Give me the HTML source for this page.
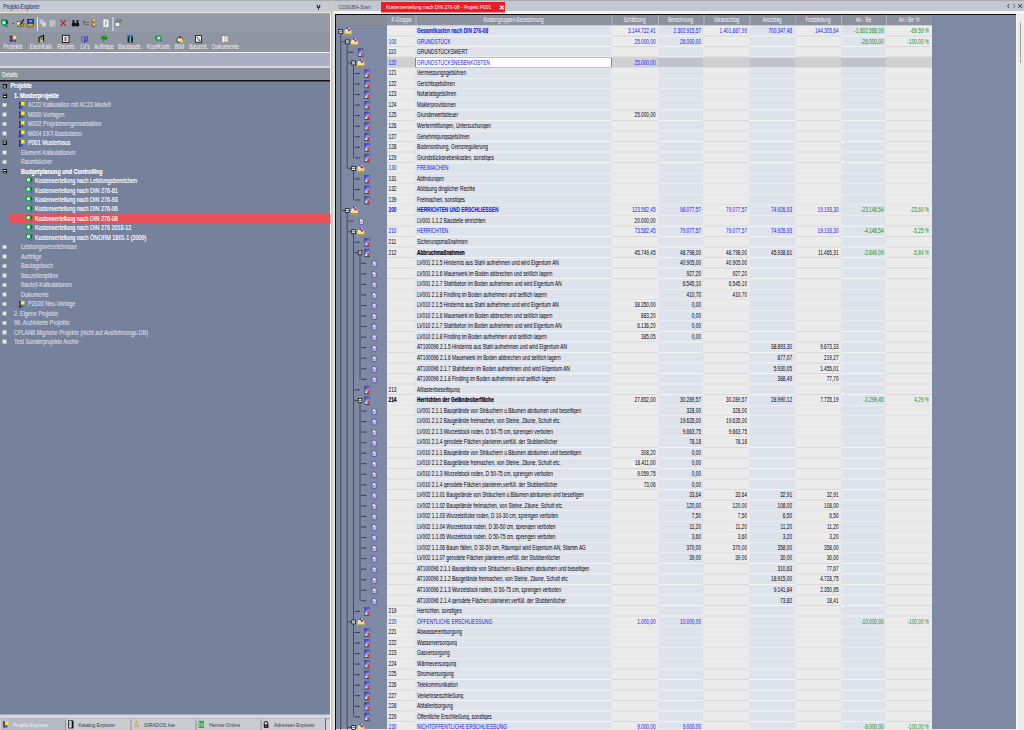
<!DOCTYPE html>
<html><head><meta charset="utf-8"><style>
html,body{margin:0;padding:0;width:1024px;height:730px;overflow:hidden;background:#76819b}
#root{position:absolute;left:0;top:0;width:2048px;height:1460px;transform:scale(0.5);transform-origin:0 0;overflow:hidden}
#root div{position:absolute}
#root .t{white-space:nowrap;font-family:"Liberation Sans",sans-serif}
</style></head><body><div id="root">
<div style="left:0.00px;top:0.00px;width:2048.00px;height:1460.00px;background:#76819b;"></div>
<div style="left:0.00px;top:0.00px;width:661.00px;height:2.00px;background:#a9acb2;"></div>
<div style="left:0.00px;top:2.00px;width:661.00px;height:22.00px;background:#c5c9d1;"></div>
<div class="t" style="left:5.60px;top:1.80px;height:22.00px;line-height:22.00px;font-size:13.20px;color:#34406e;font-weight:normal;transform:scaleX(0.77);transform-origin:0 50%;-webkit-text-stroke:0.25px #34406e;">Projekt-Explorer</div>
<div style="left:0.00px;top:24.00px;width:661.00px;height:3.20px;background:#e9e6d6;"></div>
<div style="left:0.00px;top:27.20px;width:661.00px;height:36.20px;background:#959ba6;"></div>
<div style="left:0.00px;top:63.40px;width:661.00px;height:1.60px;background:#a4a9b3;"></div>
<div style="left:0.00px;top:65.00px;width:661.00px;height:38.60px;background:#8f95a1;"></div>
<div style="left:0.00px;top:103.60px;width:661.00px;height:2.80px;background:#f2f2f2;"></div>
<div style="left:0.00px;top:106.40px;width:661.00px;height:26.00px;background:#aab0c2;"></div>
<div style="left:0.00px;top:132.40px;width:661.00px;height:3.60px;background:#d5d6d8;"></div>
<div style="left:0.00px;top:136.00px;width:661.00px;height:24.40px;background:#8a909c;"></div>
<div class="t" style="left:3.60px;top:137.80px;height:24.40px;line-height:24.40px;font-size:12.80px;color:#eef2e4;font-weight:normal;transform:scaleX(0.8);transform-origin:0 50%;-webkit-text-stroke:0.25px #eef2e4;">Details</div>
<div style="left:0.00px;top:160.40px;width:661.00px;height:2.40px;background:#151515;"></div>
<div style="left:0.00px;top:1429.40px;width:661.00px;height:7.60px;background:#d6d7da;"></div>
<div style="left:0.00px;top:1437.00px;width:661.00px;height:23.00px;background:#c9ccd3;"></div>
<div style="left:2.00px;top:1437.00px;width:128.00px;height:23.00px;background:#b4b9c4;"></div>
<div style="left:130.00px;top:1439.00px;width:1.60px;height:21.00px;background:#8e929a;"></div>
<div style="left:261.40px;top:1439.00px;width:1.60px;height:21.00px;background:#8e929a;"></div>
<div style="left:391.20px;top:1439.00px;width:1.60px;height:21.00px;background:#8e929a;"></div>
<div style="left:521.40px;top:1439.00px;width:1.60px;height:21.00px;background:#8e929a;"></div>
<div style="left:650.00px;top:1436.60px;width:10.00px;height:23.40px;background:#cfd2d8;"></div>
<div style="left:650.00px;top:1436.60px;width:1.80px;height:23.40px;background:#6a6a6a;"></div>
<div style="left:650.00px;top:1436.60px;width:10.00px;height:1.80px;background:#6a6a6a;"></div>
<div style="left:659.80px;top:0.00px;width:3.60px;height:1460.00px;background:#f6f5ee;"></div>
<div style="left:663.40px;top:0.00px;width:2.80px;height:1460.00px;background:#d4d0c2;"></div>
<div style="left:666.20px;top:0.00px;width:4.00px;height:1460.00px;background:#e4e4e0;"></div>
<div style="left:659.80px;top:2.00px;width:2.00px;height:22.00px;background:#c5c9d1;"></div>
<div style="left:659.80px;top:24.00px;width:2.00px;height:3.20px;background:#e9e6d6;"></div>
<div style="left:666.20px;top:0.00px;width:1.60px;height:22.40px;background:#c8c8c4;"></div>
<div style="left:659.80px;top:0.00px;width:8.00px;height:2.00px;background:#a9acb2;"></div>
<div style="left:667.00px;top:0.00px;width:1381.00px;height:2.00px;background:#a9acb2;"></div>
<div style="left:667.00px;top:2.00px;width:1381.00px;height:20.40px;background:#c3c7cf;"></div>
<div style="left:667.00px;top:22.40px;width:1381.00px;height:5.20px;background:#f4f4f4;"></div>
<div style="left:670.00px;top:27.60px;width:1362.00px;height:2.60px;background:#0c0c0c;"></div>
<div style="left:762.00px;top:4.00px;width:248.00px;height:21.20px;background:#e81c28;"></div>
<div class="t" style="left:772.00px;top:4.00px;height:21.20px;line-height:21.20px;font-size:12.00px;color:#ffffff;font-weight:normal;transform:scaleX(0.8);transform-origin:0 50%;">Kostenverteilung nach DIN 276-08 - Projekt P001</div>
<div class="t" style="left:997.00px;top:4.00px;height:21.20px;line-height:21.20px;font-size:13.00px;color:#ffffff;font-weight:bold;transform:scaleX(1.0);transform-origin:0 50%;">✕</div>
<div class="t" style="left:677.00px;top:3.00px;height:21.20px;line-height:21.20px;font-size:12.00px;color:#4a4a55;font-weight:normal;transform:scaleX(0.8);transform-origin:0 50%;">COSUBA-Start</div>
<div style="left:2032.00px;top:27.60px;width:16.00px;height:1432.40px;background:#ececec;"></div>
<div style="left:2032.00px;top:27.60px;width:2.40px;height:1432.40px;background:#f8f8f8;"></div>
<div style="left:2040.20px;top:45.20px;width:1.80px;height:80.80px;background:#a0a0a0;"></div>
<div style="left:670.00px;top:30.00px;width:2.40px;height:1430.00px;background:#0c0c0c;"></div>
<div style="left:1863.60px;top:30.20px;width:168.40px;height:1427.80px;background:#7e89a3;"></div>
<div style="left:672.40px;top:30.20px;width:1191.20px;height:20.80px;background:#8b919d;"></div>
<div style="left:672.40px;top:30.20px;width:101.60px;height:20.80px;background:#888e99;"></div>
<div class="t" style="left:2.50px;width:1600px;text-align:center;top:30.20px;height:20.80px;line-height:20.80px;font-size:12.60px;color:#f4f6fa;font-weight:normal;transform:scaleX(0.74);transform-origin:50% 50%;">K-Gruppe</div>
<div style="left:831.00px;top:30.20px;width:1.80px;height:20.80px;background:#b3b8c0;"></div>
<div class="t" style="left:227.00px;width:1600px;text-align:center;top:30.20px;height:20.80px;line-height:20.80px;font-size:12.60px;color:#f4f6fa;font-weight:normal;transform:scaleX(0.74);transform-origin:50% 50%;">Kostengruppen-Bezeichnung</div>
<div style="left:1223.00px;top:30.20px;width:1.80px;height:20.80px;background:#b3b8c0;"></div>
<div class="t" style="left:469.40px;width:1600px;text-align:center;top:30.20px;height:20.80px;line-height:20.80px;font-size:12.60px;color:#f4f6fa;font-weight:normal;transform:scaleX(0.74);transform-origin:50% 50%;">Schätzung</div>
<div style="left:1315.80px;top:30.20px;width:1.80px;height:20.80px;background:#b3b8c0;"></div>
<div class="t" style="left:561.40px;width:1600px;text-align:center;top:30.20px;height:20.80px;line-height:20.80px;font-size:12.60px;color:#f4f6fa;font-weight:normal;transform:scaleX(0.74);transform-origin:50% 50%;">Berechnung</div>
<div style="left:1407.00px;top:30.20px;width:1.80px;height:20.80px;background:#b3b8c0;"></div>
<div class="t" style="left:653.00px;width:1600px;text-align:center;top:30.20px;height:20.80px;line-height:20.80px;font-size:12.60px;color:#f4f6fa;font-weight:normal;transform:scaleX(0.74);transform-origin:50% 50%;">Voranschlag</div>
<div style="left:1499.00px;top:30.20px;width:1.80px;height:20.80px;background:#b3b8c0;"></div>
<div class="t" style="left:744.30px;width:1600px;text-align:center;top:30.20px;height:20.80px;line-height:20.80px;font-size:12.60px;color:#f4f6fa;font-weight:normal;transform:scaleX(0.74);transform-origin:50% 50%;">Anschlag</div>
<div style="left:1589.60px;top:30.20px;width:1.80px;height:20.80px;background:#b3b8c0;"></div>
<div class="t" style="left:835.80px;width:1600px;text-align:center;top:30.20px;height:20.80px;line-height:20.80px;font-size:12.60px;color:#f4f6fa;font-weight:normal;transform:scaleX(0.74);transform-origin:50% 50%;">Feststellung</div>
<div style="left:1682.00px;top:30.20px;width:1.80px;height:20.80px;background:#b3b8c0;"></div>
<div class="t" style="left:927.00px;width:1600px;text-align:center;top:30.20px;height:20.80px;line-height:20.80px;font-size:12.60px;color:#f4f6fa;font-weight:normal;transform:scaleX(0.74);transform-origin:50% 50%;">An - Be</div>
<div style="left:1772.00px;top:30.20px;width:1.80px;height:20.80px;background:#b3b8c0;"></div>
<div class="t" style="left:1017.80px;width:1600px;text-align:center;top:30.20px;height:20.80px;line-height:20.80px;font-size:12.60px;color:#f4f6fa;font-weight:normal;transform:scaleX(0.74);transform-origin:50% 50%;">An / Be %</div>
<div style="left:672.40px;top:49.80px;width:1191.20px;height:1.20px;background:#7b818c;"></div>
<div style="left:774.00px;top:51.00px;width:1089.60px;height:1407.00px;background:#e4e6ea;"></div>
<div style="left:672.40px;top:51.00px;width:101.60px;height:1407.00px;background:#7e89a3;"></div>
<div style="left:774.00px;top:51.00px;width:57.00px;height:1407.00px;background:#ebebeb;"></div>
<div style="left:831.00px;top:51.00px;width:392.00px;height:1407.00px;background:#dee2ea;"></div>
<div style="left:1223.00px;top:51.00px;width:92.80px;height:1407.00px;background:#ebebeb;"></div>
<div style="left:1315.80px;top:51.00px;width:91.20px;height:1407.00px;background:#dee2ea;"></div>
<div style="left:1407.00px;top:51.00px;width:92.00px;height:1407.00px;background:#ebebeb;"></div>
<div style="left:1499.00px;top:51.00px;width:90.60px;height:1407.00px;background:#dee2ea;"></div>
<div style="left:1589.60px;top:51.00px;width:92.40px;height:1407.00px;background:#ebebeb;"></div>
<div style="left:1682.00px;top:51.00px;width:90.00px;height:1407.00px;background:#dee2ea;"></div>
<div style="left:1772.00px;top:51.00px;width:91.60px;height:1407.00px;background:#ebebeb;"></div>
<div style="left:672.40px;top:1458.00px;width:1359.60px;height:2.00px;background:#e8e8e8;"></div>
<div style="left:774.00px;top:114.28px;width:57.00px;height:21.09px;background:#cfcfcf;"></div>
<div style="left:1223.00px;top:114.28px;width:92.80px;height:21.09px;background:#d0d0d0;"></div>
<div style="left:1315.80px;top:114.28px;width:91.20px;height:21.09px;background:#c0c3cb;"></div>
<div style="left:1407.00px;top:114.28px;width:92.00px;height:21.09px;background:#d0d0d0;"></div>
<div style="left:1499.00px;top:114.28px;width:90.60px;height:21.09px;background:#c0c3cb;"></div>
<div style="left:1589.60px;top:114.28px;width:92.40px;height:21.09px;background:#d0d0d0;"></div>
<div style="left:1682.00px;top:114.28px;width:90.00px;height:21.09px;background:#c0c3cb;"></div>
<div style="left:1772.00px;top:114.28px;width:91.60px;height:21.09px;background:#d0d0d0;"></div>
<div style="left:831.00px;top:114.88px;width:392.00px;height:19.89px;background:#ffffff;box-sizing:border-box;border:1.6px solid #202020;"></div>
<div style="left:774.00px;top:71.29px;width:57.00px;height:1.60px;background:#d8d8d8;"></div>
<div style="left:831.00px;top:71.29px;width:392.00px;height:1.60px;background:#f2f4f6;"></div>
<div style="left:1223.00px;top:71.29px;width:92.80px;height:1.60px;background:#d8d8d8;"></div>
<div style="left:1315.80px;top:71.29px;width:91.20px;height:1.60px;background:#f2f4f6;"></div>
<div style="left:1407.00px;top:71.29px;width:92.00px;height:1.60px;background:#d8d8d8;"></div>
<div style="left:1499.00px;top:71.29px;width:90.60px;height:1.60px;background:#f2f4f6;"></div>
<div style="left:1589.60px;top:71.29px;width:92.40px;height:1.60px;background:#d8d8d8;"></div>
<div style="left:1682.00px;top:71.29px;width:90.00px;height:1.60px;background:#f2f4f6;"></div>
<div style="left:1772.00px;top:71.29px;width:91.60px;height:1.60px;background:#d8d8d8;"></div>
<div style="left:774.00px;top:92.39px;width:57.00px;height:1.60px;background:#d8d8d8;"></div>
<div style="left:831.00px;top:92.39px;width:392.00px;height:1.60px;background:#f2f4f6;"></div>
<div style="left:1223.00px;top:92.39px;width:92.80px;height:1.60px;background:#d8d8d8;"></div>
<div style="left:1315.80px;top:92.39px;width:91.20px;height:1.60px;background:#f2f4f6;"></div>
<div style="left:1407.00px;top:92.39px;width:92.00px;height:1.60px;background:#d8d8d8;"></div>
<div style="left:1499.00px;top:92.39px;width:90.60px;height:1.60px;background:#f2f4f6;"></div>
<div style="left:1589.60px;top:92.39px;width:92.40px;height:1.60px;background:#d8d8d8;"></div>
<div style="left:1682.00px;top:92.39px;width:90.00px;height:1.60px;background:#f2f4f6;"></div>
<div style="left:1772.00px;top:92.39px;width:91.60px;height:1.60px;background:#d8d8d8;"></div>
<div style="left:774.00px;top:113.48px;width:57.00px;height:1.60px;background:#d8d8d8;"></div>
<div style="left:831.00px;top:113.48px;width:392.00px;height:1.60px;background:#f2f4f6;"></div>
<div style="left:1223.00px;top:113.48px;width:92.80px;height:1.60px;background:#d8d8d8;"></div>
<div style="left:1315.80px;top:113.48px;width:91.20px;height:1.60px;background:#f2f4f6;"></div>
<div style="left:1407.00px;top:113.48px;width:92.00px;height:1.60px;background:#d8d8d8;"></div>
<div style="left:1499.00px;top:113.48px;width:90.60px;height:1.60px;background:#f2f4f6;"></div>
<div style="left:1589.60px;top:113.48px;width:92.40px;height:1.60px;background:#d8d8d8;"></div>
<div style="left:1682.00px;top:113.48px;width:90.00px;height:1.60px;background:#f2f4f6;"></div>
<div style="left:1772.00px;top:113.48px;width:91.60px;height:1.60px;background:#d8d8d8;"></div>
<div style="left:774.00px;top:134.58px;width:57.00px;height:1.60px;background:#d8d8d8;"></div>
<div style="left:831.00px;top:134.58px;width:392.00px;height:1.60px;background:#f2f4f6;"></div>
<div style="left:1223.00px;top:134.58px;width:92.80px;height:1.60px;background:#d8d8d8;"></div>
<div style="left:1315.80px;top:134.58px;width:91.20px;height:1.60px;background:#f2f4f6;"></div>
<div style="left:1407.00px;top:134.58px;width:92.00px;height:1.60px;background:#d8d8d8;"></div>
<div style="left:1499.00px;top:134.58px;width:90.60px;height:1.60px;background:#f2f4f6;"></div>
<div style="left:1589.60px;top:134.58px;width:92.40px;height:1.60px;background:#d8d8d8;"></div>
<div style="left:1682.00px;top:134.58px;width:90.00px;height:1.60px;background:#f2f4f6;"></div>
<div style="left:1772.00px;top:134.58px;width:91.60px;height:1.60px;background:#d8d8d8;"></div>
<div style="left:774.00px;top:155.67px;width:57.00px;height:1.60px;background:#d8d8d8;"></div>
<div style="left:831.00px;top:155.67px;width:392.00px;height:1.60px;background:#f2f4f6;"></div>
<div style="left:1223.00px;top:155.67px;width:92.80px;height:1.60px;background:#d8d8d8;"></div>
<div style="left:1315.80px;top:155.67px;width:91.20px;height:1.60px;background:#f2f4f6;"></div>
<div style="left:1407.00px;top:155.67px;width:92.00px;height:1.60px;background:#d8d8d8;"></div>
<div style="left:1499.00px;top:155.67px;width:90.60px;height:1.60px;background:#f2f4f6;"></div>
<div style="left:1589.60px;top:155.67px;width:92.40px;height:1.60px;background:#d8d8d8;"></div>
<div style="left:1682.00px;top:155.67px;width:90.00px;height:1.60px;background:#f2f4f6;"></div>
<div style="left:1772.00px;top:155.67px;width:91.60px;height:1.60px;background:#d8d8d8;"></div>
<div style="left:774.00px;top:176.76px;width:57.00px;height:1.60px;background:#d8d8d8;"></div>
<div style="left:831.00px;top:176.76px;width:392.00px;height:1.60px;background:#f2f4f6;"></div>
<div style="left:1223.00px;top:176.76px;width:92.80px;height:1.60px;background:#d8d8d8;"></div>
<div style="left:1315.80px;top:176.76px;width:91.20px;height:1.60px;background:#f2f4f6;"></div>
<div style="left:1407.00px;top:176.76px;width:92.00px;height:1.60px;background:#d8d8d8;"></div>
<div style="left:1499.00px;top:176.76px;width:90.60px;height:1.60px;background:#f2f4f6;"></div>
<div style="left:1589.60px;top:176.76px;width:92.40px;height:1.60px;background:#d8d8d8;"></div>
<div style="left:1682.00px;top:176.76px;width:90.00px;height:1.60px;background:#f2f4f6;"></div>
<div style="left:1772.00px;top:176.76px;width:91.60px;height:1.60px;background:#d8d8d8;"></div>
<div style="left:774.00px;top:197.86px;width:57.00px;height:1.60px;background:#d8d8d8;"></div>
<div style="left:831.00px;top:197.86px;width:392.00px;height:1.60px;background:#f2f4f6;"></div>
<div style="left:1223.00px;top:197.86px;width:92.80px;height:1.60px;background:#d8d8d8;"></div>
<div style="left:1315.80px;top:197.86px;width:91.20px;height:1.60px;background:#f2f4f6;"></div>
<div style="left:1407.00px;top:197.86px;width:92.00px;height:1.60px;background:#d8d8d8;"></div>
<div style="left:1499.00px;top:197.86px;width:90.60px;height:1.60px;background:#f2f4f6;"></div>
<div style="left:1589.60px;top:197.86px;width:92.40px;height:1.60px;background:#d8d8d8;"></div>
<div style="left:1682.00px;top:197.86px;width:90.00px;height:1.60px;background:#f2f4f6;"></div>
<div style="left:1772.00px;top:197.86px;width:91.60px;height:1.60px;background:#d8d8d8;"></div>
<div style="left:774.00px;top:218.95px;width:57.00px;height:1.60px;background:#d8d8d8;"></div>
<div style="left:831.00px;top:218.95px;width:392.00px;height:1.60px;background:#f2f4f6;"></div>
<div style="left:1223.00px;top:218.95px;width:92.80px;height:1.60px;background:#d8d8d8;"></div>
<div style="left:1315.80px;top:218.95px;width:91.20px;height:1.60px;background:#f2f4f6;"></div>
<div style="left:1407.00px;top:218.95px;width:92.00px;height:1.60px;background:#d8d8d8;"></div>
<div style="left:1499.00px;top:218.95px;width:90.60px;height:1.60px;background:#f2f4f6;"></div>
<div style="left:1589.60px;top:218.95px;width:92.40px;height:1.60px;background:#d8d8d8;"></div>
<div style="left:1682.00px;top:218.95px;width:90.00px;height:1.60px;background:#f2f4f6;"></div>
<div style="left:1772.00px;top:218.95px;width:91.60px;height:1.60px;background:#d8d8d8;"></div>
<div style="left:774.00px;top:240.05px;width:57.00px;height:1.60px;background:#d8d8d8;"></div>
<div style="left:831.00px;top:240.05px;width:392.00px;height:1.60px;background:#f2f4f6;"></div>
<div style="left:1223.00px;top:240.05px;width:92.80px;height:1.60px;background:#d8d8d8;"></div>
<div style="left:1315.80px;top:240.05px;width:91.20px;height:1.60px;background:#f2f4f6;"></div>
<div style="left:1407.00px;top:240.05px;width:92.00px;height:1.60px;background:#d8d8d8;"></div>
<div style="left:1499.00px;top:240.05px;width:90.60px;height:1.60px;background:#f2f4f6;"></div>
<div style="left:1589.60px;top:240.05px;width:92.40px;height:1.60px;background:#d8d8d8;"></div>
<div style="left:1682.00px;top:240.05px;width:90.00px;height:1.60px;background:#f2f4f6;"></div>
<div style="left:1772.00px;top:240.05px;width:91.60px;height:1.60px;background:#d8d8d8;"></div>
<div style="left:774.00px;top:261.14px;width:57.00px;height:1.60px;background:#d8d8d8;"></div>
<div style="left:831.00px;top:261.14px;width:392.00px;height:1.60px;background:#f2f4f6;"></div>
<div style="left:1223.00px;top:261.14px;width:92.80px;height:1.60px;background:#d8d8d8;"></div>
<div style="left:1315.80px;top:261.14px;width:91.20px;height:1.60px;background:#f2f4f6;"></div>
<div style="left:1407.00px;top:261.14px;width:92.00px;height:1.60px;background:#d8d8d8;"></div>
<div style="left:1499.00px;top:261.14px;width:90.60px;height:1.60px;background:#f2f4f6;"></div>
<div style="left:1589.60px;top:261.14px;width:92.40px;height:1.60px;background:#d8d8d8;"></div>
<div style="left:1682.00px;top:261.14px;width:90.00px;height:1.60px;background:#f2f4f6;"></div>
<div style="left:1772.00px;top:261.14px;width:91.60px;height:1.60px;background:#d8d8d8;"></div>
<div style="left:774.00px;top:282.23px;width:57.00px;height:1.60px;background:#d8d8d8;"></div>
<div style="left:831.00px;top:282.23px;width:392.00px;height:1.60px;background:#f2f4f6;"></div>
<div style="left:1223.00px;top:282.23px;width:92.80px;height:1.60px;background:#d8d8d8;"></div>
<div style="left:1315.80px;top:282.23px;width:91.20px;height:1.60px;background:#f2f4f6;"></div>
<div style="left:1407.00px;top:282.23px;width:92.00px;height:1.60px;background:#d8d8d8;"></div>
<div style="left:1499.00px;top:282.23px;width:90.60px;height:1.60px;background:#f2f4f6;"></div>
<div style="left:1589.60px;top:282.23px;width:92.40px;height:1.60px;background:#d8d8d8;"></div>
<div style="left:1682.00px;top:282.23px;width:90.00px;height:1.60px;background:#f2f4f6;"></div>
<div style="left:1772.00px;top:282.23px;width:91.60px;height:1.60px;background:#d8d8d8;"></div>
<div style="left:774.00px;top:303.33px;width:57.00px;height:1.60px;background:#d8d8d8;"></div>
<div style="left:831.00px;top:303.33px;width:392.00px;height:1.60px;background:#f2f4f6;"></div>
<div style="left:1223.00px;top:303.33px;width:92.80px;height:1.60px;background:#d8d8d8;"></div>
<div style="left:1315.80px;top:303.33px;width:91.20px;height:1.60px;background:#f2f4f6;"></div>
<div style="left:1407.00px;top:303.33px;width:92.00px;height:1.60px;background:#d8d8d8;"></div>
<div style="left:1499.00px;top:303.33px;width:90.60px;height:1.60px;background:#f2f4f6;"></div>
<div style="left:1589.60px;top:303.33px;width:92.40px;height:1.60px;background:#d8d8d8;"></div>
<div style="left:1682.00px;top:303.33px;width:90.00px;height:1.60px;background:#f2f4f6;"></div>
<div style="left:1772.00px;top:303.33px;width:91.60px;height:1.60px;background:#d8d8d8;"></div>
<div style="left:774.00px;top:324.42px;width:57.00px;height:1.60px;background:#d8d8d8;"></div>
<div style="left:831.00px;top:324.42px;width:392.00px;height:1.60px;background:#f2f4f6;"></div>
<div style="left:1223.00px;top:324.42px;width:92.80px;height:1.60px;background:#d8d8d8;"></div>
<div style="left:1315.80px;top:324.42px;width:91.20px;height:1.60px;background:#f2f4f6;"></div>
<div style="left:1407.00px;top:324.42px;width:92.00px;height:1.60px;background:#d8d8d8;"></div>
<div style="left:1499.00px;top:324.42px;width:90.60px;height:1.60px;background:#f2f4f6;"></div>
<div style="left:1589.60px;top:324.42px;width:92.40px;height:1.60px;background:#d8d8d8;"></div>
<div style="left:1682.00px;top:324.42px;width:90.00px;height:1.60px;background:#f2f4f6;"></div>
<div style="left:1772.00px;top:324.42px;width:91.60px;height:1.60px;background:#d8d8d8;"></div>
<div style="left:774.00px;top:345.52px;width:57.00px;height:1.60px;background:#d8d8d8;"></div>
<div style="left:831.00px;top:345.52px;width:392.00px;height:1.60px;background:#f2f4f6;"></div>
<div style="left:1223.00px;top:345.52px;width:92.80px;height:1.60px;background:#d8d8d8;"></div>
<div style="left:1315.80px;top:345.52px;width:91.20px;height:1.60px;background:#f2f4f6;"></div>
<div style="left:1407.00px;top:345.52px;width:92.00px;height:1.60px;background:#d8d8d8;"></div>
<div style="left:1499.00px;top:345.52px;width:90.60px;height:1.60px;background:#f2f4f6;"></div>
<div style="left:1589.60px;top:345.52px;width:92.40px;height:1.60px;background:#d8d8d8;"></div>
<div style="left:1682.00px;top:345.52px;width:90.00px;height:1.60px;background:#f2f4f6;"></div>
<div style="left:1772.00px;top:345.52px;width:91.60px;height:1.60px;background:#d8d8d8;"></div>
<div style="left:774.00px;top:366.61px;width:57.00px;height:1.60px;background:#d8d8d8;"></div>
<div style="left:831.00px;top:366.61px;width:392.00px;height:1.60px;background:#f2f4f6;"></div>
<div style="left:1223.00px;top:366.61px;width:92.80px;height:1.60px;background:#d8d8d8;"></div>
<div style="left:1315.80px;top:366.61px;width:91.20px;height:1.60px;background:#f2f4f6;"></div>
<div style="left:1407.00px;top:366.61px;width:92.00px;height:1.60px;background:#d8d8d8;"></div>
<div style="left:1499.00px;top:366.61px;width:90.60px;height:1.60px;background:#f2f4f6;"></div>
<div style="left:1589.60px;top:366.61px;width:92.40px;height:1.60px;background:#d8d8d8;"></div>
<div style="left:1682.00px;top:366.61px;width:90.00px;height:1.60px;background:#f2f4f6;"></div>
<div style="left:1772.00px;top:366.61px;width:91.60px;height:1.60px;background:#d8d8d8;"></div>
<div style="left:774.00px;top:387.70px;width:57.00px;height:1.60px;background:#d8d8d8;"></div>
<div style="left:831.00px;top:387.70px;width:392.00px;height:1.60px;background:#f2f4f6;"></div>
<div style="left:1223.00px;top:387.70px;width:92.80px;height:1.60px;background:#d8d8d8;"></div>
<div style="left:1315.80px;top:387.70px;width:91.20px;height:1.60px;background:#f2f4f6;"></div>
<div style="left:1407.00px;top:387.70px;width:92.00px;height:1.60px;background:#d8d8d8;"></div>
<div style="left:1499.00px;top:387.70px;width:90.60px;height:1.60px;background:#f2f4f6;"></div>
<div style="left:1589.60px;top:387.70px;width:92.40px;height:1.60px;background:#d8d8d8;"></div>
<div style="left:1682.00px;top:387.70px;width:90.00px;height:1.60px;background:#f2f4f6;"></div>
<div style="left:1772.00px;top:387.70px;width:91.60px;height:1.60px;background:#d8d8d8;"></div>
<div style="left:774.00px;top:408.80px;width:57.00px;height:1.60px;background:#d8d8d8;"></div>
<div style="left:831.00px;top:408.80px;width:392.00px;height:1.60px;background:#f2f4f6;"></div>
<div style="left:1223.00px;top:408.80px;width:92.80px;height:1.60px;background:#d8d8d8;"></div>
<div style="left:1315.80px;top:408.80px;width:91.20px;height:1.60px;background:#f2f4f6;"></div>
<div style="left:1407.00px;top:408.80px;width:92.00px;height:1.60px;background:#d8d8d8;"></div>
<div style="left:1499.00px;top:408.80px;width:90.60px;height:1.60px;background:#f2f4f6;"></div>
<div style="left:1589.60px;top:408.80px;width:92.40px;height:1.60px;background:#d8d8d8;"></div>
<div style="left:1682.00px;top:408.80px;width:90.00px;height:1.60px;background:#f2f4f6;"></div>
<div style="left:1772.00px;top:408.80px;width:91.60px;height:1.60px;background:#d8d8d8;"></div>
<div style="left:774.00px;top:429.89px;width:57.00px;height:1.60px;background:#d8d8d8;"></div>
<div style="left:831.00px;top:429.89px;width:392.00px;height:1.60px;background:#f2f4f6;"></div>
<div style="left:1223.00px;top:429.89px;width:92.80px;height:1.60px;background:#d8d8d8;"></div>
<div style="left:1315.80px;top:429.89px;width:91.20px;height:1.60px;background:#f2f4f6;"></div>
<div style="left:1407.00px;top:429.89px;width:92.00px;height:1.60px;background:#d8d8d8;"></div>
<div style="left:1499.00px;top:429.89px;width:90.60px;height:1.60px;background:#f2f4f6;"></div>
<div style="left:1589.60px;top:429.89px;width:92.40px;height:1.60px;background:#d8d8d8;"></div>
<div style="left:1682.00px;top:429.89px;width:90.00px;height:1.60px;background:#f2f4f6;"></div>
<div style="left:1772.00px;top:429.89px;width:91.60px;height:1.60px;background:#d8d8d8;"></div>
<div style="left:774.00px;top:450.99px;width:57.00px;height:1.60px;background:#d8d8d8;"></div>
<div style="left:831.00px;top:450.99px;width:392.00px;height:1.60px;background:#f2f4f6;"></div>
<div style="left:1223.00px;top:450.99px;width:92.80px;height:1.60px;background:#d8d8d8;"></div>
<div style="left:1315.80px;top:450.99px;width:91.20px;height:1.60px;background:#f2f4f6;"></div>
<div style="left:1407.00px;top:450.99px;width:92.00px;height:1.60px;background:#d8d8d8;"></div>
<div style="left:1499.00px;top:450.99px;width:90.60px;height:1.60px;background:#f2f4f6;"></div>
<div style="left:1589.60px;top:450.99px;width:92.40px;height:1.60px;background:#d8d8d8;"></div>
<div style="left:1682.00px;top:450.99px;width:90.00px;height:1.60px;background:#f2f4f6;"></div>
<div style="left:1772.00px;top:450.99px;width:91.60px;height:1.60px;background:#d8d8d8;"></div>
<div style="left:774.00px;top:472.08px;width:57.00px;height:1.60px;background:#d8d8d8;"></div>
<div style="left:831.00px;top:472.08px;width:392.00px;height:1.60px;background:#f2f4f6;"></div>
<div style="left:1223.00px;top:472.08px;width:92.80px;height:1.60px;background:#d8d8d8;"></div>
<div style="left:1315.80px;top:472.08px;width:91.20px;height:1.60px;background:#f2f4f6;"></div>
<div style="left:1407.00px;top:472.08px;width:92.00px;height:1.60px;background:#d8d8d8;"></div>
<div style="left:1499.00px;top:472.08px;width:90.60px;height:1.60px;background:#f2f4f6;"></div>
<div style="left:1589.60px;top:472.08px;width:92.40px;height:1.60px;background:#d8d8d8;"></div>
<div style="left:1682.00px;top:472.08px;width:90.00px;height:1.60px;background:#f2f4f6;"></div>
<div style="left:1772.00px;top:472.08px;width:91.60px;height:1.60px;background:#d8d8d8;"></div>
<div style="left:774.00px;top:493.17px;width:57.00px;height:1.60px;background:#d8d8d8;"></div>
<div style="left:831.00px;top:493.17px;width:392.00px;height:1.60px;background:#f2f4f6;"></div>
<div style="left:1223.00px;top:493.17px;width:92.80px;height:1.60px;background:#d8d8d8;"></div>
<div style="left:1315.80px;top:493.17px;width:91.20px;height:1.60px;background:#f2f4f6;"></div>
<div style="left:1407.00px;top:493.17px;width:92.00px;height:1.60px;background:#d8d8d8;"></div>
<div style="left:1499.00px;top:493.17px;width:90.60px;height:1.60px;background:#f2f4f6;"></div>
<div style="left:1589.60px;top:493.17px;width:92.40px;height:1.60px;background:#d8d8d8;"></div>
<div style="left:1682.00px;top:493.17px;width:90.00px;height:1.60px;background:#f2f4f6;"></div>
<div style="left:1772.00px;top:493.17px;width:91.60px;height:1.60px;background:#d8d8d8;"></div>
<div style="left:774.00px;top:514.27px;width:57.00px;height:1.60px;background:#d8d8d8;"></div>
<div style="left:831.00px;top:514.27px;width:392.00px;height:1.60px;background:#f2f4f6;"></div>
<div style="left:1223.00px;top:514.27px;width:92.80px;height:1.60px;background:#d8d8d8;"></div>
<div style="left:1315.80px;top:514.27px;width:91.20px;height:1.60px;background:#f2f4f6;"></div>
<div style="left:1407.00px;top:514.27px;width:92.00px;height:1.60px;background:#d8d8d8;"></div>
<div style="left:1499.00px;top:514.27px;width:90.60px;height:1.60px;background:#f2f4f6;"></div>
<div style="left:1589.60px;top:514.27px;width:92.40px;height:1.60px;background:#d8d8d8;"></div>
<div style="left:1682.00px;top:514.27px;width:90.00px;height:1.60px;background:#f2f4f6;"></div>
<div style="left:1772.00px;top:514.27px;width:91.60px;height:1.60px;background:#d8d8d8;"></div>
<div style="left:774.00px;top:535.36px;width:57.00px;height:1.60px;background:#d8d8d8;"></div>
<div style="left:831.00px;top:535.36px;width:392.00px;height:1.60px;background:#f2f4f6;"></div>
<div style="left:1223.00px;top:535.36px;width:92.80px;height:1.60px;background:#d8d8d8;"></div>
<div style="left:1315.80px;top:535.36px;width:91.20px;height:1.60px;background:#f2f4f6;"></div>
<div style="left:1407.00px;top:535.36px;width:92.00px;height:1.60px;background:#d8d8d8;"></div>
<div style="left:1499.00px;top:535.36px;width:90.60px;height:1.60px;background:#f2f4f6;"></div>
<div style="left:1589.60px;top:535.36px;width:92.40px;height:1.60px;background:#d8d8d8;"></div>
<div style="left:1682.00px;top:535.36px;width:90.00px;height:1.60px;background:#f2f4f6;"></div>
<div style="left:1772.00px;top:535.36px;width:91.60px;height:1.60px;background:#d8d8d8;"></div>
<div style="left:774.00px;top:556.46px;width:57.00px;height:1.60px;background:#d8d8d8;"></div>
<div style="left:831.00px;top:556.46px;width:392.00px;height:1.60px;background:#f2f4f6;"></div>
<div style="left:1223.00px;top:556.46px;width:92.80px;height:1.60px;background:#d8d8d8;"></div>
<div style="left:1315.80px;top:556.46px;width:91.20px;height:1.60px;background:#f2f4f6;"></div>
<div style="left:1407.00px;top:556.46px;width:92.00px;height:1.60px;background:#d8d8d8;"></div>
<div style="left:1499.00px;top:556.46px;width:90.60px;height:1.60px;background:#f2f4f6;"></div>
<div style="left:1589.60px;top:556.46px;width:92.40px;height:1.60px;background:#d8d8d8;"></div>
<div style="left:1682.00px;top:556.46px;width:90.00px;height:1.60px;background:#f2f4f6;"></div>
<div style="left:1772.00px;top:556.46px;width:91.60px;height:1.60px;background:#d8d8d8;"></div>
<div style="left:774.00px;top:577.55px;width:57.00px;height:1.60px;background:#d8d8d8;"></div>
<div style="left:831.00px;top:577.55px;width:392.00px;height:1.60px;background:#f2f4f6;"></div>
<div style="left:1223.00px;top:577.55px;width:92.80px;height:1.60px;background:#d8d8d8;"></div>
<div style="left:1315.80px;top:577.55px;width:91.20px;height:1.60px;background:#f2f4f6;"></div>
<div style="left:1407.00px;top:577.55px;width:92.00px;height:1.60px;background:#d8d8d8;"></div>
<div style="left:1499.00px;top:577.55px;width:90.60px;height:1.60px;background:#f2f4f6;"></div>
<div style="left:1589.60px;top:577.55px;width:92.40px;height:1.60px;background:#d8d8d8;"></div>
<div style="left:1682.00px;top:577.55px;width:90.00px;height:1.60px;background:#f2f4f6;"></div>
<div style="left:1772.00px;top:577.55px;width:91.60px;height:1.60px;background:#d8d8d8;"></div>
<div style="left:774.00px;top:598.64px;width:57.00px;height:1.60px;background:#d8d8d8;"></div>
<div style="left:831.00px;top:598.64px;width:392.00px;height:1.60px;background:#f2f4f6;"></div>
<div style="left:1223.00px;top:598.64px;width:92.80px;height:1.60px;background:#d8d8d8;"></div>
<div style="left:1315.80px;top:598.64px;width:91.20px;height:1.60px;background:#f2f4f6;"></div>
<div style="left:1407.00px;top:598.64px;width:92.00px;height:1.60px;background:#d8d8d8;"></div>
<div style="left:1499.00px;top:598.64px;width:90.60px;height:1.60px;background:#f2f4f6;"></div>
<div style="left:1589.60px;top:598.64px;width:92.40px;height:1.60px;background:#d8d8d8;"></div>
<div style="left:1682.00px;top:598.64px;width:90.00px;height:1.60px;background:#f2f4f6;"></div>
<div style="left:1772.00px;top:598.64px;width:91.60px;height:1.60px;background:#d8d8d8;"></div>
<div style="left:774.00px;top:619.74px;width:57.00px;height:1.60px;background:#d8d8d8;"></div>
<div style="left:831.00px;top:619.74px;width:392.00px;height:1.60px;background:#f2f4f6;"></div>
<div style="left:1223.00px;top:619.74px;width:92.80px;height:1.60px;background:#d8d8d8;"></div>
<div style="left:1315.80px;top:619.74px;width:91.20px;height:1.60px;background:#f2f4f6;"></div>
<div style="left:1407.00px;top:619.74px;width:92.00px;height:1.60px;background:#d8d8d8;"></div>
<div style="left:1499.00px;top:619.74px;width:90.60px;height:1.60px;background:#f2f4f6;"></div>
<div style="left:1589.60px;top:619.74px;width:92.40px;height:1.60px;background:#d8d8d8;"></div>
<div style="left:1682.00px;top:619.74px;width:90.00px;height:1.60px;background:#f2f4f6;"></div>
<div style="left:1772.00px;top:619.74px;width:91.60px;height:1.60px;background:#d8d8d8;"></div>
<div style="left:774.00px;top:640.83px;width:57.00px;height:1.60px;background:#d8d8d8;"></div>
<div style="left:831.00px;top:640.83px;width:392.00px;height:1.60px;background:#f2f4f6;"></div>
<div style="left:1223.00px;top:640.83px;width:92.80px;height:1.60px;background:#d8d8d8;"></div>
<div style="left:1315.80px;top:640.83px;width:91.20px;height:1.60px;background:#f2f4f6;"></div>
<div style="left:1407.00px;top:640.83px;width:92.00px;height:1.60px;background:#d8d8d8;"></div>
<div style="left:1499.00px;top:640.83px;width:90.60px;height:1.60px;background:#f2f4f6;"></div>
<div style="left:1589.60px;top:640.83px;width:92.40px;height:1.60px;background:#d8d8d8;"></div>
<div style="left:1682.00px;top:640.83px;width:90.00px;height:1.60px;background:#f2f4f6;"></div>
<div style="left:1772.00px;top:640.83px;width:91.60px;height:1.60px;background:#d8d8d8;"></div>
<div style="left:774.00px;top:661.93px;width:57.00px;height:1.60px;background:#d8d8d8;"></div>
<div style="left:831.00px;top:661.93px;width:392.00px;height:1.60px;background:#f2f4f6;"></div>
<div style="left:1223.00px;top:661.93px;width:92.80px;height:1.60px;background:#d8d8d8;"></div>
<div style="left:1315.80px;top:661.93px;width:91.20px;height:1.60px;background:#f2f4f6;"></div>
<div style="left:1407.00px;top:661.93px;width:92.00px;height:1.60px;background:#d8d8d8;"></div>
<div style="left:1499.00px;top:661.93px;width:90.60px;height:1.60px;background:#f2f4f6;"></div>
<div style="left:1589.60px;top:661.93px;width:92.40px;height:1.60px;background:#d8d8d8;"></div>
<div style="left:1682.00px;top:661.93px;width:90.00px;height:1.60px;background:#f2f4f6;"></div>
<div style="left:1772.00px;top:661.93px;width:91.60px;height:1.60px;background:#d8d8d8;"></div>
<div style="left:774.00px;top:683.02px;width:57.00px;height:1.60px;background:#d8d8d8;"></div>
<div style="left:831.00px;top:683.02px;width:392.00px;height:1.60px;background:#f2f4f6;"></div>
<div style="left:1223.00px;top:683.02px;width:92.80px;height:1.60px;background:#d8d8d8;"></div>
<div style="left:1315.80px;top:683.02px;width:91.20px;height:1.60px;background:#f2f4f6;"></div>
<div style="left:1407.00px;top:683.02px;width:92.00px;height:1.60px;background:#d8d8d8;"></div>
<div style="left:1499.00px;top:683.02px;width:90.60px;height:1.60px;background:#f2f4f6;"></div>
<div style="left:1589.60px;top:683.02px;width:92.40px;height:1.60px;background:#d8d8d8;"></div>
<div style="left:1682.00px;top:683.02px;width:90.00px;height:1.60px;background:#f2f4f6;"></div>
<div style="left:1772.00px;top:683.02px;width:91.60px;height:1.60px;background:#d8d8d8;"></div>
<div style="left:774.00px;top:704.11px;width:57.00px;height:1.60px;background:#d8d8d8;"></div>
<div style="left:831.00px;top:704.11px;width:392.00px;height:1.60px;background:#f2f4f6;"></div>
<div style="left:1223.00px;top:704.11px;width:92.80px;height:1.60px;background:#d8d8d8;"></div>
<div style="left:1315.80px;top:704.11px;width:91.20px;height:1.60px;background:#f2f4f6;"></div>
<div style="left:1407.00px;top:704.11px;width:92.00px;height:1.60px;background:#d8d8d8;"></div>
<div style="left:1499.00px;top:704.11px;width:90.60px;height:1.60px;background:#f2f4f6;"></div>
<div style="left:1589.60px;top:704.11px;width:92.40px;height:1.60px;background:#d8d8d8;"></div>
<div style="left:1682.00px;top:704.11px;width:90.00px;height:1.60px;background:#f2f4f6;"></div>
<div style="left:1772.00px;top:704.11px;width:91.60px;height:1.60px;background:#d8d8d8;"></div>
<div style="left:774.00px;top:725.21px;width:57.00px;height:1.60px;background:#d8d8d8;"></div>
<div style="left:831.00px;top:725.21px;width:392.00px;height:1.60px;background:#f2f4f6;"></div>
<div style="left:1223.00px;top:725.21px;width:92.80px;height:1.60px;background:#d8d8d8;"></div>
<div style="left:1315.80px;top:725.21px;width:91.20px;height:1.60px;background:#f2f4f6;"></div>
<div style="left:1407.00px;top:725.21px;width:92.00px;height:1.60px;background:#d8d8d8;"></div>
<div style="left:1499.00px;top:725.21px;width:90.60px;height:1.60px;background:#f2f4f6;"></div>
<div style="left:1589.60px;top:725.21px;width:92.40px;height:1.60px;background:#d8d8d8;"></div>
<div style="left:1682.00px;top:725.21px;width:90.00px;height:1.60px;background:#f2f4f6;"></div>
<div style="left:1772.00px;top:725.21px;width:91.60px;height:1.60px;background:#d8d8d8;"></div>
<div style="left:774.00px;top:746.30px;width:57.00px;height:1.60px;background:#d8d8d8;"></div>
<div style="left:831.00px;top:746.30px;width:392.00px;height:1.60px;background:#f2f4f6;"></div>
<div style="left:1223.00px;top:746.30px;width:92.80px;height:1.60px;background:#d8d8d8;"></div>
<div style="left:1315.80px;top:746.30px;width:91.20px;height:1.60px;background:#f2f4f6;"></div>
<div style="left:1407.00px;top:746.30px;width:92.00px;height:1.60px;background:#d8d8d8;"></div>
<div style="left:1499.00px;top:746.30px;width:90.60px;height:1.60px;background:#f2f4f6;"></div>
<div style="left:1589.60px;top:746.30px;width:92.40px;height:1.60px;background:#d8d8d8;"></div>
<div style="left:1682.00px;top:746.30px;width:90.00px;height:1.60px;background:#f2f4f6;"></div>
<div style="left:1772.00px;top:746.30px;width:91.60px;height:1.60px;background:#d8d8d8;"></div>
<div style="left:774.00px;top:767.40px;width:57.00px;height:1.60px;background:#d8d8d8;"></div>
<div style="left:831.00px;top:767.40px;width:392.00px;height:1.60px;background:#f2f4f6;"></div>
<div style="left:1223.00px;top:767.40px;width:92.80px;height:1.60px;background:#d8d8d8;"></div>
<div style="left:1315.80px;top:767.40px;width:91.20px;height:1.60px;background:#f2f4f6;"></div>
<div style="left:1407.00px;top:767.40px;width:92.00px;height:1.60px;background:#d8d8d8;"></div>
<div style="left:1499.00px;top:767.40px;width:90.60px;height:1.60px;background:#f2f4f6;"></div>
<div style="left:1589.60px;top:767.40px;width:92.40px;height:1.60px;background:#d8d8d8;"></div>
<div style="left:1682.00px;top:767.40px;width:90.00px;height:1.60px;background:#f2f4f6;"></div>
<div style="left:1772.00px;top:767.40px;width:91.60px;height:1.60px;background:#d8d8d8;"></div>
<div style="left:774.00px;top:788.49px;width:57.00px;height:1.60px;background:#d8d8d8;"></div>
<div style="left:831.00px;top:788.49px;width:392.00px;height:1.60px;background:#f2f4f6;"></div>
<div style="left:1223.00px;top:788.49px;width:92.80px;height:1.60px;background:#d8d8d8;"></div>
<div style="left:1315.80px;top:788.49px;width:91.20px;height:1.60px;background:#f2f4f6;"></div>
<div style="left:1407.00px;top:788.49px;width:92.00px;height:1.60px;background:#d8d8d8;"></div>
<div style="left:1499.00px;top:788.49px;width:90.60px;height:1.60px;background:#f2f4f6;"></div>
<div style="left:1589.60px;top:788.49px;width:92.40px;height:1.60px;background:#d8d8d8;"></div>
<div style="left:1682.00px;top:788.49px;width:90.00px;height:1.60px;background:#f2f4f6;"></div>
<div style="left:1772.00px;top:788.49px;width:91.60px;height:1.60px;background:#d8d8d8;"></div>
<div style="left:774.00px;top:809.58px;width:57.00px;height:1.60px;background:#d8d8d8;"></div>
<div style="left:831.00px;top:809.58px;width:392.00px;height:1.60px;background:#f2f4f6;"></div>
<div style="left:1223.00px;top:809.58px;width:92.80px;height:1.60px;background:#d8d8d8;"></div>
<div style="left:1315.80px;top:809.58px;width:91.20px;height:1.60px;background:#f2f4f6;"></div>
<div style="left:1407.00px;top:809.58px;width:92.00px;height:1.60px;background:#d8d8d8;"></div>
<div style="left:1499.00px;top:809.58px;width:90.60px;height:1.60px;background:#f2f4f6;"></div>
<div style="left:1589.60px;top:809.58px;width:92.40px;height:1.60px;background:#d8d8d8;"></div>
<div style="left:1682.00px;top:809.58px;width:90.00px;height:1.60px;background:#f2f4f6;"></div>
<div style="left:1772.00px;top:809.58px;width:91.60px;height:1.60px;background:#d8d8d8;"></div>
<div style="left:774.00px;top:830.68px;width:57.00px;height:1.60px;background:#d8d8d8;"></div>
<div style="left:831.00px;top:830.68px;width:392.00px;height:1.60px;background:#f2f4f6;"></div>
<div style="left:1223.00px;top:830.68px;width:92.80px;height:1.60px;background:#d8d8d8;"></div>
<div style="left:1315.80px;top:830.68px;width:91.20px;height:1.60px;background:#f2f4f6;"></div>
<div style="left:1407.00px;top:830.68px;width:92.00px;height:1.60px;background:#d8d8d8;"></div>
<div style="left:1499.00px;top:830.68px;width:90.60px;height:1.60px;background:#f2f4f6;"></div>
<div style="left:1589.60px;top:830.68px;width:92.40px;height:1.60px;background:#d8d8d8;"></div>
<div style="left:1682.00px;top:830.68px;width:90.00px;height:1.60px;background:#f2f4f6;"></div>
<div style="left:1772.00px;top:830.68px;width:91.60px;height:1.60px;background:#d8d8d8;"></div>
<div style="left:774.00px;top:851.77px;width:57.00px;height:1.60px;background:#d8d8d8;"></div>
<div style="left:831.00px;top:851.77px;width:392.00px;height:1.60px;background:#f2f4f6;"></div>
<div style="left:1223.00px;top:851.77px;width:92.80px;height:1.60px;background:#d8d8d8;"></div>
<div style="left:1315.80px;top:851.77px;width:91.20px;height:1.60px;background:#f2f4f6;"></div>
<div style="left:1407.00px;top:851.77px;width:92.00px;height:1.60px;background:#d8d8d8;"></div>
<div style="left:1499.00px;top:851.77px;width:90.60px;height:1.60px;background:#f2f4f6;"></div>
<div style="left:1589.60px;top:851.77px;width:92.40px;height:1.60px;background:#d8d8d8;"></div>
<div style="left:1682.00px;top:851.77px;width:90.00px;height:1.60px;background:#f2f4f6;"></div>
<div style="left:1772.00px;top:851.77px;width:91.60px;height:1.60px;background:#d8d8d8;"></div>
<div style="left:774.00px;top:872.87px;width:57.00px;height:1.60px;background:#d8d8d8;"></div>
<div style="left:831.00px;top:872.87px;width:392.00px;height:1.60px;background:#f2f4f6;"></div>
<div style="left:1223.00px;top:872.87px;width:92.80px;height:1.60px;background:#d8d8d8;"></div>
<div style="left:1315.80px;top:872.87px;width:91.20px;height:1.60px;background:#f2f4f6;"></div>
<div style="left:1407.00px;top:872.87px;width:92.00px;height:1.60px;background:#d8d8d8;"></div>
<div style="left:1499.00px;top:872.87px;width:90.60px;height:1.60px;background:#f2f4f6;"></div>
<div style="left:1589.60px;top:872.87px;width:92.40px;height:1.60px;background:#d8d8d8;"></div>
<div style="left:1682.00px;top:872.87px;width:90.00px;height:1.60px;background:#f2f4f6;"></div>
<div style="left:1772.00px;top:872.87px;width:91.60px;height:1.60px;background:#d8d8d8;"></div>
<div style="left:774.00px;top:893.96px;width:57.00px;height:1.60px;background:#d8d8d8;"></div>
<div style="left:831.00px;top:893.96px;width:392.00px;height:1.60px;background:#f2f4f6;"></div>
<div style="left:1223.00px;top:893.96px;width:92.80px;height:1.60px;background:#d8d8d8;"></div>
<div style="left:1315.80px;top:893.96px;width:91.20px;height:1.60px;background:#f2f4f6;"></div>
<div style="left:1407.00px;top:893.96px;width:92.00px;height:1.60px;background:#d8d8d8;"></div>
<div style="left:1499.00px;top:893.96px;width:90.60px;height:1.60px;background:#f2f4f6;"></div>
<div style="left:1589.60px;top:893.96px;width:92.40px;height:1.60px;background:#d8d8d8;"></div>
<div style="left:1682.00px;top:893.96px;width:90.00px;height:1.60px;background:#f2f4f6;"></div>
<div style="left:1772.00px;top:893.96px;width:91.60px;height:1.60px;background:#d8d8d8;"></div>
<div style="left:774.00px;top:915.05px;width:57.00px;height:1.60px;background:#d8d8d8;"></div>
<div style="left:831.00px;top:915.05px;width:392.00px;height:1.60px;background:#f2f4f6;"></div>
<div style="left:1223.00px;top:915.05px;width:92.80px;height:1.60px;background:#d8d8d8;"></div>
<div style="left:1315.80px;top:915.05px;width:91.20px;height:1.60px;background:#f2f4f6;"></div>
<div style="left:1407.00px;top:915.05px;width:92.00px;height:1.60px;background:#d8d8d8;"></div>
<div style="left:1499.00px;top:915.05px;width:90.60px;height:1.60px;background:#f2f4f6;"></div>
<div style="left:1589.60px;top:915.05px;width:92.40px;height:1.60px;background:#d8d8d8;"></div>
<div style="left:1682.00px;top:915.05px;width:90.00px;height:1.60px;background:#f2f4f6;"></div>
<div style="left:1772.00px;top:915.05px;width:91.60px;height:1.60px;background:#d8d8d8;"></div>
<div style="left:774.00px;top:936.15px;width:57.00px;height:1.60px;background:#d8d8d8;"></div>
<div style="left:831.00px;top:936.15px;width:392.00px;height:1.60px;background:#f2f4f6;"></div>
<div style="left:1223.00px;top:936.15px;width:92.80px;height:1.60px;background:#d8d8d8;"></div>
<div style="left:1315.80px;top:936.15px;width:91.20px;height:1.60px;background:#f2f4f6;"></div>
<div style="left:1407.00px;top:936.15px;width:92.00px;height:1.60px;background:#d8d8d8;"></div>
<div style="left:1499.00px;top:936.15px;width:90.60px;height:1.60px;background:#f2f4f6;"></div>
<div style="left:1589.60px;top:936.15px;width:92.40px;height:1.60px;background:#d8d8d8;"></div>
<div style="left:1682.00px;top:936.15px;width:90.00px;height:1.60px;background:#f2f4f6;"></div>
<div style="left:1772.00px;top:936.15px;width:91.60px;height:1.60px;background:#d8d8d8;"></div>
<div style="left:774.00px;top:957.24px;width:57.00px;height:1.60px;background:#d8d8d8;"></div>
<div style="left:831.00px;top:957.24px;width:392.00px;height:1.60px;background:#f2f4f6;"></div>
<div style="left:1223.00px;top:957.24px;width:92.80px;height:1.60px;background:#d8d8d8;"></div>
<div style="left:1315.80px;top:957.24px;width:91.20px;height:1.60px;background:#f2f4f6;"></div>
<div style="left:1407.00px;top:957.24px;width:92.00px;height:1.60px;background:#d8d8d8;"></div>
<div style="left:1499.00px;top:957.24px;width:90.60px;height:1.60px;background:#f2f4f6;"></div>
<div style="left:1589.60px;top:957.24px;width:92.40px;height:1.60px;background:#d8d8d8;"></div>
<div style="left:1682.00px;top:957.24px;width:90.00px;height:1.60px;background:#f2f4f6;"></div>
<div style="left:1772.00px;top:957.24px;width:91.60px;height:1.60px;background:#d8d8d8;"></div>
<div style="left:774.00px;top:978.34px;width:57.00px;height:1.60px;background:#d8d8d8;"></div>
<div style="left:831.00px;top:978.34px;width:392.00px;height:1.60px;background:#f2f4f6;"></div>
<div style="left:1223.00px;top:978.34px;width:92.80px;height:1.60px;background:#d8d8d8;"></div>
<div style="left:1315.80px;top:978.34px;width:91.20px;height:1.60px;background:#f2f4f6;"></div>
<div style="left:1407.00px;top:978.34px;width:92.00px;height:1.60px;background:#d8d8d8;"></div>
<div style="left:1499.00px;top:978.34px;width:90.60px;height:1.60px;background:#f2f4f6;"></div>
<div style="left:1589.60px;top:978.34px;width:92.40px;height:1.60px;background:#d8d8d8;"></div>
<div style="left:1682.00px;top:978.34px;width:90.00px;height:1.60px;background:#f2f4f6;"></div>
<div style="left:1772.00px;top:978.34px;width:91.60px;height:1.60px;background:#d8d8d8;"></div>
<div style="left:774.00px;top:999.43px;width:57.00px;height:1.60px;background:#d8d8d8;"></div>
<div style="left:831.00px;top:999.43px;width:392.00px;height:1.60px;background:#f2f4f6;"></div>
<div style="left:1223.00px;top:999.43px;width:92.80px;height:1.60px;background:#d8d8d8;"></div>
<div style="left:1315.80px;top:999.43px;width:91.20px;height:1.60px;background:#f2f4f6;"></div>
<div style="left:1407.00px;top:999.43px;width:92.00px;height:1.60px;background:#d8d8d8;"></div>
<div style="left:1499.00px;top:999.43px;width:90.60px;height:1.60px;background:#f2f4f6;"></div>
<div style="left:1589.60px;top:999.43px;width:92.40px;height:1.60px;background:#d8d8d8;"></div>
<div style="left:1682.00px;top:999.43px;width:90.00px;height:1.60px;background:#f2f4f6;"></div>
<div style="left:1772.00px;top:999.43px;width:91.60px;height:1.60px;background:#d8d8d8;"></div>
<div style="left:774.00px;top:1020.52px;width:57.00px;height:1.60px;background:#d8d8d8;"></div>
<div style="left:831.00px;top:1020.52px;width:392.00px;height:1.60px;background:#f2f4f6;"></div>
<div style="left:1223.00px;top:1020.52px;width:92.80px;height:1.60px;background:#d8d8d8;"></div>
<div style="left:1315.80px;top:1020.52px;width:91.20px;height:1.60px;background:#f2f4f6;"></div>
<div style="left:1407.00px;top:1020.52px;width:92.00px;height:1.60px;background:#d8d8d8;"></div>
<div style="left:1499.00px;top:1020.52px;width:90.60px;height:1.60px;background:#f2f4f6;"></div>
<div style="left:1589.60px;top:1020.52px;width:92.40px;height:1.60px;background:#d8d8d8;"></div>
<div style="left:1682.00px;top:1020.52px;width:90.00px;height:1.60px;background:#f2f4f6;"></div>
<div style="left:1772.00px;top:1020.52px;width:91.60px;height:1.60px;background:#d8d8d8;"></div>
<div style="left:774.00px;top:1041.62px;width:57.00px;height:1.60px;background:#d8d8d8;"></div>
<div style="left:831.00px;top:1041.62px;width:392.00px;height:1.60px;background:#f2f4f6;"></div>
<div style="left:1223.00px;top:1041.62px;width:92.80px;height:1.60px;background:#d8d8d8;"></div>
<div style="left:1315.80px;top:1041.62px;width:91.20px;height:1.60px;background:#f2f4f6;"></div>
<div style="left:1407.00px;top:1041.62px;width:92.00px;height:1.60px;background:#d8d8d8;"></div>
<div style="left:1499.00px;top:1041.62px;width:90.60px;height:1.60px;background:#f2f4f6;"></div>
<div style="left:1589.60px;top:1041.62px;width:92.40px;height:1.60px;background:#d8d8d8;"></div>
<div style="left:1682.00px;top:1041.62px;width:90.00px;height:1.60px;background:#f2f4f6;"></div>
<div style="left:1772.00px;top:1041.62px;width:91.60px;height:1.60px;background:#d8d8d8;"></div>
<div style="left:774.00px;top:1062.71px;width:57.00px;height:1.60px;background:#d8d8d8;"></div>
<div style="left:831.00px;top:1062.71px;width:392.00px;height:1.60px;background:#f2f4f6;"></div>
<div style="left:1223.00px;top:1062.71px;width:92.80px;height:1.60px;background:#d8d8d8;"></div>
<div style="left:1315.80px;top:1062.71px;width:91.20px;height:1.60px;background:#f2f4f6;"></div>
<div style="left:1407.00px;top:1062.71px;width:92.00px;height:1.60px;background:#d8d8d8;"></div>
<div style="left:1499.00px;top:1062.71px;width:90.60px;height:1.60px;background:#f2f4f6;"></div>
<div style="left:1589.60px;top:1062.71px;width:92.40px;height:1.60px;background:#d8d8d8;"></div>
<div style="left:1682.00px;top:1062.71px;width:90.00px;height:1.60px;background:#f2f4f6;"></div>
<div style="left:1772.00px;top:1062.71px;width:91.60px;height:1.60px;background:#d8d8d8;"></div>
<div style="left:774.00px;top:1083.81px;width:57.00px;height:1.60px;background:#d8d8d8;"></div>
<div style="left:831.00px;top:1083.81px;width:392.00px;height:1.60px;background:#f2f4f6;"></div>
<div style="left:1223.00px;top:1083.81px;width:92.80px;height:1.60px;background:#d8d8d8;"></div>
<div style="left:1315.80px;top:1083.81px;width:91.20px;height:1.60px;background:#f2f4f6;"></div>
<div style="left:1407.00px;top:1083.81px;width:92.00px;height:1.60px;background:#d8d8d8;"></div>
<div style="left:1499.00px;top:1083.81px;width:90.60px;height:1.60px;background:#f2f4f6;"></div>
<div style="left:1589.60px;top:1083.81px;width:92.40px;height:1.60px;background:#d8d8d8;"></div>
<div style="left:1682.00px;top:1083.81px;width:90.00px;height:1.60px;background:#f2f4f6;"></div>
<div style="left:1772.00px;top:1083.81px;width:91.60px;height:1.60px;background:#d8d8d8;"></div>
<div style="left:774.00px;top:1104.90px;width:57.00px;height:1.60px;background:#d8d8d8;"></div>
<div style="left:831.00px;top:1104.90px;width:392.00px;height:1.60px;background:#f2f4f6;"></div>
<div style="left:1223.00px;top:1104.90px;width:92.80px;height:1.60px;background:#d8d8d8;"></div>
<div style="left:1315.80px;top:1104.90px;width:91.20px;height:1.60px;background:#f2f4f6;"></div>
<div style="left:1407.00px;top:1104.90px;width:92.00px;height:1.60px;background:#d8d8d8;"></div>
<div style="left:1499.00px;top:1104.90px;width:90.60px;height:1.60px;background:#f2f4f6;"></div>
<div style="left:1589.60px;top:1104.90px;width:92.40px;height:1.60px;background:#d8d8d8;"></div>
<div style="left:1682.00px;top:1104.90px;width:90.00px;height:1.60px;background:#f2f4f6;"></div>
<div style="left:1772.00px;top:1104.90px;width:91.60px;height:1.60px;background:#d8d8d8;"></div>
<div style="left:774.00px;top:1125.99px;width:57.00px;height:1.60px;background:#d8d8d8;"></div>
<div style="left:831.00px;top:1125.99px;width:392.00px;height:1.60px;background:#f2f4f6;"></div>
<div style="left:1223.00px;top:1125.99px;width:92.80px;height:1.60px;background:#d8d8d8;"></div>
<div style="left:1315.80px;top:1125.99px;width:91.20px;height:1.60px;background:#f2f4f6;"></div>
<div style="left:1407.00px;top:1125.99px;width:92.00px;height:1.60px;background:#d8d8d8;"></div>
<div style="left:1499.00px;top:1125.99px;width:90.60px;height:1.60px;background:#f2f4f6;"></div>
<div style="left:1589.60px;top:1125.99px;width:92.40px;height:1.60px;background:#d8d8d8;"></div>
<div style="left:1682.00px;top:1125.99px;width:90.00px;height:1.60px;background:#f2f4f6;"></div>
<div style="left:1772.00px;top:1125.99px;width:91.60px;height:1.60px;background:#d8d8d8;"></div>
<div style="left:774.00px;top:1147.09px;width:57.00px;height:1.60px;background:#d8d8d8;"></div>
<div style="left:831.00px;top:1147.09px;width:392.00px;height:1.60px;background:#f2f4f6;"></div>
<div style="left:1223.00px;top:1147.09px;width:92.80px;height:1.60px;background:#d8d8d8;"></div>
<div style="left:1315.80px;top:1147.09px;width:91.20px;height:1.60px;background:#f2f4f6;"></div>
<div style="left:1407.00px;top:1147.09px;width:92.00px;height:1.60px;background:#d8d8d8;"></div>
<div style="left:1499.00px;top:1147.09px;width:90.60px;height:1.60px;background:#f2f4f6;"></div>
<div style="left:1589.60px;top:1147.09px;width:92.40px;height:1.60px;background:#d8d8d8;"></div>
<div style="left:1682.00px;top:1147.09px;width:90.00px;height:1.60px;background:#f2f4f6;"></div>
<div style="left:1772.00px;top:1147.09px;width:91.60px;height:1.60px;background:#d8d8d8;"></div>
<div style="left:774.00px;top:1168.18px;width:57.00px;height:1.60px;background:#d8d8d8;"></div>
<div style="left:831.00px;top:1168.18px;width:392.00px;height:1.60px;background:#f2f4f6;"></div>
<div style="left:1223.00px;top:1168.18px;width:92.80px;height:1.60px;background:#d8d8d8;"></div>
<div style="left:1315.80px;top:1168.18px;width:91.20px;height:1.60px;background:#f2f4f6;"></div>
<div style="left:1407.00px;top:1168.18px;width:92.00px;height:1.60px;background:#d8d8d8;"></div>
<div style="left:1499.00px;top:1168.18px;width:90.60px;height:1.60px;background:#f2f4f6;"></div>
<div style="left:1589.60px;top:1168.18px;width:92.40px;height:1.60px;background:#d8d8d8;"></div>
<div style="left:1682.00px;top:1168.18px;width:90.00px;height:1.60px;background:#f2f4f6;"></div>
<div style="left:1772.00px;top:1168.18px;width:91.60px;height:1.60px;background:#d8d8d8;"></div>
<div style="left:774.00px;top:1189.28px;width:57.00px;height:1.60px;background:#d8d8d8;"></div>
<div style="left:831.00px;top:1189.28px;width:392.00px;height:1.60px;background:#f2f4f6;"></div>
<div style="left:1223.00px;top:1189.28px;width:92.80px;height:1.60px;background:#d8d8d8;"></div>
<div style="left:1315.80px;top:1189.28px;width:91.20px;height:1.60px;background:#f2f4f6;"></div>
<div style="left:1407.00px;top:1189.28px;width:92.00px;height:1.60px;background:#d8d8d8;"></div>
<div style="left:1499.00px;top:1189.28px;width:90.60px;height:1.60px;background:#f2f4f6;"></div>
<div style="left:1589.60px;top:1189.28px;width:92.40px;height:1.60px;background:#d8d8d8;"></div>
<div style="left:1682.00px;top:1189.28px;width:90.00px;height:1.60px;background:#f2f4f6;"></div>
<div style="left:1772.00px;top:1189.28px;width:91.60px;height:1.60px;background:#d8d8d8;"></div>
<div style="left:774.00px;top:1210.37px;width:57.00px;height:1.60px;background:#d8d8d8;"></div>
<div style="left:831.00px;top:1210.37px;width:392.00px;height:1.60px;background:#f2f4f6;"></div>
<div style="left:1223.00px;top:1210.37px;width:92.80px;height:1.60px;background:#d8d8d8;"></div>
<div style="left:1315.80px;top:1210.37px;width:91.20px;height:1.60px;background:#f2f4f6;"></div>
<div style="left:1407.00px;top:1210.37px;width:92.00px;height:1.60px;background:#d8d8d8;"></div>
<div style="left:1499.00px;top:1210.37px;width:90.60px;height:1.60px;background:#f2f4f6;"></div>
<div style="left:1589.60px;top:1210.37px;width:92.40px;height:1.60px;background:#d8d8d8;"></div>
<div style="left:1682.00px;top:1210.37px;width:90.00px;height:1.60px;background:#f2f4f6;"></div>
<div style="left:1772.00px;top:1210.37px;width:91.60px;height:1.60px;background:#d8d8d8;"></div>
<div style="left:774.00px;top:1231.46px;width:57.00px;height:1.60px;background:#d8d8d8;"></div>
<div style="left:831.00px;top:1231.46px;width:392.00px;height:1.60px;background:#f2f4f6;"></div>
<div style="left:1223.00px;top:1231.46px;width:92.80px;height:1.60px;background:#d8d8d8;"></div>
<div style="left:1315.80px;top:1231.46px;width:91.20px;height:1.60px;background:#f2f4f6;"></div>
<div style="left:1407.00px;top:1231.46px;width:92.00px;height:1.60px;background:#d8d8d8;"></div>
<div style="left:1499.00px;top:1231.46px;width:90.60px;height:1.60px;background:#f2f4f6;"></div>
<div style="left:1589.60px;top:1231.46px;width:92.40px;height:1.60px;background:#d8d8d8;"></div>
<div style="left:1682.00px;top:1231.46px;width:90.00px;height:1.60px;background:#f2f4f6;"></div>
<div style="left:1772.00px;top:1231.46px;width:91.60px;height:1.60px;background:#d8d8d8;"></div>
<div style="left:774.00px;top:1252.56px;width:57.00px;height:1.60px;background:#d8d8d8;"></div>
<div style="left:831.00px;top:1252.56px;width:392.00px;height:1.60px;background:#f2f4f6;"></div>
<div style="left:1223.00px;top:1252.56px;width:92.80px;height:1.60px;background:#d8d8d8;"></div>
<div style="left:1315.80px;top:1252.56px;width:91.20px;height:1.60px;background:#f2f4f6;"></div>
<div style="left:1407.00px;top:1252.56px;width:92.00px;height:1.60px;background:#d8d8d8;"></div>
<div style="left:1499.00px;top:1252.56px;width:90.60px;height:1.60px;background:#f2f4f6;"></div>
<div style="left:1589.60px;top:1252.56px;width:92.40px;height:1.60px;background:#d8d8d8;"></div>
<div style="left:1682.00px;top:1252.56px;width:90.00px;height:1.60px;background:#f2f4f6;"></div>
<div style="left:1772.00px;top:1252.56px;width:91.60px;height:1.60px;background:#d8d8d8;"></div>
<div style="left:774.00px;top:1273.65px;width:57.00px;height:1.60px;background:#d8d8d8;"></div>
<div style="left:831.00px;top:1273.65px;width:392.00px;height:1.60px;background:#f2f4f6;"></div>
<div style="left:1223.00px;top:1273.65px;width:92.80px;height:1.60px;background:#d8d8d8;"></div>
<div style="left:1315.80px;top:1273.65px;width:91.20px;height:1.60px;background:#f2f4f6;"></div>
<div style="left:1407.00px;top:1273.65px;width:92.00px;height:1.60px;background:#d8d8d8;"></div>
<div style="left:1499.00px;top:1273.65px;width:90.60px;height:1.60px;background:#f2f4f6;"></div>
<div style="left:1589.60px;top:1273.65px;width:92.40px;height:1.60px;background:#d8d8d8;"></div>
<div style="left:1682.00px;top:1273.65px;width:90.00px;height:1.60px;background:#f2f4f6;"></div>
<div style="left:1772.00px;top:1273.65px;width:91.60px;height:1.60px;background:#d8d8d8;"></div>
<div style="left:774.00px;top:1294.75px;width:57.00px;height:1.60px;background:#d8d8d8;"></div>
<div style="left:831.00px;top:1294.75px;width:392.00px;height:1.60px;background:#f2f4f6;"></div>
<div style="left:1223.00px;top:1294.75px;width:92.80px;height:1.60px;background:#d8d8d8;"></div>
<div style="left:1315.80px;top:1294.75px;width:91.20px;height:1.60px;background:#f2f4f6;"></div>
<div style="left:1407.00px;top:1294.75px;width:92.00px;height:1.60px;background:#d8d8d8;"></div>
<div style="left:1499.00px;top:1294.75px;width:90.60px;height:1.60px;background:#f2f4f6;"></div>
<div style="left:1589.60px;top:1294.75px;width:92.40px;height:1.60px;background:#d8d8d8;"></div>
<div style="left:1682.00px;top:1294.75px;width:90.00px;height:1.60px;background:#f2f4f6;"></div>
<div style="left:1772.00px;top:1294.75px;width:91.60px;height:1.60px;background:#d8d8d8;"></div>
<div style="left:774.00px;top:1315.84px;width:57.00px;height:1.60px;background:#d8d8d8;"></div>
<div style="left:831.00px;top:1315.84px;width:392.00px;height:1.60px;background:#f2f4f6;"></div>
<div style="left:1223.00px;top:1315.84px;width:92.80px;height:1.60px;background:#d8d8d8;"></div>
<div style="left:1315.80px;top:1315.84px;width:91.20px;height:1.60px;background:#f2f4f6;"></div>
<div style="left:1407.00px;top:1315.84px;width:92.00px;height:1.60px;background:#d8d8d8;"></div>
<div style="left:1499.00px;top:1315.84px;width:90.60px;height:1.60px;background:#f2f4f6;"></div>
<div style="left:1589.60px;top:1315.84px;width:92.40px;height:1.60px;background:#d8d8d8;"></div>
<div style="left:1682.00px;top:1315.84px;width:90.00px;height:1.60px;background:#f2f4f6;"></div>
<div style="left:1772.00px;top:1315.84px;width:91.60px;height:1.60px;background:#d8d8d8;"></div>
<div style="left:774.00px;top:1336.93px;width:57.00px;height:1.60px;background:#d8d8d8;"></div>
<div style="left:831.00px;top:1336.93px;width:392.00px;height:1.60px;background:#f2f4f6;"></div>
<div style="left:1223.00px;top:1336.93px;width:92.80px;height:1.60px;background:#d8d8d8;"></div>
<div style="left:1315.80px;top:1336.93px;width:91.20px;height:1.60px;background:#f2f4f6;"></div>
<div style="left:1407.00px;top:1336.93px;width:92.00px;height:1.60px;background:#d8d8d8;"></div>
<div style="left:1499.00px;top:1336.93px;width:90.60px;height:1.60px;background:#f2f4f6;"></div>
<div style="left:1589.60px;top:1336.93px;width:92.40px;height:1.60px;background:#d8d8d8;"></div>
<div style="left:1682.00px;top:1336.93px;width:90.00px;height:1.60px;background:#f2f4f6;"></div>
<div style="left:1772.00px;top:1336.93px;width:91.60px;height:1.60px;background:#d8d8d8;"></div>
<div style="left:774.00px;top:1358.03px;width:57.00px;height:1.60px;background:#d8d8d8;"></div>
<div style="left:831.00px;top:1358.03px;width:392.00px;height:1.60px;background:#f2f4f6;"></div>
<div style="left:1223.00px;top:1358.03px;width:92.80px;height:1.60px;background:#d8d8d8;"></div>
<div style="left:1315.80px;top:1358.03px;width:91.20px;height:1.60px;background:#f2f4f6;"></div>
<div style="left:1407.00px;top:1358.03px;width:92.00px;height:1.60px;background:#d8d8d8;"></div>
<div style="left:1499.00px;top:1358.03px;width:90.60px;height:1.60px;background:#f2f4f6;"></div>
<div style="left:1589.60px;top:1358.03px;width:92.40px;height:1.60px;background:#d8d8d8;"></div>
<div style="left:1682.00px;top:1358.03px;width:90.00px;height:1.60px;background:#f2f4f6;"></div>
<div style="left:1772.00px;top:1358.03px;width:91.60px;height:1.60px;background:#d8d8d8;"></div>
<div style="left:774.00px;top:1379.12px;width:57.00px;height:1.60px;background:#d8d8d8;"></div>
<div style="left:831.00px;top:1379.12px;width:392.00px;height:1.60px;background:#f2f4f6;"></div>
<div style="left:1223.00px;top:1379.12px;width:92.80px;height:1.60px;background:#d8d8d8;"></div>
<div style="left:1315.80px;top:1379.12px;width:91.20px;height:1.60px;background:#f2f4f6;"></div>
<div style="left:1407.00px;top:1379.12px;width:92.00px;height:1.60px;background:#d8d8d8;"></div>
<div style="left:1499.00px;top:1379.12px;width:90.60px;height:1.60px;background:#f2f4f6;"></div>
<div style="left:1589.60px;top:1379.12px;width:92.40px;height:1.60px;background:#d8d8d8;"></div>
<div style="left:1682.00px;top:1379.12px;width:90.00px;height:1.60px;background:#f2f4f6;"></div>
<div style="left:1772.00px;top:1379.12px;width:91.60px;height:1.60px;background:#d8d8d8;"></div>
<div style="left:774.00px;top:1400.22px;width:57.00px;height:1.60px;background:#d8d8d8;"></div>
<div style="left:831.00px;top:1400.22px;width:392.00px;height:1.60px;background:#f2f4f6;"></div>
<div style="left:1223.00px;top:1400.22px;width:92.80px;height:1.60px;background:#d8d8d8;"></div>
<div style="left:1315.80px;top:1400.22px;width:91.20px;height:1.60px;background:#f2f4f6;"></div>
<div style="left:1407.00px;top:1400.22px;width:92.00px;height:1.60px;background:#d8d8d8;"></div>
<div style="left:1499.00px;top:1400.22px;width:90.60px;height:1.60px;background:#f2f4f6;"></div>
<div style="left:1589.60px;top:1400.22px;width:92.40px;height:1.60px;background:#d8d8d8;"></div>
<div style="left:1682.00px;top:1400.22px;width:90.00px;height:1.60px;background:#f2f4f6;"></div>
<div style="left:1772.00px;top:1400.22px;width:91.60px;height:1.60px;background:#d8d8d8;"></div>
<div style="left:774.00px;top:1421.31px;width:57.00px;height:1.60px;background:#d8d8d8;"></div>
<div style="left:831.00px;top:1421.31px;width:392.00px;height:1.60px;background:#f2f4f6;"></div>
<div style="left:1223.00px;top:1421.31px;width:92.80px;height:1.60px;background:#d8d8d8;"></div>
<div style="left:1315.80px;top:1421.31px;width:91.20px;height:1.60px;background:#f2f4f6;"></div>
<div style="left:1407.00px;top:1421.31px;width:92.00px;height:1.60px;background:#d8d8d8;"></div>
<div style="left:1499.00px;top:1421.31px;width:90.60px;height:1.60px;background:#f2f4f6;"></div>
<div style="left:1589.60px;top:1421.31px;width:92.40px;height:1.60px;background:#d8d8d8;"></div>
<div style="left:1682.00px;top:1421.31px;width:90.00px;height:1.60px;background:#f2f4f6;"></div>
<div style="left:1772.00px;top:1421.31px;width:91.60px;height:1.60px;background:#d8d8d8;"></div>
<div style="left:774.00px;top:1442.40px;width:57.00px;height:1.60px;background:#d8d8d8;"></div>
<div style="left:831.00px;top:1442.40px;width:392.00px;height:1.60px;background:#f2f4f6;"></div>
<div style="left:1223.00px;top:1442.40px;width:92.80px;height:1.60px;background:#d8d8d8;"></div>
<div style="left:1315.80px;top:1442.40px;width:91.20px;height:1.60px;background:#f2f4f6;"></div>
<div style="left:1407.00px;top:1442.40px;width:92.00px;height:1.60px;background:#d8d8d8;"></div>
<div style="left:1499.00px;top:1442.40px;width:90.60px;height:1.60px;background:#f2f4f6;"></div>
<div style="left:1589.60px;top:1442.40px;width:92.40px;height:1.60px;background:#d8d8d8;"></div>
<div style="left:1682.00px;top:1442.40px;width:90.00px;height:1.60px;background:#f2f4f6;"></div>
<div style="left:1772.00px;top:1442.40px;width:91.60px;height:1.60px;background:#d8d8d8;"></div>
<div class="t" style="left:834.00px;top:50.60px;height:21.09px;line-height:21.09px;font-size:12.90px;color:#1414f8;font-weight:bold;transform:scaleX(0.74);transform-origin:0 50%;-webkit-text-stroke:0.15px #1414f8;">Gesamtkosten nach DIN 276-08</div>
<div class="t" style="left:-289.40px;width:1600px;text-align:right;top:50.60px;height:21.09px;line-height:21.09px;font-size:12.90px;color:#1414f8;font-weight:normal;transform:scaleX(0.73);transform-origin:100% 50%;">3.144.722,41</div>
<div class="t" style="left:-198.20px;width:1600px;text-align:right;top:50.60px;height:21.09px;line-height:21.09px;font-size:12.90px;color:#1414f8;font-weight:normal;transform:scaleX(0.73);transform-origin:100% 50%;">2.302.915,57</div>
<div class="t" style="left:-106.20px;width:1600px;text-align:right;top:50.60px;height:21.09px;line-height:21.09px;font-size:12.90px;color:#1414f8;font-weight:normal;transform:scaleX(0.73);transform-origin:100% 50%;">1.401.887,99</div>
<div class="t" style="left:-15.60px;width:1600px;text-align:right;top:50.60px;height:21.09px;line-height:21.09px;font-size:12.90px;color:#1414f8;font-weight:normal;transform:scaleX(0.73);transform-origin:100% 50%;">700.347,48</div>
<div class="t" style="left:76.80px;width:1600px;text-align:right;top:50.60px;height:21.09px;line-height:21.09px;font-size:12.90px;color:#1414f8;font-weight:normal;transform:scaleX(0.73);transform-origin:100% 50%;">144.305,64</div>
<div class="t" style="left:166.80px;width:1600px;text-align:right;top:50.60px;height:21.09px;line-height:21.09px;font-size:12.90px;color:#0c9020;font-weight:normal;transform:scaleX(0.73);transform-origin:100% 50%;">-1.602.568,09</div>
<div class="t" style="left:258.40px;width:1600px;text-align:right;top:50.60px;height:21.09px;line-height:21.09px;font-size:12.90px;color:#0c9020;font-weight:normal;transform:scaleX(0.73);transform-origin:100% 50%;">-69,59 %</div>
<div class="t" style="left:777.20px;top:71.69px;height:21.09px;line-height:21.09px;font-size:12.90px;color:#1414f8;font-weight:normal;transform:scaleX(0.74);transform-origin:0 50%;">100</div>
<div class="t" style="left:834.00px;top:71.69px;height:21.09px;line-height:21.09px;font-size:12.90px;color:#1414f8;font-weight:normal;transform:scaleX(0.74);transform-origin:0 50%;">GRUNDSTÜCK</div>
<div class="t" style="left:-289.40px;width:1600px;text-align:right;top:71.69px;height:21.09px;line-height:21.09px;font-size:12.90px;color:#1414f8;font-weight:normal;transform:scaleX(0.73);transform-origin:100% 50%;">25.000,00</div>
<div class="t" style="left:-198.20px;width:1600px;text-align:right;top:71.69px;height:21.09px;line-height:21.09px;font-size:12.90px;color:#1414f8;font-weight:normal;transform:scaleX(0.73);transform-origin:100% 50%;">26.000,00</div>
<div class="t" style="left:166.80px;width:1600px;text-align:right;top:71.69px;height:21.09px;line-height:21.09px;font-size:12.90px;color:#0c9020;font-weight:normal;transform:scaleX(0.73);transform-origin:100% 50%;">-26.000,00</div>
<div class="t" style="left:258.40px;width:1600px;text-align:right;top:71.69px;height:21.09px;line-height:21.09px;font-size:12.90px;color:#0c9020;font-weight:normal;transform:scaleX(0.73);transform-origin:100% 50%;">-100,00 %</div>
<div class="t" style="left:777.20px;top:92.79px;height:21.09px;line-height:21.09px;font-size:12.90px;color:#000010;font-weight:normal;transform:scaleX(0.74);transform-origin:0 50%;">110</div>
<div class="t" style="left:834.00px;top:92.79px;height:21.09px;line-height:21.09px;font-size:12.90px;color:#000010;font-weight:normal;transform:scaleX(0.74);transform-origin:0 50%;">GRUNDSTÜCKSWERT</div>
<div class="t" style="left:777.20px;top:113.88px;height:21.09px;line-height:21.09px;font-size:12.90px;color:#1414f8;font-weight:normal;transform:scaleX(0.74);transform-origin:0 50%;">120</div>
<div class="t" style="left:834.00px;top:113.88px;height:21.09px;line-height:21.09px;font-size:12.90px;color:#1414f8;font-weight:normal;transform:scaleX(0.74);transform-origin:0 50%;">GRUNDSTÜCKSNEBENKOSTEN</div>
<div class="t" style="left:-289.40px;width:1600px;text-align:right;top:113.88px;height:21.09px;line-height:21.09px;font-size:12.90px;color:#1414f8;font-weight:normal;transform:scaleX(0.73);transform-origin:100% 50%;">25.000,00</div>
<div class="t" style="left:777.20px;top:134.98px;height:21.09px;line-height:21.09px;font-size:12.90px;color:#000010;font-weight:normal;transform:scaleX(0.74);transform-origin:0 50%;">121</div>
<div class="t" style="left:834.00px;top:134.98px;height:21.09px;line-height:21.09px;font-size:12.90px;color:#000010;font-weight:normal;transform:scaleX(0.74);transform-origin:0 50%;">Vermessungsgebühren</div>
<div class="t" style="left:777.20px;top:156.07px;height:21.09px;line-height:21.09px;font-size:12.90px;color:#000010;font-weight:normal;transform:scaleX(0.74);transform-origin:0 50%;">122</div>
<div class="t" style="left:834.00px;top:156.07px;height:21.09px;line-height:21.09px;font-size:12.90px;color:#000010;font-weight:normal;transform:scaleX(0.74);transform-origin:0 50%;">Gerichtsgebühren</div>
<div class="t" style="left:777.20px;top:177.16px;height:21.09px;line-height:21.09px;font-size:12.90px;color:#000010;font-weight:normal;transform:scaleX(0.74);transform-origin:0 50%;">123</div>
<div class="t" style="left:834.00px;top:177.16px;height:21.09px;line-height:21.09px;font-size:12.90px;color:#000010;font-weight:normal;transform:scaleX(0.74);transform-origin:0 50%;">Notariatsgebühren</div>
<div class="t" style="left:777.20px;top:198.26px;height:21.09px;line-height:21.09px;font-size:12.90px;color:#000010;font-weight:normal;transform:scaleX(0.74);transform-origin:0 50%;">124</div>
<div class="t" style="left:834.00px;top:198.26px;height:21.09px;line-height:21.09px;font-size:12.90px;color:#000010;font-weight:normal;transform:scaleX(0.74);transform-origin:0 50%;">Maklerprovisionen</div>
<div class="t" style="left:777.20px;top:219.35px;height:21.09px;line-height:21.09px;font-size:12.90px;color:#000010;font-weight:normal;transform:scaleX(0.74);transform-origin:0 50%;">125</div>
<div class="t" style="left:834.00px;top:219.35px;height:21.09px;line-height:21.09px;font-size:12.90px;color:#000010;font-weight:normal;transform:scaleX(0.74);transform-origin:0 50%;">Grunderwerbsteuer</div>
<div class="t" style="left:-289.40px;width:1600px;text-align:right;top:219.35px;height:21.09px;line-height:21.09px;font-size:12.90px;color:#000010;font-weight:normal;transform:scaleX(0.73);transform-origin:100% 50%;">25.000,00</div>
<div class="t" style="left:777.20px;top:240.45px;height:21.09px;line-height:21.09px;font-size:12.90px;color:#000010;font-weight:normal;transform:scaleX(0.74);transform-origin:0 50%;">126</div>
<div class="t" style="left:834.00px;top:240.45px;height:21.09px;line-height:21.09px;font-size:12.90px;color:#000010;font-weight:normal;transform:scaleX(0.74);transform-origin:0 50%;">Wertermittlungen, Untersuchungen</div>
<div class="t" style="left:777.20px;top:261.54px;height:21.09px;line-height:21.09px;font-size:12.90px;color:#000010;font-weight:normal;transform:scaleX(0.74);transform-origin:0 50%;">127</div>
<div class="t" style="left:834.00px;top:261.54px;height:21.09px;line-height:21.09px;font-size:12.90px;color:#000010;font-weight:normal;transform:scaleX(0.74);transform-origin:0 50%;">Genehmigungsgebühren</div>
<div class="t" style="left:777.20px;top:282.63px;height:21.09px;line-height:21.09px;font-size:12.90px;color:#000010;font-weight:normal;transform:scaleX(0.74);transform-origin:0 50%;">128</div>
<div class="t" style="left:834.00px;top:282.63px;height:21.09px;line-height:21.09px;font-size:12.90px;color:#000010;font-weight:normal;transform:scaleX(0.74);transform-origin:0 50%;">Bodenordnung, Grenzregulierung</div>
<div class="t" style="left:777.20px;top:303.73px;height:21.09px;line-height:21.09px;font-size:12.90px;color:#000010;font-weight:normal;transform:scaleX(0.74);transform-origin:0 50%;">129</div>
<div class="t" style="left:834.00px;top:303.73px;height:21.09px;line-height:21.09px;font-size:12.90px;color:#000010;font-weight:normal;transform:scaleX(0.74);transform-origin:0 50%;">Grundstücksnebenkosten, sonstiges</div>
<div class="t" style="left:777.20px;top:324.82px;height:21.09px;line-height:21.09px;font-size:12.90px;color:#1414f8;font-weight:normal;transform:scaleX(0.74);transform-origin:0 50%;">130</div>
<div class="t" style="left:834.00px;top:324.82px;height:21.09px;line-height:21.09px;font-size:12.90px;color:#1414f8;font-weight:normal;transform:scaleX(0.74);transform-origin:0 50%;">FREIMACHEN</div>
<div class="t" style="left:777.20px;top:345.92px;height:21.09px;line-height:21.09px;font-size:12.90px;color:#000010;font-weight:normal;transform:scaleX(0.74);transform-origin:0 50%;">131</div>
<div class="t" style="left:834.00px;top:345.92px;height:21.09px;line-height:21.09px;font-size:12.90px;color:#000010;font-weight:normal;transform:scaleX(0.74);transform-origin:0 50%;">Abfindungen</div>
<div class="t" style="left:777.20px;top:367.01px;height:21.09px;line-height:21.09px;font-size:12.90px;color:#000010;font-weight:normal;transform:scaleX(0.74);transform-origin:0 50%;">132</div>
<div class="t" style="left:834.00px;top:367.01px;height:21.09px;line-height:21.09px;font-size:12.90px;color:#000010;font-weight:normal;transform:scaleX(0.74);transform-origin:0 50%;">Ablösung dinglicher Rechte</div>
<div class="t" style="left:777.20px;top:388.10px;height:21.09px;line-height:21.09px;font-size:12.90px;color:#000010;font-weight:normal;transform:scaleX(0.74);transform-origin:0 50%;">139</div>
<div class="t" style="left:834.00px;top:388.10px;height:21.09px;line-height:21.09px;font-size:12.90px;color:#000010;font-weight:normal;transform:scaleX(0.74);transform-origin:0 50%;">Freimachen, sonstiges</div>
<div class="t" style="left:777.20px;top:409.20px;height:21.09px;line-height:21.09px;font-size:12.90px;color:#1414f8;font-weight:bold;transform:scaleX(0.74);transform-origin:0 50%;-webkit-text-stroke:0.15px #1414f8;">200</div>
<div class="t" style="left:834.00px;top:409.20px;height:21.09px;line-height:21.09px;font-size:12.90px;color:#1414f8;font-weight:bold;transform:scaleX(0.74);transform-origin:0 50%;-webkit-text-stroke:0.15px #1414f8;">HERRICHTEN UND ERSCHLIESSEN</div>
<div class="t" style="left:-289.40px;width:1600px;text-align:right;top:409.20px;height:21.09px;line-height:21.09px;font-size:12.90px;color:#1414f8;font-weight:normal;transform:scaleX(0.73);transform-origin:100% 50%;">123.582,45</div>
<div class="t" style="left:-198.20px;width:1600px;text-align:right;top:409.20px;height:21.09px;line-height:21.09px;font-size:12.90px;color:#1414f8;font-weight:normal;transform:scaleX(0.73);transform-origin:100% 50%;">98.077,57</div>
<div class="t" style="left:-106.20px;width:1600px;text-align:right;top:409.20px;height:21.09px;line-height:21.09px;font-size:12.90px;color:#1414f8;font-weight:normal;transform:scaleX(0.73);transform-origin:100% 50%;">79.077,57</div>
<div class="t" style="left:-15.60px;width:1600px;text-align:right;top:409.20px;height:21.09px;line-height:21.09px;font-size:12.90px;color:#1414f8;font-weight:normal;transform:scaleX(0.73);transform-origin:100% 50%;">74.926,93</div>
<div class="t" style="left:76.80px;width:1600px;text-align:right;top:409.20px;height:21.09px;line-height:21.09px;font-size:12.90px;color:#1414f8;font-weight:normal;transform:scaleX(0.73);transform-origin:100% 50%;">19.193,30</div>
<div class="t" style="left:166.80px;width:1600px;text-align:right;top:409.20px;height:21.09px;line-height:21.09px;font-size:12.90px;color:#0c9020;font-weight:normal;transform:scaleX(0.73);transform-origin:100% 50%;">-23.148,54</div>
<div class="t" style="left:258.40px;width:1600px;text-align:right;top:409.20px;height:21.09px;line-height:21.09px;font-size:12.90px;color:#0c9020;font-weight:normal;transform:scaleX(0.73);transform-origin:100% 50%;">-23,60 %</div>
<div class="t" style="left:834.00px;top:430.29px;height:21.09px;line-height:21.09px;font-size:12.90px;color:#000010;font-weight:normal;transform:scaleX(0.74);transform-origin:0 50%;">LV001 1.1.2 Baustelle einrichten</div>
<div class="t" style="left:-289.40px;width:1600px;text-align:right;top:430.29px;height:21.09px;line-height:21.09px;font-size:12.90px;color:#000010;font-weight:normal;transform:scaleX(0.73);transform-origin:100% 50%;">20.000,00</div>
<div class="t" style="left:777.20px;top:451.39px;height:21.09px;line-height:21.09px;font-size:12.90px;color:#1414f8;font-weight:normal;transform:scaleX(0.74);transform-origin:0 50%;">210</div>
<div class="t" style="left:834.00px;top:451.39px;height:21.09px;line-height:21.09px;font-size:12.90px;color:#1414f8;font-weight:normal;transform:scaleX(0.74);transform-origin:0 50%;">HERRICHTEN</div>
<div class="t" style="left:-289.40px;width:1600px;text-align:right;top:451.39px;height:21.09px;line-height:21.09px;font-size:12.90px;color:#1414f8;font-weight:normal;transform:scaleX(0.73);transform-origin:100% 50%;">73.582,45</div>
<div class="t" style="left:-198.20px;width:1600px;text-align:right;top:451.39px;height:21.09px;line-height:21.09px;font-size:12.90px;color:#1414f8;font-weight:normal;transform:scaleX(0.73);transform-origin:100% 50%;">79.077,57</div>
<div class="t" style="left:-106.20px;width:1600px;text-align:right;top:451.39px;height:21.09px;line-height:21.09px;font-size:12.90px;color:#1414f8;font-weight:normal;transform:scaleX(0.73);transform-origin:100% 50%;">79.077,57</div>
<div class="t" style="left:-15.60px;width:1600px;text-align:right;top:451.39px;height:21.09px;line-height:21.09px;font-size:12.90px;color:#1414f8;font-weight:normal;transform:scaleX(0.73);transform-origin:100% 50%;">74.926,93</div>
<div class="t" style="left:76.80px;width:1600px;text-align:right;top:451.39px;height:21.09px;line-height:21.09px;font-size:12.90px;color:#1414f8;font-weight:normal;transform:scaleX(0.73);transform-origin:100% 50%;">19.193,30</div>
<div class="t" style="left:166.80px;width:1600px;text-align:right;top:451.39px;height:21.09px;line-height:21.09px;font-size:12.90px;color:#0c9020;font-weight:normal;transform:scaleX(0.73);transform-origin:100% 50%;">-4.148,54</div>
<div class="t" style="left:258.40px;width:1600px;text-align:right;top:451.39px;height:21.09px;line-height:21.09px;font-size:12.90px;color:#0c9020;font-weight:normal;transform:scaleX(0.73);transform-origin:100% 50%;">-5,25 %</div>
<div class="t" style="left:777.20px;top:472.48px;height:21.09px;line-height:21.09px;font-size:12.90px;color:#000010;font-weight:normal;transform:scaleX(0.74);transform-origin:0 50%;">211</div>
<div class="t" style="left:834.00px;top:472.48px;height:21.09px;line-height:21.09px;font-size:12.90px;color:#000010;font-weight:normal;transform:scaleX(0.74);transform-origin:0 50%;">Sicherungsmaßnahmen</div>
<div class="t" style="left:777.20px;top:493.57px;height:21.09px;line-height:21.09px;font-size:12.90px;color:#000010;font-weight:normal;transform:scaleX(0.74);transform-origin:0 50%;">212</div>
<div class="t" style="left:834.00px;top:493.57px;height:21.09px;line-height:21.09px;font-size:12.90px;color:#000010;font-weight:bold;transform:scaleX(0.74);transform-origin:0 50%;-webkit-text-stroke:0.35px #000010;">Abbruchmaßnahmen</div>
<div class="t" style="left:-289.40px;width:1600px;text-align:right;top:493.57px;height:21.09px;line-height:21.09px;font-size:12.90px;color:#000010;font-weight:normal;transform:scaleX(0.73);transform-origin:100% 50%;">45.749,45</div>
<div class="t" style="left:-198.20px;width:1600px;text-align:right;top:493.57px;height:21.09px;line-height:21.09px;font-size:12.90px;color:#000010;font-weight:normal;transform:scaleX(0.73);transform-origin:100% 50%;">48.798,00</div>
<div class="t" style="left:-106.20px;width:1600px;text-align:right;top:493.57px;height:21.09px;line-height:21.09px;font-size:12.90px;color:#000010;font-weight:normal;transform:scaleX(0.73);transform-origin:100% 50%;">48.798,00</div>
<div class="t" style="left:-15.60px;width:1600px;text-align:right;top:493.57px;height:21.09px;line-height:21.09px;font-size:12.90px;color:#000010;font-weight:normal;transform:scaleX(0.73);transform-origin:100% 50%;">45.938,61</div>
<div class="t" style="left:76.80px;width:1600px;text-align:right;top:493.57px;height:21.09px;line-height:21.09px;font-size:12.90px;color:#000010;font-weight:normal;transform:scaleX(0.73);transform-origin:100% 50%;">11.465,31</div>
<div class="t" style="left:166.80px;width:1600px;text-align:right;top:493.57px;height:21.09px;line-height:21.09px;font-size:12.90px;color:#0c9020;font-weight:normal;transform:scaleX(0.73);transform-origin:100% 50%;">-2.849,09</div>
<div class="t" style="left:258.40px;width:1600px;text-align:right;top:493.57px;height:21.09px;line-height:21.09px;font-size:12.90px;color:#0c9020;font-weight:normal;transform:scaleX(0.73);transform-origin:100% 50%;">-5,84 %</div>
<div class="t" style="left:834.00px;top:514.67px;height:21.09px;line-height:21.09px;font-size:12.90px;color:#000010;font-weight:normal;transform:scaleX(0.74);transform-origin:0 50%;">LV001 2.1.5 Hindernis aus Stahl aufnehmen und wird Eigentum AN</div>
<div class="t" style="left:-198.20px;width:1600px;text-align:right;top:514.67px;height:21.09px;line-height:21.09px;font-size:12.90px;color:#000010;font-weight:normal;transform:scaleX(0.73);transform-origin:100% 50%;">40.905,00</div>
<div class="t" style="left:-106.20px;width:1600px;text-align:right;top:514.67px;height:21.09px;line-height:21.09px;font-size:12.90px;color:#000010;font-weight:normal;transform:scaleX(0.73);transform-origin:100% 50%;">40.905,00</div>
<div class="t" style="left:834.00px;top:535.76px;height:21.09px;line-height:21.09px;font-size:12.90px;color:#000010;font-weight:normal;transform:scaleX(0.74);transform-origin:0 50%;">LV001 2.1.6 Mauerwerk im Boden abbrechen und seitlich lagern</div>
<div class="t" style="left:-198.20px;width:1600px;text-align:right;top:535.76px;height:21.09px;line-height:21.09px;font-size:12.90px;color:#000010;font-weight:normal;transform:scaleX(0.73);transform-origin:100% 50%;">927,20</div>
<div class="t" style="left:-106.20px;width:1600px;text-align:right;top:535.76px;height:21.09px;line-height:21.09px;font-size:12.90px;color:#000010;font-weight:normal;transform:scaleX(0.73);transform-origin:100% 50%;">927,20</div>
<div class="t" style="left:834.00px;top:556.86px;height:21.09px;line-height:21.09px;font-size:12.90px;color:#000010;font-weight:normal;transform:scaleX(0.74);transform-origin:0 50%;">LV001 2.1.7 Stahlbeton im Boden aufnehmen und wird Eigentum AN</div>
<div class="t" style="left:-198.20px;width:1600px;text-align:right;top:556.86px;height:21.09px;line-height:21.09px;font-size:12.90px;color:#000010;font-weight:normal;transform:scaleX(0.73);transform-origin:100% 50%;">6.545,10</div>
<div class="t" style="left:-106.20px;width:1600px;text-align:right;top:556.86px;height:21.09px;line-height:21.09px;font-size:12.90px;color:#000010;font-weight:normal;transform:scaleX(0.73);transform-origin:100% 50%;">6.545,10</div>
<div class="t" style="left:834.00px;top:577.95px;height:21.09px;line-height:21.09px;font-size:12.90px;color:#000010;font-weight:normal;transform:scaleX(0.74);transform-origin:0 50%;">LV001 2.1.8 Findling im Boden aufnehmen und seitlich lagern</div>
<div class="t" style="left:-198.20px;width:1600px;text-align:right;top:577.95px;height:21.09px;line-height:21.09px;font-size:12.90px;color:#000010;font-weight:normal;transform:scaleX(0.73);transform-origin:100% 50%;">410,70</div>
<div class="t" style="left:-106.20px;width:1600px;text-align:right;top:577.95px;height:21.09px;line-height:21.09px;font-size:12.90px;color:#000010;font-weight:normal;transform:scaleX(0.73);transform-origin:100% 50%;">410,70</div>
<div class="t" style="left:834.00px;top:599.04px;height:21.09px;line-height:21.09px;font-size:12.90px;color:#000010;font-weight:normal;transform:scaleX(0.74);transform-origin:0 50%;">LV010 2.1.5 Hindernis aus Stahl aufnehmen und wird Eigentum AN</div>
<div class="t" style="left:-289.40px;width:1600px;text-align:right;top:599.04px;height:21.09px;line-height:21.09px;font-size:12.90px;color:#000010;font-weight:normal;transform:scaleX(0.73);transform-origin:100% 50%;">38.350,00</div>
<div class="t" style="left:-198.20px;width:1600px;text-align:right;top:599.04px;height:21.09px;line-height:21.09px;font-size:12.90px;color:#000010;font-weight:normal;transform:scaleX(0.73);transform-origin:100% 50%;">0,00</div>
<div class="t" style="left:834.00px;top:620.14px;height:21.09px;line-height:21.09px;font-size:12.90px;color:#000010;font-weight:normal;transform:scaleX(0.74);transform-origin:0 50%;">LV010 2.1.6 Mauerwerk im Boden abbrechen und seitlich lagern</div>
<div class="t" style="left:-289.40px;width:1600px;text-align:right;top:620.14px;height:21.09px;line-height:21.09px;font-size:12.90px;color:#000010;font-weight:normal;transform:scaleX(0.73);transform-origin:100% 50%;">883,20</div>
<div class="t" style="left:-198.20px;width:1600px;text-align:right;top:620.14px;height:21.09px;line-height:21.09px;font-size:12.90px;color:#000010;font-weight:normal;transform:scaleX(0.73);transform-origin:100% 50%;">0,00</div>
<div class="t" style="left:834.00px;top:641.23px;height:21.09px;line-height:21.09px;font-size:12.90px;color:#000010;font-weight:normal;transform:scaleX(0.74);transform-origin:0 50%;">LV010 2.1.7 Stahlbeton im Boden aufnehmen und wird Eigentum AN</div>
<div class="t" style="left:-289.40px;width:1600px;text-align:right;top:641.23px;height:21.09px;line-height:21.09px;font-size:12.90px;color:#000010;font-weight:normal;transform:scaleX(0.73);transform-origin:100% 50%;">6.136,20</div>
<div class="t" style="left:-198.20px;width:1600px;text-align:right;top:641.23px;height:21.09px;line-height:21.09px;font-size:12.90px;color:#000010;font-weight:normal;transform:scaleX(0.73);transform-origin:100% 50%;">0,00</div>
<div class="t" style="left:834.00px;top:662.33px;height:21.09px;line-height:21.09px;font-size:12.90px;color:#000010;font-weight:normal;transform:scaleX(0.74);transform-origin:0 50%;">LV010 2.1.8 Findling im Boden aufnehmen und seitlich lagern</div>
<div class="t" style="left:-289.40px;width:1600px;text-align:right;top:662.33px;height:21.09px;line-height:21.09px;font-size:12.90px;color:#000010;font-weight:normal;transform:scaleX(0.73);transform-origin:100% 50%;">385,05</div>
<div class="t" style="left:-198.20px;width:1600px;text-align:right;top:662.33px;height:21.09px;line-height:21.09px;font-size:12.90px;color:#000010;font-weight:normal;transform:scaleX(0.73);transform-origin:100% 50%;">0,00</div>
<div class="t" style="left:834.00px;top:683.42px;height:21.09px;line-height:21.09px;font-size:12.90px;color:#000010;font-weight:normal;transform:scaleX(0.74);transform-origin:0 50%;">AT100096 2.1.5 Hindernis aus Stahl aufnehmen und wird Eigentum AN</div>
<div class="t" style="left:-15.60px;width:1600px;text-align:right;top:683.42px;height:21.09px;line-height:21.09px;font-size:12.90px;color:#000010;font-weight:normal;transform:scaleX(0.73);transform-origin:100% 50%;">38.893,30</div>
<div class="t" style="left:76.80px;width:1600px;text-align:right;top:683.42px;height:21.09px;line-height:21.09px;font-size:12.90px;color:#000010;font-weight:normal;transform:scaleX(0.73);transform-origin:100% 50%;">9.673,33</div>
<div class="t" style="left:834.00px;top:704.51px;height:21.09px;line-height:21.09px;font-size:12.90px;color:#000010;font-weight:normal;transform:scaleX(0.74);transform-origin:0 50%;">AT100096 2.1.6 Mauerwerk im Boden abbrechen und seitlich lagern</div>
<div class="t" style="left:-15.60px;width:1600px;text-align:right;top:704.51px;height:21.09px;line-height:21.09px;font-size:12.90px;color:#000010;font-weight:normal;transform:scaleX(0.73);transform-origin:100% 50%;">877,07</div>
<div class="t" style="left:76.80px;width:1600px;text-align:right;top:704.51px;height:21.09px;line-height:21.09px;font-size:12.90px;color:#000010;font-weight:normal;transform:scaleX(0.73);transform-origin:100% 50%;">219,27</div>
<div class="t" style="left:834.00px;top:725.61px;height:21.09px;line-height:21.09px;font-size:12.90px;color:#000010;font-weight:normal;transform:scaleX(0.74);transform-origin:0 50%;">AT100096 2.1.7 Stahlbeton im Boden aufnehmen und wird Eigentum AN</div>
<div class="t" style="left:-15.60px;width:1600px;text-align:right;top:725.61px;height:21.09px;line-height:21.09px;font-size:12.90px;color:#000010;font-weight:normal;transform:scaleX(0.73);transform-origin:100% 50%;">5.930,05</div>
<div class="t" style="left:76.80px;width:1600px;text-align:right;top:725.61px;height:21.09px;line-height:21.09px;font-size:12.90px;color:#000010;font-weight:normal;transform:scaleX(0.73);transform-origin:100% 50%;">1.455,01</div>
<div class="t" style="left:834.00px;top:746.70px;height:21.09px;line-height:21.09px;font-size:12.90px;color:#000010;font-weight:normal;transform:scaleX(0.74);transform-origin:0 50%;">AT100096 2.1.8 Findling im Boden aufnehmen und seitlich lagern</div>
<div class="t" style="left:-15.60px;width:1600px;text-align:right;top:746.70px;height:21.09px;line-height:21.09px;font-size:12.90px;color:#000010;font-weight:normal;transform:scaleX(0.73);transform-origin:100% 50%;">388,49</div>
<div class="t" style="left:76.80px;width:1600px;text-align:right;top:746.70px;height:21.09px;line-height:21.09px;font-size:12.90px;color:#000010;font-weight:normal;transform:scaleX(0.73);transform-origin:100% 50%;">77,70</div>
<div class="t" style="left:777.20px;top:767.80px;height:21.09px;line-height:21.09px;font-size:12.90px;color:#000010;font-weight:normal;transform:scaleX(0.74);transform-origin:0 50%;">213</div>
<div class="t" style="left:834.00px;top:767.80px;height:21.09px;line-height:21.09px;font-size:12.90px;color:#000010;font-weight:normal;transform:scaleX(0.74);transform-origin:0 50%;">Altlastenbeseitigung</div>
<div class="t" style="left:777.20px;top:788.89px;height:21.09px;line-height:21.09px;font-size:12.90px;color:#000010;font-weight:bold;transform:scaleX(0.74);transform-origin:0 50%;-webkit-text-stroke:0.35px #000010;">214</div>
<div class="t" style="left:834.00px;top:788.89px;height:21.09px;line-height:21.09px;font-size:12.90px;color:#000010;font-weight:bold;transform:scaleX(0.74);transform-origin:0 50%;-webkit-text-stroke:0.35px #000010;">Herrichten der Geländeoberfläche</div>
<div class="t" style="left:-289.40px;width:1600px;text-align:right;top:788.89px;height:21.09px;line-height:21.09px;font-size:12.90px;color:#000010;font-weight:normal;transform:scaleX(0.73);transform-origin:100% 50%;">27.852,00</div>
<div class="t" style="left:-198.20px;width:1600px;text-align:right;top:788.89px;height:21.09px;line-height:21.09px;font-size:12.90px;color:#000010;font-weight:normal;transform:scaleX(0.73);transform-origin:100% 50%;">30.289,57</div>
<div class="t" style="left:-106.20px;width:1600px;text-align:right;top:788.89px;height:21.09px;line-height:21.09px;font-size:12.90px;color:#000010;font-weight:normal;transform:scaleX(0.73);transform-origin:100% 50%;">30.289,57</div>
<div class="t" style="left:-15.60px;width:1600px;text-align:right;top:788.89px;height:21.09px;line-height:21.09px;font-size:12.90px;color:#000010;font-weight:normal;transform:scaleX(0.73);transform-origin:100% 50%;">28.990,12</div>
<div class="t" style="left:76.80px;width:1600px;text-align:right;top:788.89px;height:21.09px;line-height:21.09px;font-size:12.90px;color:#000010;font-weight:normal;transform:scaleX(0.73);transform-origin:100% 50%;">7.725,19</div>
<div class="t" style="left:166.80px;width:1600px;text-align:right;top:788.89px;height:21.09px;line-height:21.09px;font-size:12.90px;color:#0c9020;font-weight:normal;transform:scaleX(0.73);transform-origin:100% 50%;">-1.299,45</div>
<div class="t" style="left:258.40px;width:1600px;text-align:right;top:788.89px;height:21.09px;line-height:21.09px;font-size:12.90px;color:#0c9020;font-weight:normal;transform:scaleX(0.73);transform-origin:100% 50%;">4,29 %</div>
<div class="t" style="left:834.00px;top:809.98px;height:21.09px;line-height:21.09px;font-size:12.90px;color:#000010;font-weight:normal;transform:scaleX(0.74);transform-origin:0 50%;">LV001 2.1.1 Baugelände von Sträuchern u.Bäumen abräumen und beseitigen</div>
<div class="t" style="left:-198.20px;width:1600px;text-align:right;top:809.98px;height:21.09px;line-height:21.09px;font-size:12.90px;color:#000010;font-weight:normal;transform:scaleX(0.73);transform-origin:100% 50%;">328,00</div>
<div class="t" style="left:-106.20px;width:1600px;text-align:right;top:809.98px;height:21.09px;line-height:21.09px;font-size:12.90px;color:#000010;font-weight:normal;transform:scaleX(0.73);transform-origin:100% 50%;">328,00</div>
<div class="t" style="left:834.00px;top:831.08px;height:21.09px;line-height:21.09px;font-size:12.90px;color:#000010;font-weight:normal;transform:scaleX(0.74);transform-origin:0 50%;">LV001 2.1.2 Baugelände freimachen, von Steine, Zäune, Schutt etc.</div>
<div class="t" style="left:-198.20px;width:1600px;text-align:right;top:831.08px;height:21.09px;line-height:21.09px;font-size:12.90px;color:#000010;font-weight:normal;transform:scaleX(0.73);transform-origin:100% 50%;">19.635,00</div>
<div class="t" style="left:-106.20px;width:1600px;text-align:right;top:831.08px;height:21.09px;line-height:21.09px;font-size:12.90px;color:#000010;font-weight:normal;transform:scaleX(0.73);transform-origin:100% 50%;">19.635,00</div>
<div class="t" style="left:834.00px;top:852.17px;height:21.09px;line-height:21.09px;font-size:12.90px;color:#000010;font-weight:normal;transform:scaleX(0.74);transform-origin:0 50%;">LV001 2.1.3 Wurzelstock roden, D 50-75 cm, sprengen verboten</div>
<div class="t" style="left:-198.20px;width:1600px;text-align:right;top:852.17px;height:21.09px;line-height:21.09px;font-size:12.90px;color:#000010;font-weight:normal;transform:scaleX(0.73);transform-origin:100% 50%;">9.663,75</div>
<div class="t" style="left:-106.20px;width:1600px;text-align:right;top:852.17px;height:21.09px;line-height:21.09px;font-size:12.90px;color:#000010;font-weight:normal;transform:scaleX(0.73);transform-origin:100% 50%;">9.663,75</div>
<div class="t" style="left:834.00px;top:873.27px;height:21.09px;line-height:21.09px;font-size:12.90px;color:#000010;font-weight:normal;transform:scaleX(0.74);transform-origin:0 50%;">LV001 2.1.4 gerodete Flächen planieren,verfüll. der Stubbenlöcher</div>
<div class="t" style="left:-198.20px;width:1600px;text-align:right;top:873.27px;height:21.09px;line-height:21.09px;font-size:12.90px;color:#000010;font-weight:normal;transform:scaleX(0.73);transform-origin:100% 50%;">78,18</div>
<div class="t" style="left:-106.20px;width:1600px;text-align:right;top:873.27px;height:21.09px;line-height:21.09px;font-size:12.90px;color:#000010;font-weight:normal;transform:scaleX(0.73);transform-origin:100% 50%;">78,18</div>
<div class="t" style="left:834.00px;top:894.36px;height:21.09px;line-height:21.09px;font-size:12.90px;color:#000010;font-weight:normal;transform:scaleX(0.74);transform-origin:0 50%;">LV010 2.1.1 Baugelände von Sträuchern u.Bäumen abräumen und beseitigen</div>
<div class="t" style="left:-289.40px;width:1600px;text-align:right;top:894.36px;height:21.09px;line-height:21.09px;font-size:12.90px;color:#000010;font-weight:normal;transform:scaleX(0.73);transform-origin:100% 50%;">308,20</div>
<div class="t" style="left:-198.20px;width:1600px;text-align:right;top:894.36px;height:21.09px;line-height:21.09px;font-size:12.90px;color:#000010;font-weight:normal;transform:scaleX(0.73);transform-origin:100% 50%;">0,00</div>
<div class="t" style="left:834.00px;top:915.45px;height:21.09px;line-height:21.09px;font-size:12.90px;color:#000010;font-weight:normal;transform:scaleX(0.74);transform-origin:0 50%;">LV010 2.1.2 Baugelände freimachen, von Steine, Zäune, Schutt etc.</div>
<div class="t" style="left:-289.40px;width:1600px;text-align:right;top:915.45px;height:21.09px;line-height:21.09px;font-size:12.90px;color:#000010;font-weight:normal;transform:scaleX(0.73);transform-origin:100% 50%;">18.411,00</div>
<div class="t" style="left:-198.20px;width:1600px;text-align:right;top:915.45px;height:21.09px;line-height:21.09px;font-size:12.90px;color:#000010;font-weight:normal;transform:scaleX(0.73);transform-origin:100% 50%;">0,00</div>
<div class="t" style="left:834.00px;top:936.55px;height:21.09px;line-height:21.09px;font-size:12.90px;color:#000010;font-weight:normal;transform:scaleX(0.74);transform-origin:0 50%;">LV010 2.1.3 Wurzelstock roden, D 50-75 cm, sprengen verboten</div>
<div class="t" style="left:-289.40px;width:1600px;text-align:right;top:936.55px;height:21.09px;line-height:21.09px;font-size:12.90px;color:#000010;font-weight:normal;transform:scaleX(0.73);transform-origin:100% 50%;">9.059,75</div>
<div class="t" style="left:-198.20px;width:1600px;text-align:right;top:936.55px;height:21.09px;line-height:21.09px;font-size:12.90px;color:#000010;font-weight:normal;transform:scaleX(0.73);transform-origin:100% 50%;">0,00</div>
<div class="t" style="left:834.00px;top:957.64px;height:21.09px;line-height:21.09px;font-size:12.90px;color:#000010;font-weight:normal;transform:scaleX(0.74);transform-origin:0 50%;">LV010 2.1.4 gerodete Flächen planieren,verfüll. der Stubbenlöcher</div>
<div class="t" style="left:-289.40px;width:1600px;text-align:right;top:957.64px;height:21.09px;line-height:21.09px;font-size:12.90px;color:#000010;font-weight:normal;transform:scaleX(0.73);transform-origin:100% 50%;">73,06</div>
<div class="t" style="left:-198.20px;width:1600px;text-align:right;top:957.64px;height:21.09px;line-height:21.09px;font-size:12.90px;color:#000010;font-weight:normal;transform:scaleX(0.73);transform-origin:100% 50%;">0,00</div>
<div class="t" style="left:834.00px;top:978.74px;height:21.09px;line-height:21.09px;font-size:12.90px;color:#000010;font-weight:normal;transform:scaleX(0.74);transform-origin:0 50%;">LV002 1.1.01 Baugelände von Sträuchern u.Bäumen abräumen und beseitigen</div>
<div class="t" style="left:-198.20px;width:1600px;text-align:right;top:978.74px;height:21.09px;line-height:21.09px;font-size:12.90px;color:#000010;font-weight:normal;transform:scaleX(0.73);transform-origin:100% 50%;">33,64</div>
<div class="t" style="left:-106.20px;width:1600px;text-align:right;top:978.74px;height:21.09px;line-height:21.09px;font-size:12.90px;color:#000010;font-weight:normal;transform:scaleX(0.73);transform-origin:100% 50%;">33,64</div>
<div class="t" style="left:-15.60px;width:1600px;text-align:right;top:978.74px;height:21.09px;line-height:21.09px;font-size:12.90px;color:#000010;font-weight:normal;transform:scaleX(0.73);transform-origin:100% 50%;">32,91</div>
<div class="t" style="left:76.80px;width:1600px;text-align:right;top:978.74px;height:21.09px;line-height:21.09px;font-size:12.90px;color:#000010;font-weight:normal;transform:scaleX(0.73);transform-origin:100% 50%;">32,91</div>
<div class="t" style="left:834.00px;top:999.83px;height:21.09px;line-height:21.09px;font-size:12.90px;color:#000010;font-weight:normal;transform:scaleX(0.74);transform-origin:0 50%;">LV002 1.1.02 Baugelände freimachen, von Steine, Zäune, Schutt etc.</div>
<div class="t" style="left:-198.20px;width:1600px;text-align:right;top:999.83px;height:21.09px;line-height:21.09px;font-size:12.90px;color:#000010;font-weight:normal;transform:scaleX(0.73);transform-origin:100% 50%;">120,00</div>
<div class="t" style="left:-106.20px;width:1600px;text-align:right;top:999.83px;height:21.09px;line-height:21.09px;font-size:12.90px;color:#000010;font-weight:normal;transform:scaleX(0.73);transform-origin:100% 50%;">120,00</div>
<div class="t" style="left:-15.60px;width:1600px;text-align:right;top:999.83px;height:21.09px;line-height:21.09px;font-size:12.90px;color:#000010;font-weight:normal;transform:scaleX(0.73);transform-origin:100% 50%;">108,00</div>
<div class="t" style="left:76.80px;width:1600px;text-align:right;top:999.83px;height:21.09px;line-height:21.09px;font-size:12.90px;color:#000010;font-weight:normal;transform:scaleX(0.73);transform-origin:100% 50%;">108,00</div>
<div class="t" style="left:834.00px;top:1020.92px;height:21.09px;line-height:21.09px;font-size:12.90px;color:#000010;font-weight:normal;transform:scaleX(0.74);transform-origin:0 50%;">LV002 1.1.03 Wurzelstöcke roden, D 10-30 cm, sprengen verboten</div>
<div class="t" style="left:-198.20px;width:1600px;text-align:right;top:1020.92px;height:21.09px;line-height:21.09px;font-size:12.90px;color:#000010;font-weight:normal;transform:scaleX(0.73);transform-origin:100% 50%;">7,50</div>
<div class="t" style="left:-106.20px;width:1600px;text-align:right;top:1020.92px;height:21.09px;line-height:21.09px;font-size:12.90px;color:#000010;font-weight:normal;transform:scaleX(0.73);transform-origin:100% 50%;">7,50</div>
<div class="t" style="left:-15.60px;width:1600px;text-align:right;top:1020.92px;height:21.09px;line-height:21.09px;font-size:12.90px;color:#000010;font-weight:normal;transform:scaleX(0.73);transform-origin:100% 50%;">6,50</div>
<div class="t" style="left:76.80px;width:1600px;text-align:right;top:1020.92px;height:21.09px;line-height:21.09px;font-size:12.90px;color:#000010;font-weight:normal;transform:scaleX(0.73);transform-origin:100% 50%;">6,50</div>
<div class="t" style="left:834.00px;top:1042.02px;height:21.09px;line-height:21.09px;font-size:12.90px;color:#000010;font-weight:normal;transform:scaleX(0.74);transform-origin:0 50%;">LV002 1.1.04 Wurzelstock roden, D 30-50 cm, sprengen verboten</div>
<div class="t" style="left:-198.20px;width:1600px;text-align:right;top:1042.02px;height:21.09px;line-height:21.09px;font-size:12.90px;color:#000010;font-weight:normal;transform:scaleX(0.73);transform-origin:100% 50%;">11,20</div>
<div class="t" style="left:-106.20px;width:1600px;text-align:right;top:1042.02px;height:21.09px;line-height:21.09px;font-size:12.90px;color:#000010;font-weight:normal;transform:scaleX(0.73);transform-origin:100% 50%;">11,20</div>
<div class="t" style="left:-15.60px;width:1600px;text-align:right;top:1042.02px;height:21.09px;line-height:21.09px;font-size:12.90px;color:#000010;font-weight:normal;transform:scaleX(0.73);transform-origin:100% 50%;">11,20</div>
<div class="t" style="left:76.80px;width:1600px;text-align:right;top:1042.02px;height:21.09px;line-height:21.09px;font-size:12.90px;color:#000010;font-weight:normal;transform:scaleX(0.73);transform-origin:100% 50%;">11,20</div>
<div class="t" style="left:834.00px;top:1063.11px;height:21.09px;line-height:21.09px;font-size:12.90px;color:#000010;font-weight:normal;transform:scaleX(0.74);transform-origin:0 50%;">LV002 1.1.05 Wurzelstock roden, D 50-75 cm, sprengen verboten</div>
<div class="t" style="left:-198.20px;width:1600px;text-align:right;top:1063.11px;height:21.09px;line-height:21.09px;font-size:12.90px;color:#000010;font-weight:normal;transform:scaleX(0.73);transform-origin:100% 50%;">3,60</div>
<div class="t" style="left:-106.20px;width:1600px;text-align:right;top:1063.11px;height:21.09px;line-height:21.09px;font-size:12.90px;color:#000010;font-weight:normal;transform:scaleX(0.73);transform-origin:100% 50%;">3,60</div>
<div class="t" style="left:-15.60px;width:1600px;text-align:right;top:1063.11px;height:21.09px;line-height:21.09px;font-size:12.90px;color:#000010;font-weight:normal;transform:scaleX(0.73);transform-origin:100% 50%;">3,20</div>
<div class="t" style="left:76.80px;width:1600px;text-align:right;top:1063.11px;height:21.09px;line-height:21.09px;font-size:12.90px;color:#000010;font-weight:normal;transform:scaleX(0.73);transform-origin:100% 50%;">3,20</div>
<div class="t" style="left:834.00px;top:1084.21px;height:21.09px;line-height:21.09px;font-size:12.90px;color:#000010;font-weight:normal;transform:scaleX(0.74);transform-origin:0 50%;">LV002 1.1.06 Baum fällen, D 30-50 cm, Räumgut wird Eigentum AN, Stamm AG</div>
<div class="t" style="left:-198.20px;width:1600px;text-align:right;top:1084.21px;height:21.09px;line-height:21.09px;font-size:12.90px;color:#000010;font-weight:normal;transform:scaleX(0.73);transform-origin:100% 50%;">370,00</div>
<div class="t" style="left:-106.20px;width:1600px;text-align:right;top:1084.21px;height:21.09px;line-height:21.09px;font-size:12.90px;color:#000010;font-weight:normal;transform:scaleX(0.73);transform-origin:100% 50%;">370,00</div>
<div class="t" style="left:-15.60px;width:1600px;text-align:right;top:1084.21px;height:21.09px;line-height:21.09px;font-size:12.90px;color:#000010;font-weight:normal;transform:scaleX(0.73);transform-origin:100% 50%;">358,00</div>
<div class="t" style="left:76.80px;width:1600px;text-align:right;top:1084.21px;height:21.09px;line-height:21.09px;font-size:12.90px;color:#000010;font-weight:normal;transform:scaleX(0.73);transform-origin:100% 50%;">358,00</div>
<div class="t" style="left:834.00px;top:1105.30px;height:21.09px;line-height:21.09px;font-size:12.90px;color:#000010;font-weight:normal;transform:scaleX(0.74);transform-origin:0 50%;">LV002 1.1.07 gerodete Flächen planieren,verfüll. der Stubbenlöcher</div>
<div class="t" style="left:-198.20px;width:1600px;text-align:right;top:1105.30px;height:21.09px;line-height:21.09px;font-size:12.90px;color:#000010;font-weight:normal;transform:scaleX(0.73);transform-origin:100% 50%;">39,00</div>
<div class="t" style="left:-106.20px;width:1600px;text-align:right;top:1105.30px;height:21.09px;line-height:21.09px;font-size:12.90px;color:#000010;font-weight:normal;transform:scaleX(0.73);transform-origin:100% 50%;">39,00</div>
<div class="t" style="left:-15.60px;width:1600px;text-align:right;top:1105.30px;height:21.09px;line-height:21.09px;font-size:12.90px;color:#000010;font-weight:normal;transform:scaleX(0.73);transform-origin:100% 50%;">30,00</div>
<div class="t" style="left:76.80px;width:1600px;text-align:right;top:1105.30px;height:21.09px;line-height:21.09px;font-size:12.90px;color:#000010;font-weight:normal;transform:scaleX(0.73);transform-origin:100% 50%;">30,00</div>
<div class="t" style="left:834.00px;top:1126.39px;height:21.09px;line-height:21.09px;font-size:12.90px;color:#000010;font-weight:normal;transform:scaleX(0.74);transform-origin:0 50%;">AT100096 2.1.1 Baugelände von Sträuchern u.Bäumen abräumen und beseitigen</div>
<div class="t" style="left:-15.60px;width:1600px;text-align:right;top:1126.39px;height:21.09px;line-height:21.09px;font-size:12.90px;color:#000010;font-weight:normal;transform:scaleX(0.73);transform-origin:100% 50%;">310,63</div>
<div class="t" style="left:76.80px;width:1600px;text-align:right;top:1126.39px;height:21.09px;line-height:21.09px;font-size:12.90px;color:#000010;font-weight:normal;transform:scaleX(0.73);transform-origin:100% 50%;">77,67</div>
<div class="t" style="left:834.00px;top:1147.49px;height:21.09px;line-height:21.09px;font-size:12.90px;color:#000010;font-weight:normal;transform:scaleX(0.74);transform-origin:0 50%;">AT100096 2.1.2 Baugelände freimachen, von Steine, Zäune, Schutt etc</div>
<div class="t" style="left:-15.60px;width:1600px;text-align:right;top:1147.49px;height:21.09px;line-height:21.09px;font-size:12.90px;color:#000010;font-weight:normal;transform:scaleX(0.73);transform-origin:100% 50%;">18.915,00</div>
<div class="t" style="left:76.80px;width:1600px;text-align:right;top:1147.49px;height:21.09px;line-height:21.09px;font-size:12.90px;color:#000010;font-weight:normal;transform:scaleX(0.73);transform-origin:100% 50%;">4.728,75</div>
<div class="t" style="left:834.00px;top:1168.58px;height:21.09px;line-height:21.09px;font-size:12.90px;color:#000010;font-weight:normal;transform:scaleX(0.74);transform-origin:0 50%;">AT100096 2.1.3 Wurzelstock roden, D 50-75 cm, sprengen verboten</div>
<div class="t" style="left:-15.60px;width:1600px;text-align:right;top:1168.58px;height:21.09px;line-height:21.09px;font-size:12.90px;color:#000010;font-weight:normal;transform:scaleX(0.73);transform-origin:100% 50%;">9.141,84</div>
<div class="t" style="left:76.80px;width:1600px;text-align:right;top:1168.58px;height:21.09px;line-height:21.09px;font-size:12.90px;color:#000010;font-weight:normal;transform:scaleX(0.73);transform-origin:100% 50%;">2.350,95</div>
<div class="t" style="left:834.00px;top:1189.68px;height:21.09px;line-height:21.09px;font-size:12.90px;color:#000010;font-weight:normal;transform:scaleX(0.74);transform-origin:0 50%;">AT100096 2.1.4 gerodete Flächen planieren,verfüll. der Stubbenlöcher</div>
<div class="t" style="left:-15.60px;width:1600px;text-align:right;top:1189.68px;height:21.09px;line-height:21.09px;font-size:12.90px;color:#000010;font-weight:normal;transform:scaleX(0.73);transform-origin:100% 50%;">73,82</div>
<div class="t" style="left:76.80px;width:1600px;text-align:right;top:1189.68px;height:21.09px;line-height:21.09px;font-size:12.90px;color:#000010;font-weight:normal;transform:scaleX(0.73);transform-origin:100% 50%;">18,41</div>
<div class="t" style="left:777.20px;top:1210.77px;height:21.09px;line-height:21.09px;font-size:12.90px;color:#000010;font-weight:normal;transform:scaleX(0.74);transform-origin:0 50%;">219</div>
<div class="t" style="left:834.00px;top:1210.77px;height:21.09px;line-height:21.09px;font-size:12.90px;color:#000010;font-weight:normal;transform:scaleX(0.74);transform-origin:0 50%;">Herrichten, sonstiges</div>
<div class="t" style="left:777.20px;top:1231.86px;height:21.09px;line-height:21.09px;font-size:12.90px;color:#1414f8;font-weight:normal;transform:scaleX(0.74);transform-origin:0 50%;">220</div>
<div class="t" style="left:834.00px;top:1231.86px;height:21.09px;line-height:21.09px;font-size:12.90px;color:#1414f8;font-weight:normal;transform:scaleX(0.74);transform-origin:0 50%;">ÖFFENTLICHE ERSCHLIESSUNG</div>
<div class="t" style="left:-289.40px;width:1600px;text-align:right;top:1231.86px;height:21.09px;line-height:21.09px;font-size:12.90px;color:#1414f8;font-weight:normal;transform:scaleX(0.73);transform-origin:100% 50%;">1.000,00</div>
<div class="t" style="left:-198.20px;width:1600px;text-align:right;top:1231.86px;height:21.09px;line-height:21.09px;font-size:12.90px;color:#1414f8;font-weight:normal;transform:scaleX(0.73);transform-origin:100% 50%;">10.000,00</div>
<div class="t" style="left:166.80px;width:1600px;text-align:right;top:1231.86px;height:21.09px;line-height:21.09px;font-size:12.90px;color:#0c9020;font-weight:normal;transform:scaleX(0.73);transform-origin:100% 50%;">-10.000,00</div>
<div class="t" style="left:258.40px;width:1600px;text-align:right;top:1231.86px;height:21.09px;line-height:21.09px;font-size:12.90px;color:#0c9020;font-weight:normal;transform:scaleX(0.73);transform-origin:100% 50%;">-100,00 %</div>
<div class="t" style="left:777.20px;top:1252.96px;height:21.09px;line-height:21.09px;font-size:12.90px;color:#000010;font-weight:normal;transform:scaleX(0.74);transform-origin:0 50%;">221</div>
<div class="t" style="left:834.00px;top:1252.96px;height:21.09px;line-height:21.09px;font-size:12.90px;color:#000010;font-weight:normal;transform:scaleX(0.74);transform-origin:0 50%;">Abwasserentsorgung</div>
<div class="t" style="left:777.20px;top:1274.05px;height:21.09px;line-height:21.09px;font-size:12.90px;color:#000010;font-weight:normal;transform:scaleX(0.74);transform-origin:0 50%;">222</div>
<div class="t" style="left:834.00px;top:1274.05px;height:21.09px;line-height:21.09px;font-size:12.90px;color:#000010;font-weight:normal;transform:scaleX(0.74);transform-origin:0 50%;">Wasserversorgung</div>
<div class="t" style="left:777.20px;top:1295.15px;height:21.09px;line-height:21.09px;font-size:12.90px;color:#000010;font-weight:normal;transform:scaleX(0.74);transform-origin:0 50%;">223</div>
<div class="t" style="left:834.00px;top:1295.15px;height:21.09px;line-height:21.09px;font-size:12.90px;color:#000010;font-weight:normal;transform:scaleX(0.74);transform-origin:0 50%;">Gasversorgung</div>
<div class="t" style="left:777.20px;top:1316.24px;height:21.09px;line-height:21.09px;font-size:12.90px;color:#000010;font-weight:normal;transform:scaleX(0.74);transform-origin:0 50%;">224</div>
<div class="t" style="left:834.00px;top:1316.24px;height:21.09px;line-height:21.09px;font-size:12.90px;color:#000010;font-weight:normal;transform:scaleX(0.74);transform-origin:0 50%;">Wärmeversorgung</div>
<div class="t" style="left:777.20px;top:1337.33px;height:21.09px;line-height:21.09px;font-size:12.90px;color:#000010;font-weight:normal;transform:scaleX(0.74);transform-origin:0 50%;">225</div>
<div class="t" style="left:834.00px;top:1337.33px;height:21.09px;line-height:21.09px;font-size:12.90px;color:#000010;font-weight:normal;transform:scaleX(0.74);transform-origin:0 50%;">Stromversorgung</div>
<div class="t" style="left:777.20px;top:1358.43px;height:21.09px;line-height:21.09px;font-size:12.90px;color:#000010;font-weight:normal;transform:scaleX(0.74);transform-origin:0 50%;">226</div>
<div class="t" style="left:834.00px;top:1358.43px;height:21.09px;line-height:21.09px;font-size:12.90px;color:#000010;font-weight:normal;transform:scaleX(0.74);transform-origin:0 50%;">Telekommunikation</div>
<div class="t" style="left:777.20px;top:1379.52px;height:21.09px;line-height:21.09px;font-size:12.90px;color:#000010;font-weight:normal;transform:scaleX(0.74);transform-origin:0 50%;">227</div>
<div class="t" style="left:834.00px;top:1379.52px;height:21.09px;line-height:21.09px;font-size:12.90px;color:#000010;font-weight:normal;transform:scaleX(0.74);transform-origin:0 50%;">Verkehrserschließung</div>
<div class="t" style="left:777.20px;top:1400.62px;height:21.09px;line-height:21.09px;font-size:12.90px;color:#000010;font-weight:normal;transform:scaleX(0.74);transform-origin:0 50%;">228</div>
<div class="t" style="left:834.00px;top:1400.62px;height:21.09px;line-height:21.09px;font-size:12.90px;color:#000010;font-weight:normal;transform:scaleX(0.74);transform-origin:0 50%;">Abfallentsorgung</div>
<div class="t" style="left:777.20px;top:1421.71px;height:21.09px;line-height:21.09px;font-size:12.90px;color:#000010;font-weight:normal;transform:scaleX(0.74);transform-origin:0 50%;">229</div>
<div class="t" style="left:834.00px;top:1421.71px;height:21.09px;line-height:21.09px;font-size:12.90px;color:#000010;font-weight:normal;transform:scaleX(0.74);transform-origin:0 50%;">Öffentliche Erschließung, sonstiges</div>
<div class="t" style="left:777.20px;top:1442.80px;height:21.09px;line-height:21.09px;font-size:12.90px;color:#1414f8;font-weight:normal;transform:scaleX(0.74);transform-origin:0 50%;">230</div>
<div class="t" style="left:834.00px;top:1442.80px;height:21.09px;line-height:21.09px;font-size:12.90px;color:#1414f8;font-weight:normal;transform:scaleX(0.74);transform-origin:0 50%;">NICHTÖFFENTLICHE ERSCHLIESSUNG</div>
<div class="t" style="left:-289.40px;width:1600px;text-align:right;top:1442.80px;height:21.09px;line-height:21.09px;font-size:12.90px;color:#1414f8;font-weight:normal;transform:scaleX(0.73);transform-origin:100% 50%;">9.000,00</div>
<div class="t" style="left:-198.20px;width:1600px;text-align:right;top:1442.80px;height:21.09px;line-height:21.09px;font-size:12.90px;color:#1414f8;font-weight:normal;transform:scaleX(0.73);transform-origin:100% 50%;">9.000,00</div>
<div class="t" style="left:166.80px;width:1600px;text-align:right;top:1442.80px;height:21.09px;line-height:21.09px;font-size:12.90px;color:#0c9020;font-weight:normal;transform:scaleX(0.73);transform-origin:100% 50%;">-9.000,00</div>
<div class="t" style="left:258.40px;width:1600px;text-align:right;top:1442.80px;height:21.09px;line-height:21.09px;font-size:12.90px;color:#0c9020;font-weight:normal;transform:scaleX(0.73);transform-origin:100% 50%;">-100,00 %</div>
<div style="left:18.20px;top:427.96px;width:642.80px;height:18.94px;background:#e8505a;"></div>
<div style="left:4.80px;top:167.60px;width:8.80px;height:9.20px;background:#f4f4ec;box-sizing:border-box;border:2px solid #0a0a0a;"></div>
<div style="left:6.80px;top:171.40px;width:4.80px;height:1.80px;background:#0a0a0a;"></div>
<div class="t" style="left:21.40px;top:163.20px;height:18.94px;line-height:18.94px;font-size:12.60px;color:#ffffff;font-weight:bold;transform:scaleX(0.86);transform-origin:0 50%;-webkit-text-stroke:0.3px #ffffff;">Projekte</div>
<div style="left:4.80px;top:186.54px;width:8.80px;height:9.20px;background:#f4f4ec;box-sizing:border-box;border:2px solid #0a0a0a;"></div>
<div style="left:6.80px;top:190.34px;width:4.80px;height:1.80px;background:#0a0a0a;"></div>
<div class="t" style="left:28.40px;top:182.14px;height:18.94px;line-height:18.94px;font-size:12.60px;color:#ffffff;font-weight:bold;transform:scaleX(0.86);transform-origin:0 50%;-webkit-text-stroke:0.3px #ffffff;">1. Musterprojekte</div>
<div style="left:5.20px;top:205.88px;width:8.00px;height:8.40px;background:#e8e8e0;box-sizing:border-box;border:0.8px solid #9aa0b0;"></div>
<div style="left:37.80px;top:204.28px;width:3.20px;height:13.60px;background:#1a2a6a;"></div>
<div style="left:38.40px;top:208.28px;width:2.80px;height:5.00px;background:#e0103a;"></div>
<div style="left:41.80px;top:204.28px;width:6.80px;height:7.20px;background:#f4f000;"></div>
<div style="left:41.80px;top:211.88px;width:4.00px;height:5.60px;background:#2060f0;"></div>
<div class="t" style="left:55.60px;top:201.08px;height:18.94px;line-height:18.94px;font-size:12.60px;color:#d6dae4;font-weight:normal;transform:scaleX(0.86);transform-origin:0 50%;-webkit-text-stroke:0.3px #d6dae4;">AC22 Kalkulation mit AC22-Modell</div>
<div style="left:5.20px;top:224.82px;width:8.00px;height:8.40px;background:#e8e8e0;box-sizing:border-box;border:0.8px solid #9aa0b0;"></div>
<div style="left:37.80px;top:223.22px;width:3.20px;height:13.60px;background:#1a2a6a;"></div>
<div style="left:38.40px;top:227.22px;width:2.80px;height:5.00px;background:#e0103a;"></div>
<div style="left:41.80px;top:223.22px;width:6.80px;height:7.20px;background:#f4f000;"></div>
<div style="left:41.80px;top:230.82px;width:4.00px;height:5.60px;background:#2060f0;"></div>
<div class="t" style="left:55.60px;top:220.02px;height:18.94px;line-height:18.94px;font-size:12.60px;color:#d6dae4;font-weight:normal;transform:scaleX(0.86);transform-origin:0 50%;-webkit-text-stroke:0.3px #d6dae4;">M000 Vorlagen</div>
<div style="left:5.20px;top:243.76px;width:8.00px;height:8.40px;background:#e8e8e0;box-sizing:border-box;border:0.8px solid #9aa0b0;"></div>
<div style="left:37.80px;top:242.16px;width:3.20px;height:13.60px;background:#1a2a6a;"></div>
<div style="left:38.40px;top:246.16px;width:2.80px;height:5.00px;background:#e0103a;"></div>
<div style="left:41.80px;top:242.16px;width:6.80px;height:7.20px;background:#f4f000;"></div>
<div style="left:41.80px;top:249.76px;width:4.00px;height:5.60px;background:#2060f0;"></div>
<div class="t" style="left:55.60px;top:238.96px;height:18.94px;line-height:18.94px;font-size:12.60px;color:#d6dae4;font-weight:normal;transform:scaleX(0.86);transform-origin:0 50%;-webkit-text-stroke:0.3px #d6dae4;">M002 Projektmengenvariablen</div>
<div style="left:5.20px;top:262.70px;width:8.00px;height:8.40px;background:#e8e8e0;box-sizing:border-box;border:0.8px solid #9aa0b0;"></div>
<div style="left:37.80px;top:261.10px;width:3.20px;height:13.60px;background:#1a2a6a;"></div>
<div style="left:38.40px;top:265.10px;width:2.80px;height:5.00px;background:#e0103a;"></div>
<div style="left:41.80px;top:261.10px;width:6.80px;height:7.20px;background:#f4f000;"></div>
<div style="left:41.80px;top:268.70px;width:4.00px;height:5.60px;background:#2060f0;"></div>
<div class="t" style="left:55.60px;top:257.90px;height:18.94px;line-height:18.94px;font-size:12.60px;color:#d6dae4;font-weight:normal;transform:scaleX(0.86);transform-origin:0 50%;-webkit-text-stroke:0.3px #d6dae4;">M004 EKT-Basisdaten</div>
<div style="left:4.80px;top:281.24px;width:8.80px;height:9.20px;background:#f4f4ec;box-sizing:border-box;border:2px solid #0a0a0a;"></div>
<div style="left:6.80px;top:285.04px;width:4.80px;height:1.80px;background:#0a0a0a;"></div>
<div style="left:37.80px;top:280.04px;width:3.20px;height:13.60px;background:#1a2a6a;"></div>
<div style="left:38.40px;top:284.04px;width:2.80px;height:5.00px;background:#e0103a;"></div>
<div style="left:41.80px;top:280.04px;width:6.80px;height:7.20px;background:#f4f000;"></div>
<div style="left:41.80px;top:287.64px;width:4.00px;height:5.60px;background:#2060f0;"></div>
<div class="t" style="left:55.60px;top:276.84px;height:18.94px;line-height:18.94px;font-size:12.60px;color:#ffffff;font-weight:normal;transform:scaleX(0.86);transform-origin:0 50%;-webkit-text-stroke:0.3px #ffffff;">P001 Musterhaus</div>
<div style="left:5.20px;top:300.58px;width:8.00px;height:8.40px;background:#e8e8e0;box-sizing:border-box;border:0.8px solid #9aa0b0;"></div>
<div class="t" style="left:41.60px;top:295.78px;height:18.94px;line-height:18.94px;font-size:12.60px;color:#d6dae4;font-weight:normal;transform:scaleX(0.86);transform-origin:0 50%;-webkit-text-stroke:0.3px #d6dae4;">Element-Kalkulationen</div>
<div style="left:5.20px;top:319.52px;width:8.00px;height:8.40px;background:#e8e8e0;box-sizing:border-box;border:0.8px solid #9aa0b0;"></div>
<div class="t" style="left:41.60px;top:314.72px;height:18.94px;line-height:18.94px;font-size:12.60px;color:#d6dae4;font-weight:normal;transform:scaleX(0.86);transform-origin:0 50%;-webkit-text-stroke:0.3px #d6dae4;">Raumbücher</div>
<div style="left:4.80px;top:338.06px;width:8.80px;height:9.20px;background:#f4f4ec;box-sizing:border-box;border:2px solid #0a0a0a;"></div>
<div style="left:6.80px;top:341.86px;width:4.80px;height:1.80px;background:#0a0a0a;"></div>
<div class="t" style="left:41.60px;top:333.66px;height:18.94px;line-height:18.94px;font-size:12.60px;color:#ffffff;font-weight:bold;transform:scaleX(0.86);transform-origin:0 50%;-webkit-text-stroke:0.3px #ffffff;">Budgetplanung und Controlling</div>
<div class="t" style="left:69.80px;top:352.60px;height:18.94px;line-height:18.94px;font-size:12.60px;color:#ffffff;font-weight:normal;transform:scaleX(0.86);transform-origin:0 50%;-webkit-text-stroke:0.3px #ffffff;">Kostenverteilung nach Leistungsbereichen</div>
<div class="t" style="left:69.80px;top:371.54px;height:18.94px;line-height:18.94px;font-size:12.60px;color:#ffffff;font-weight:normal;transform:scaleX(0.86);transform-origin:0 50%;-webkit-text-stroke:0.3px #ffffff;">Kostenverteilung nach DIN 276-81</div>
<div class="t" style="left:69.80px;top:390.48px;height:18.94px;line-height:18.94px;font-size:12.60px;color:#ffffff;font-weight:normal;transform:scaleX(0.86);transform-origin:0 50%;-webkit-text-stroke:0.3px #ffffff;">Kostenverteilung nach DIN 276-93</div>
<div class="t" style="left:69.80px;top:409.42px;height:18.94px;line-height:18.94px;font-size:12.60px;color:#ffffff;font-weight:normal;transform:scaleX(0.86);transform-origin:0 50%;-webkit-text-stroke:0.3px #ffffff;">Kostenverteilung nach DIN 276-06</div>
<div class="t" style="left:69.80px;top:428.36px;height:18.94px;line-height:18.94px;font-size:12.60px;color:#ffffff;font-weight:normal;transform:scaleX(0.86);transform-origin:0 50%;-webkit-text-stroke:0.3px #ffffff;">Kostenverteilung nach DIN 276-08</div>
<div class="t" style="left:69.80px;top:447.30px;height:18.94px;line-height:18.94px;font-size:12.60px;color:#ffffff;font-weight:normal;transform:scaleX(0.86);transform-origin:0 50%;-webkit-text-stroke:0.3px #ffffff;">Kostenverteilung nach DIN 276 2018-12</div>
<div class="t" style="left:69.80px;top:466.24px;height:18.94px;line-height:18.94px;font-size:12.60px;color:#ffffff;font-weight:normal;transform:scaleX(0.86);transform-origin:0 50%;-webkit-text-stroke:0.3px #ffffff;">Kostenverteilung nach ÖNORM 1801-1 (2009)</div>
<div style="left:5.20px;top:489.98px;width:8.00px;height:8.40px;background:#e8e8e0;box-sizing:border-box;border:0.8px solid #9aa0b0;"></div>
<div class="t" style="left:41.60px;top:485.18px;height:18.94px;line-height:18.94px;font-size:12.60px;color:#d6dae4;font-weight:normal;transform:scaleX(0.86);transform-origin:0 50%;-webkit-text-stroke:0.3px #d6dae4;">Leistungsverzeichnisse</div>
<div style="left:5.20px;top:508.92px;width:8.00px;height:8.40px;background:#e8e8e0;box-sizing:border-box;border:0.8px solid #9aa0b0;"></div>
<div class="t" style="left:41.60px;top:504.12px;height:18.94px;line-height:18.94px;font-size:12.60px;color:#d6dae4;font-weight:normal;transform:scaleX(0.86);transform-origin:0 50%;-webkit-text-stroke:0.3px #d6dae4;">Aufträge</div>
<div style="left:5.20px;top:527.86px;width:8.00px;height:8.40px;background:#e8e8e0;box-sizing:border-box;border:0.8px solid #9aa0b0;"></div>
<div class="t" style="left:41.60px;top:523.06px;height:18.94px;line-height:18.94px;font-size:12.60px;color:#d6dae4;font-weight:normal;transform:scaleX(0.86);transform-origin:0 50%;-webkit-text-stroke:0.3px #d6dae4;">Bautagebuch</div>
<div style="left:5.20px;top:546.80px;width:8.00px;height:8.40px;background:#e8e8e0;box-sizing:border-box;border:0.8px solid #9aa0b0;"></div>
<div class="t" style="left:41.60px;top:542.00px;height:18.94px;line-height:18.94px;font-size:12.60px;color:#d6dae4;font-weight:normal;transform:scaleX(0.86);transform-origin:0 50%;-webkit-text-stroke:0.3px #d6dae4;">Bauzeitenpläne</div>
<div style="left:5.20px;top:565.74px;width:8.00px;height:8.40px;background:#e8e8e0;box-sizing:border-box;border:0.8px solid #9aa0b0;"></div>
<div class="t" style="left:41.60px;top:560.94px;height:18.94px;line-height:18.94px;font-size:12.60px;color:#d6dae4;font-weight:normal;transform:scaleX(0.86);transform-origin:0 50%;-webkit-text-stroke:0.3px #d6dae4;">Bauteil-Kalkulationen</div>
<div style="left:5.20px;top:584.68px;width:8.00px;height:8.40px;background:#e8e8e0;box-sizing:border-box;border:0.8px solid #9aa0b0;"></div>
<div class="t" style="left:41.60px;top:579.88px;height:18.94px;line-height:18.94px;font-size:12.60px;color:#d6dae4;font-weight:normal;transform:scaleX(0.86);transform-origin:0 50%;-webkit-text-stroke:0.3px #d6dae4;">Dokumente</div>
<div style="left:5.20px;top:603.62px;width:8.00px;height:8.40px;background:#e8e8e0;box-sizing:border-box;border:0.8px solid #9aa0b0;"></div>
<div style="left:37.80px;top:602.02px;width:3.20px;height:13.60px;background:#1a2a6a;"></div>
<div style="left:38.40px;top:606.02px;width:2.80px;height:5.00px;background:#e0103a;"></div>
<div style="left:41.80px;top:602.02px;width:6.80px;height:7.20px;background:#f4f000;"></div>
<div style="left:41.80px;top:609.62px;width:4.00px;height:5.60px;background:#2060f0;"></div>
<div class="t" style="left:55.60px;top:598.82px;height:18.94px;line-height:18.94px;font-size:12.60px;color:#d6dae4;font-weight:normal;transform:scaleX(0.86);transform-origin:0 50%;-webkit-text-stroke:0.3px #d6dae4;">P2020 Neu-Vorlage</div>
<div style="left:5.20px;top:622.56px;width:8.00px;height:8.40px;background:#e8e8e0;box-sizing:border-box;border:0.8px solid #9aa0b0;"></div>
<div class="t" style="left:28.40px;top:617.76px;height:18.94px;line-height:18.94px;font-size:12.60px;color:#d6dae4;font-weight:normal;transform:scaleX(0.86);transform-origin:0 50%;-webkit-text-stroke:0.3px #d6dae4;">2. Eigene Projekte</div>
<div style="left:5.20px;top:641.50px;width:8.00px;height:8.40px;background:#e8e8e0;box-sizing:border-box;border:0.8px solid #9aa0b0;"></div>
<div class="t" style="left:28.40px;top:636.70px;height:18.94px;line-height:18.94px;font-size:12.60px;color:#d6dae4;font-weight:normal;transform:scaleX(0.86);transform-origin:0 50%;-webkit-text-stroke:0.3px #d6dae4;">99. Archivierte Projekte</div>
<div style="left:5.20px;top:660.44px;width:8.00px;height:8.40px;background:#e8e8e0;box-sizing:border-box;border:0.8px solid #9aa0b0;"></div>
<div class="t" style="left:28.40px;top:655.64px;height:18.94px;line-height:18.94px;font-size:12.60px;color:#d6dae4;font-weight:normal;transform:scaleX(0.86);transform-origin:0 50%;-webkit-text-stroke:0.3px #d6dae4;">CPLAN8 Migrierte Projekte (nicht auf Auslieferungs-DB)</div>
<div style="left:5.20px;top:679.38px;width:8.00px;height:8.40px;background:#e8e8e0;box-sizing:border-box;border:0.8px solid #9aa0b0;"></div>
<div class="t" style="left:28.40px;top:674.58px;height:18.94px;line-height:18.94px;font-size:12.60px;color:#d6dae4;font-weight:normal;transform:scaleX(0.86);transform-origin:0 50%;-webkit-text-stroke:0.3px #d6dae4;">Test Sonderprojekte Archiv</div>
<div style="left:74.00px;top:34.00px;width:2.00px;height:28.00px;background:#e8eaee;"></div>
<div style="left:225.00px;top:34.00px;width:2.00px;height:28.00px;background:#e8eaee;"></div>
<div style="left:138.60px;top:33.00px;width:1.60px;height:26.00px;background:#7e838c;"></div>
<div style="left:52.60px;top:72.80px;width:1.60px;height:26.00px;background:#7e838c;"></div>
<div class="t" style="left:-774.20px;width:1600px;text-align:center;top:84.80px;height:17.20px;line-height:17.20px;font-size:12.70px;color:#f2eef4;font-weight:normal;transform:scaleX(0.83);transform-origin:50% 50%;">Projekte</div>
<div class="t" style="left:-717.00px;width:1600px;text-align:center;top:84.80px;height:17.20px;line-height:17.20px;font-size:12.70px;color:#f2eef4;font-weight:normal;transform:scaleX(0.83);transform-origin:50% 50%;">ElemKalk.</div>
<div class="t" style="left:-666.80px;width:1600px;text-align:center;top:84.80px;height:17.20px;line-height:17.20px;font-size:12.70px;color:#f2eef4;font-weight:normal;transform:scaleX(0.83);transform-origin:50% 50%;">Raumb.</div>
<div class="t" style="left:-630.00px;width:1600px;text-align:center;top:84.80px;height:17.20px;line-height:17.20px;font-size:12.70px;color:#f2eef4;font-weight:normal;transform:scaleX(0.83);transform-origin:50% 50%;">LV's</div>
<div class="t" style="left:-591.60px;width:1600px;text-align:center;top:84.80px;height:17.20px;line-height:17.20px;font-size:12.70px;color:#f2eef4;font-weight:normal;transform:scaleX(0.83);transform-origin:50% 50%;">Aufträge</div>
<div class="t" style="left:-539.60px;width:1600px;text-align:center;top:84.80px;height:17.20px;line-height:17.20px;font-size:12.70px;color:#f2eef4;font-weight:normal;transform:scaleX(0.83);transform-origin:50% 50%;">Bautageb.</div>
<div class="t" style="left:-482.00px;width:1600px;text-align:center;top:84.80px;height:17.20px;line-height:17.20px;font-size:12.70px;color:#f2eef4;font-weight:normal;transform:scaleX(0.83);transform-origin:50% 50%;">KostKontr.</div>
<div class="t" style="left:-440.80px;width:1600px;text-align:center;top:84.80px;height:17.20px;line-height:17.20px;font-size:12.70px;color:#f2eef4;font-weight:normal;transform:scaleX(0.83);transform-origin:50% 50%;">BIM</div>
<div class="t" style="left:-403.20px;width:1600px;text-align:center;top:84.80px;height:17.20px;line-height:17.20px;font-size:12.70px;color:#f2eef4;font-weight:normal;transform:scaleX(0.83);transform-origin:50% 50%;">Bauzeit.</div>
<div class="t" style="left:-348.80px;width:1600px;text-align:center;top:84.80px;height:17.20px;line-height:17.20px;font-size:12.70px;color:#f2eef4;font-weight:normal;transform:scaleX(0.83);transform-origin:50% 50%;">Dokumente</div>
<div class="t" style="left:26.00px;top:1438.60px;height:22.00px;line-height:22.00px;font-size:12.40px;color:#eef0f4;font-weight:normal;transform:scaleX(0.8);transform-origin:0 50%;">Projekt Explorer</div>
<div class="t" style="left:157.00px;top:1438.60px;height:22.00px;line-height:22.00px;font-size:12.40px;color:#3a3a50;font-weight:normal;transform:scaleX(0.8);transform-origin:0 50%;">Katalog Explorer</div>
<div class="t" style="left:288.40px;top:1438.60px;height:22.00px;line-height:22.00px;font-size:12.40px;color:#3a3a50;font-weight:normal;transform:scaleX(0.8);transform-origin:0 50%;">SIRADOS live</div>
<div class="t" style="left:418.00px;top:1438.60px;height:22.00px;line-height:22.00px;font-size:12.40px;color:#3a3a50;font-weight:normal;transform:scaleX(0.8);transform-origin:0 50%;">Heinze Online</div>
<div class="t" style="left:548.00px;top:1438.60px;height:22.00px;line-height:22.00px;font-size:12.40px;color:#3a3a50;font-weight:normal;transform:scaleX(0.8);transform-origin:0 50%;">Adressen Explorer</div>
</div><svg style="position:absolute;left:0;top:0" width="1024" height="730" viewBox="0 0 1024 730"><defs><linearGradient id="dg" x1="0" y1="0" x2="0.5" y2="1"><stop offset="0" stop-color="#1818e0"/><stop offset="0.55" stop-color="#8080f0"/><stop offset="0.85" stop-color="#f4f4fa"/></linearGradient></defs><path d="M317.3 4.9 V7.4 H319.7 V4.9" stroke="#0a0a0a" stroke-width="0.95" fill="none"/><path d="M318.5 7.3 V9.7" stroke="#0a0a0a" stroke-width="0.9"/><path d="M1009.2 4 L1007.6 6.1 L1009.2 8.2" stroke="#3a3a3a" stroke-width="0.9" fill="none"/><path d="M1013.4 4 L1015 6.1 L1013.4 8.2" stroke="#555" stroke-width="0.8" fill="none"/><path d="M1018.3 4.1 L1022.1 7.9 M1022.1 4.1 L1018.3 7.9" stroke="#333" stroke-width="1.0"/><path d="M340.75 33.57 V737.92" stroke="#22252e" stroke-width="0.8" opacity="0.8"/><path d="M347.17 44.12 V168.38" stroke="#22252e" stroke-width="0.8" opacity="0.8"/><path d="M347.17 212.87 V737.92" stroke="#22252e" stroke-width="0.8" opacity="0.8"/><path d="M353.59 65.21 V157.84" stroke="#22252e" stroke-width="0.8" opacity="0.8"/><path d="M353.59 170.68 V200.03" stroke="#22252e" stroke-width="0.8" opacity="0.8"/><path d="M353.59 233.97 V621.91" stroke="#22252e" stroke-width="0.8" opacity="0.8"/><path d="M360.01 255.06 V379.32" stroke="#22252e" stroke-width="0.8" opacity="0.8"/><path d="M360.01 402.72 V600.81" stroke="#22252e" stroke-width="0.8" opacity="0.8"/><path d="M353.59 624.21 V716.83" stroke="#22252e" stroke-width="0.8" opacity="0.8"/><path d="M353.59 729.68 V737.92" stroke="#22252e" stroke-width="0.8" opacity="0.8"/><rect x="338.95" y="29.37" width="3.7" height="3.9" fill="#fcfcf4" stroke="#080808" stroke-width="0.75"/><path d="M339.80 31.32 H341.80" stroke="#111" stroke-width="0.7"/><path d="M344.60 30.10 L351.40 30.10 L351.40 35.30 L344.60 35.30 Z" fill="#f0e28a"/><path d="M344.60 33.70 L351.40 33.70 L351.40 35.40 L344.60 35.40 Z" fill="#a89028"/><circle cx="347.80" cy="29.50" r="2.1" fill="#f4f4f8"/><path d="M346.00 29.10 A2 2 0 0 1 348.60 27.50 L347.80 29.50 Z" fill="#3030c8"/><circle cx="349.00" cy="30.10" r="1.2" fill="#e01818"/><path d="M341.75 41.82 H347.15" stroke="#22252e" stroke-width="0.9" opacity="0.8"/><rect x="345.37" y="39.92" width="3.7" height="3.9" fill="#fcfcf4" stroke="#080808" stroke-width="0.75"/><path d="M346.22 41.87 H348.22" stroke="#111" stroke-width="0.7"/><path d="M351.02 40.65 L357.82 40.65 L357.82 45.85 L351.02 45.85 Z" fill="#f0e28a"/><path d="M351.02 44.25 L357.82 44.25 L357.82 45.95 L351.02 45.95 Z" fill="#a89028"/><circle cx="354.22" cy="40.05" r="2.1" fill="#f4f4f8"/><path d="M352.42 39.65 A2 2 0 0 1 355.02 38.05 L354.22 40.05 Z" fill="#3030c8"/><circle cx="355.42" cy="40.65" r="1.2" fill="#e01818"/><path d="M348.17 52.37 H353.57" stroke="#22252e" stroke-width="0.9" opacity="0.8"/><rect x="358.14" y="48.69" width="4.9" height="7.4" fill="url(#dg)" stroke="#505466" stroke-width="0.6"/><path d="M361.14 53.09 L362.54 52.29 L362.54 55.59 L360.74 55.59 Z" fill="#e81818"/><path d="M358.04 56.29 H363.14" stroke="#202020" stroke-width="0.6"/><path d="M348.17 62.91 H353.57" stroke="#22252e" stroke-width="0.9" opacity="0.8"/><rect x="351.79" y="61.01" width="3.7" height="3.9" fill="#fcfcf4" stroke="#080808" stroke-width="0.75"/><path d="M352.64 62.96 H354.64" stroke="#111" stroke-width="0.7"/><path d="M357.44 61.74 L364.24 61.74 L364.24 66.94 L357.44 66.94 Z" fill="#f0e28a"/><path d="M357.44 65.34 L364.24 65.34 L364.24 67.04 L357.44 67.04 Z" fill="#a89028"/><circle cx="360.64" cy="61.14" r="2.1" fill="#f4f4f8"/><path d="M358.84 60.74 A2 2 0 0 1 361.44 59.14 L360.64 61.14 Z" fill="#3030c8"/><circle cx="361.84" cy="61.74" r="1.2" fill="#e01818"/><path d="M354.59 73.46 H359.99" stroke="#22252e" stroke-width="0.9" opacity="0.8"/><rect x="364.56" y="69.79" width="4.9" height="7.4" fill="url(#dg)" stroke="#505466" stroke-width="0.6"/><path d="M367.56 74.19 L368.96 73.39 L368.96 76.69 L367.16 76.69 Z" fill="#e81818"/><path d="M364.46 77.39 H369.56" stroke="#202020" stroke-width="0.6"/><path d="M354.59 84.01 H359.99" stroke="#22252e" stroke-width="0.9" opacity="0.8"/><rect x="364.56" y="80.33" width="4.9" height="7.4" fill="url(#dg)" stroke="#505466" stroke-width="0.6"/><path d="M367.56 84.73 L368.96 83.93 L368.96 87.23 L367.16 87.23 Z" fill="#e81818"/><path d="M364.46 87.93 H369.56" stroke="#202020" stroke-width="0.6"/><path d="M354.59 94.56 H359.99" stroke="#22252e" stroke-width="0.9" opacity="0.8"/><rect x="364.56" y="90.88" width="4.9" height="7.4" fill="url(#dg)" stroke="#505466" stroke-width="0.6"/><path d="M367.56 95.28 L368.96 94.48 L368.96 97.78 L367.16 97.78 Z" fill="#e81818"/><path d="M364.46 98.48 H369.56" stroke="#202020" stroke-width="0.6"/><path d="M354.59 105.10 H359.99" stroke="#22252e" stroke-width="0.9" opacity="0.8"/><rect x="364.56" y="101.43" width="4.9" height="7.4" fill="url(#dg)" stroke="#505466" stroke-width="0.6"/><path d="M367.56 105.83 L368.96 105.03 L368.96 108.33 L367.16 108.33 Z" fill="#e81818"/><path d="M364.46 109.03 H369.56" stroke="#202020" stroke-width="0.6"/><path d="M354.59 115.65 H359.99" stroke="#22252e" stroke-width="0.9" opacity="0.8"/><rect x="364.56" y="111.98" width="4.9" height="7.4" fill="url(#dg)" stroke="#505466" stroke-width="0.6"/><path d="M367.56 116.38 L368.96 115.58 L368.96 118.88 L367.16 118.88 Z" fill="#e81818"/><path d="M364.46 119.58 H369.56" stroke="#202020" stroke-width="0.6"/><path d="M354.59 126.20 H359.99" stroke="#22252e" stroke-width="0.9" opacity="0.8"/><rect x="364.56" y="122.52" width="4.9" height="7.4" fill="url(#dg)" stroke="#505466" stroke-width="0.6"/><path d="M367.56 126.92 L368.96 126.12 L368.96 129.42 L367.16 129.42 Z" fill="#e81818"/><path d="M364.46 130.12 H369.56" stroke="#202020" stroke-width="0.6"/><path d="M354.59 136.74 H359.99" stroke="#22252e" stroke-width="0.9" opacity="0.8"/><rect x="364.56" y="133.07" width="4.9" height="7.4" fill="url(#dg)" stroke="#505466" stroke-width="0.6"/><path d="M367.56 137.47 L368.96 136.67 L368.96 139.97 L367.16 139.97 Z" fill="#e81818"/><path d="M364.46 140.67 H369.56" stroke="#202020" stroke-width="0.6"/><path d="M354.59 147.29 H359.99" stroke="#22252e" stroke-width="0.9" opacity="0.8"/><rect x="364.56" y="143.62" width="4.9" height="7.4" fill="url(#dg)" stroke="#505466" stroke-width="0.6"/><path d="M367.56 148.02 L368.96 147.22 L368.96 150.52 L367.16 150.52 Z" fill="#e81818"/><path d="M364.46 151.22 H369.56" stroke="#202020" stroke-width="0.6"/><path d="M354.59 157.84 H359.99" stroke="#22252e" stroke-width="0.9" opacity="0.8"/><rect x="364.56" y="154.16" width="4.9" height="7.4" fill="url(#dg)" stroke="#505466" stroke-width="0.6"/><path d="M367.56 158.56 L368.96 157.76 L368.96 161.06 L367.16 161.06 Z" fill="#e81818"/><path d="M364.46 161.76 H369.56" stroke="#202020" stroke-width="0.6"/><path d="M348.17 168.38 H353.57" stroke="#22252e" stroke-width="0.9" opacity="0.8"/><rect x="351.79" y="166.48" width="3.7" height="3.9" fill="#fcfcf4" stroke="#080808" stroke-width="0.75"/><path d="M352.64 168.43 H354.64" stroke="#111" stroke-width="0.7"/><path d="M357.44 167.21 L364.24 167.21 L364.24 172.41 L357.44 172.41 Z" fill="#f0e28a"/><path d="M357.44 170.81 L364.24 170.81 L364.24 172.51 L357.44 172.51 Z" fill="#a89028"/><circle cx="360.64" cy="166.61" r="2.1" fill="#f4f4f8"/><path d="M358.84 166.21 A2 2 0 0 1 361.44 164.61 L360.64 166.61 Z" fill="#3030c8"/><circle cx="361.84" cy="167.21" r="1.2" fill="#e01818"/><path d="M354.59 178.93 H359.99" stroke="#22252e" stroke-width="0.9" opacity="0.8"/><rect x="364.56" y="175.26" width="4.9" height="7.4" fill="url(#dg)" stroke="#505466" stroke-width="0.6"/><path d="M367.56 179.66 L368.96 178.86 L368.96 182.16 L367.16 182.16 Z" fill="#e81818"/><path d="M364.46 182.86 H369.56" stroke="#202020" stroke-width="0.6"/><path d="M354.59 189.48 H359.99" stroke="#22252e" stroke-width="0.9" opacity="0.8"/><rect x="364.56" y="185.81" width="4.9" height="7.4" fill="url(#dg)" stroke="#505466" stroke-width="0.6"/><path d="M367.56 190.21 L368.96 189.41 L368.96 192.71 L367.16 192.71 Z" fill="#e81818"/><path d="M364.46 193.41 H369.56" stroke="#202020" stroke-width="0.6"/><path d="M354.59 200.03 H359.99" stroke="#22252e" stroke-width="0.9" opacity="0.8"/><rect x="364.56" y="196.35" width="4.9" height="7.4" fill="url(#dg)" stroke="#505466" stroke-width="0.6"/><path d="M367.56 200.75 L368.96 199.95 L368.96 203.25 L367.16 203.25 Z" fill="#e81818"/><path d="M364.46 203.95 H369.56" stroke="#202020" stroke-width="0.6"/><path d="M341.75 210.57 H347.15" stroke="#22252e" stroke-width="0.9" opacity="0.8"/><rect x="345.37" y="208.67" width="3.7" height="3.9" fill="#fcfcf4" stroke="#080808" stroke-width="0.75"/><path d="M346.22 210.62 H348.22" stroke="#111" stroke-width="0.7"/><path d="M351.02 209.40 L357.82 209.40 L357.82 214.60 L351.02 214.60 Z" fill="#f0e28a"/><path d="M351.02 213.00 L357.82 213.00 L357.82 214.70 L351.02 214.70 Z" fill="#a89028"/><circle cx="354.22" cy="208.80" r="2.1" fill="#f4f4f8"/><path d="M352.42 208.40 A2 2 0 0 1 355.02 206.80 L354.22 208.80 Z" fill="#3030c8"/><circle cx="355.42" cy="209.40" r="1.2" fill="#e01818"/><path d="M348.17 221.12 H353.57" stroke="#22252e" stroke-width="0.9" opacity="0.8"/><path d="M359.34 218.85 L361.94 218.85 L363.34 220.35 L363.34 224.45 L359.34 224.45 Z" fill="#e8e8ee" stroke="#3a3ab8" stroke-width="0.7"/><rect x="360.34" y="221.25" width="1.8" height="2.4" fill="#a8a898"/><path d="M348.17 231.67 H353.57" stroke="#22252e" stroke-width="0.9" opacity="0.8"/><rect x="351.79" y="229.77" width="3.7" height="3.9" fill="#fcfcf4" stroke="#080808" stroke-width="0.75"/><path d="M352.64 231.72 H354.64" stroke="#111" stroke-width="0.7"/><path d="M357.44 230.49 L364.24 230.49 L364.24 235.69 L357.44 235.69 Z" fill="#f0e28a"/><path d="M357.44 234.09 L364.24 234.09 L364.24 235.79 L357.44 235.79 Z" fill="#a89028"/><circle cx="360.64" cy="229.89" r="2.1" fill="#f4f4f8"/><path d="M358.84 229.49 A2 2 0 0 1 361.44 227.89 L360.64 229.89 Z" fill="#3030c8"/><circle cx="361.84" cy="230.49" r="1.2" fill="#e01818"/><path d="M354.59 242.21 H359.99" stroke="#22252e" stroke-width="0.9" opacity="0.8"/><rect x="364.56" y="238.54" width="4.9" height="7.4" fill="url(#dg)" stroke="#505466" stroke-width="0.6"/><path d="M367.56 242.94 L368.96 242.14 L368.96 245.44 L367.16 245.44 Z" fill="#e81818"/><path d="M364.46 246.14 H369.56" stroke="#202020" stroke-width="0.6"/><path d="M354.59 252.76 H359.99" stroke="#22252e" stroke-width="0.9" opacity="0.8"/><rect x="358.21" y="250.86" width="3.7" height="3.9" fill="#fcfcf4" stroke="#080808" stroke-width="0.75"/><path d="M359.06 252.81 H361.06" stroke="#111" stroke-width="0.7"/><rect x="364.56" y="249.09" width="4.9" height="7.4" fill="url(#dg)" stroke="#505466" stroke-width="0.6"/><path d="M367.56 253.49 L368.96 252.69 L368.96 255.99 L367.16 255.99 Z" fill="#e81818"/><path d="M364.46 256.69 H369.56" stroke="#202020" stroke-width="0.6"/><path d="M361.01 263.31 H366.41" stroke="#22252e" stroke-width="0.9" opacity="0.8"/><path d="M372.18 261.03 L374.78 261.03 L376.18 262.53 L376.18 266.63 L372.18 266.63 Z" fill="#e8e8ee" stroke="#3a3ab8" stroke-width="0.7"/><rect x="373.18" y="263.43" width="1.8" height="2.4" fill="#a8a898"/><path d="M361.01 273.85 H366.41" stroke="#22252e" stroke-width="0.9" opacity="0.8"/><path d="M372.18 271.58 L374.78 271.58 L376.18 273.08 L376.18 277.18 L372.18 277.18 Z" fill="#e8e8ee" stroke="#3a3ab8" stroke-width="0.7"/><rect x="373.18" y="273.98" width="1.8" height="2.4" fill="#a8a898"/><path d="M361.01 284.40 H366.41" stroke="#22252e" stroke-width="0.9" opacity="0.8"/><path d="M372.18 282.13 L374.78 282.13 L376.18 283.63 L376.18 287.73 L372.18 287.73 Z" fill="#e8e8ee" stroke="#3a3ab8" stroke-width="0.7"/><rect x="373.18" y="284.53" width="1.8" height="2.4" fill="#a8a898"/><path d="M361.01 294.95 H366.41" stroke="#22252e" stroke-width="0.9" opacity="0.8"/><path d="M372.18 292.68 L374.78 292.68 L376.18 294.18 L376.18 298.28 L372.18 298.28 Z" fill="#e8e8ee" stroke="#3a3ab8" stroke-width="0.7"/><rect x="373.18" y="295.07" width="1.8" height="2.4" fill="#a8a898"/><path d="M361.01 305.50 H366.41" stroke="#22252e" stroke-width="0.9" opacity="0.8"/><path d="M372.18 303.22 L374.78 303.22 L376.18 304.72 L376.18 308.82 L372.18 308.82 Z" fill="#e8e8ee" stroke="#3a3ab8" stroke-width="0.7"/><rect x="373.18" y="305.62" width="1.8" height="2.4" fill="#a8a898"/><path d="M361.01 316.04 H366.41" stroke="#22252e" stroke-width="0.9" opacity="0.8"/><path d="M372.18 313.77 L374.78 313.77 L376.18 315.27 L376.18 319.37 L372.18 319.37 Z" fill="#e8e8ee" stroke="#3a3ab8" stroke-width="0.7"/><rect x="373.18" y="316.17" width="1.8" height="2.4" fill="#a8a898"/><path d="M361.01 326.59 H366.41" stroke="#22252e" stroke-width="0.9" opacity="0.8"/><path d="M372.18 324.32 L374.78 324.32 L376.18 325.82 L376.18 329.92 L372.18 329.92 Z" fill="#e8e8ee" stroke="#3a3ab8" stroke-width="0.7"/><rect x="373.18" y="326.72" width="1.8" height="2.4" fill="#a8a898"/><path d="M361.01 337.14 H366.41" stroke="#22252e" stroke-width="0.9" opacity="0.8"/><path d="M372.18 334.86 L374.78 334.86 L376.18 336.36 L376.18 340.46 L372.18 340.46 Z" fill="#e8e8ee" stroke="#3a3ab8" stroke-width="0.7"/><rect x="373.18" y="337.26" width="1.8" height="2.4" fill="#a8a898"/><path d="M361.01 347.68 H366.41" stroke="#22252e" stroke-width="0.9" opacity="0.8"/><path d="M372.18 345.41 L374.78 345.41 L376.18 346.91 L376.18 351.01 L372.18 351.01 Z" fill="#e8e8ee" stroke="#3a3ab8" stroke-width="0.7"/><rect x="373.18" y="347.81" width="1.8" height="2.4" fill="#a8a898"/><path d="M361.01 358.23 H366.41" stroke="#22252e" stroke-width="0.9" opacity="0.8"/><path d="M372.18 355.96 L374.78 355.96 L376.18 357.46 L376.18 361.56 L372.18 361.56 Z" fill="#e8e8ee" stroke="#3a3ab8" stroke-width="0.7"/><rect x="373.18" y="358.36" width="1.8" height="2.4" fill="#a8a898"/><path d="M361.01 368.78 H366.41" stroke="#22252e" stroke-width="0.9" opacity="0.8"/><path d="M372.18 366.50 L374.78 366.50 L376.18 368.00 L376.18 372.10 L372.18 372.10 Z" fill="#e8e8ee" stroke="#3a3ab8" stroke-width="0.7"/><rect x="373.18" y="368.90" width="1.8" height="2.4" fill="#a8a898"/><path d="M361.01 379.32 H366.41" stroke="#22252e" stroke-width="0.9" opacity="0.8"/><path d="M372.18 377.05 L374.78 377.05 L376.18 378.55 L376.18 382.65 L372.18 382.65 Z" fill="#e8e8ee" stroke="#3a3ab8" stroke-width="0.7"/><rect x="373.18" y="379.45" width="1.8" height="2.4" fill="#a8a898"/><path d="M354.59 389.87 H359.99" stroke="#22252e" stroke-width="0.9" opacity="0.8"/><rect x="364.56" y="386.20" width="4.9" height="7.4" fill="url(#dg)" stroke="#505466" stroke-width="0.6"/><path d="M367.56 390.60 L368.96 389.80 L368.96 393.10 L367.16 393.10 Z" fill="#e81818"/><path d="M364.46 393.80 H369.56" stroke="#202020" stroke-width="0.6"/><path d="M354.59 400.42 H359.99" stroke="#22252e" stroke-width="0.9" opacity="0.8"/><rect x="358.21" y="398.52" width="3.7" height="3.9" fill="#fcfcf4" stroke="#080808" stroke-width="0.75"/><path d="M359.06 400.47 H361.06" stroke="#111" stroke-width="0.7"/><rect x="364.56" y="396.75" width="4.9" height="7.4" fill="url(#dg)" stroke="#505466" stroke-width="0.6"/><path d="M367.56 401.15 L368.96 400.35 L368.96 403.65 L367.16 403.65 Z" fill="#e81818"/><path d="M364.46 404.35 H369.56" stroke="#202020" stroke-width="0.6"/><path d="M361.01 410.97 H366.41" stroke="#22252e" stroke-width="0.9" opacity="0.8"/><path d="M372.18 408.69 L374.78 408.69 L376.18 410.19 L376.18 414.29 L372.18 414.29 Z" fill="#e8e8ee" stroke="#3a3ab8" stroke-width="0.7"/><rect x="373.18" y="411.09" width="1.8" height="2.4" fill="#a8a898"/><path d="M361.01 421.51 H366.41" stroke="#22252e" stroke-width="0.9" opacity="0.8"/><path d="M372.18 419.24 L374.78 419.24 L376.18 420.74 L376.18 424.84 L372.18 424.84 Z" fill="#e8e8ee" stroke="#3a3ab8" stroke-width="0.7"/><rect x="373.18" y="421.64" width="1.8" height="2.4" fill="#a8a898"/><path d="M361.01 432.06 H366.41" stroke="#22252e" stroke-width="0.9" opacity="0.8"/><path d="M372.18 429.79 L374.78 429.79 L376.18 431.29 L376.18 435.39 L372.18 435.39 Z" fill="#e8e8ee" stroke="#3a3ab8" stroke-width="0.7"/><rect x="373.18" y="432.19" width="1.8" height="2.4" fill="#a8a898"/><path d="M361.01 442.61 H366.41" stroke="#22252e" stroke-width="0.9" opacity="0.8"/><path d="M372.18 440.33 L374.78 440.33 L376.18 441.83 L376.18 445.93 L372.18 445.93 Z" fill="#e8e8ee" stroke="#3a3ab8" stroke-width="0.7"/><rect x="373.18" y="442.73" width="1.8" height="2.4" fill="#a8a898"/><path d="M361.01 453.15 H366.41" stroke="#22252e" stroke-width="0.9" opacity="0.8"/><path d="M372.18 450.88 L374.78 450.88 L376.18 452.38 L376.18 456.48 L372.18 456.48 Z" fill="#e8e8ee" stroke="#3a3ab8" stroke-width="0.7"/><rect x="373.18" y="453.28" width="1.8" height="2.4" fill="#a8a898"/><path d="M361.01 463.70 H366.41" stroke="#22252e" stroke-width="0.9" opacity="0.8"/><path d="M372.18 461.43 L374.78 461.43 L376.18 462.93 L376.18 467.03 L372.18 467.03 Z" fill="#e8e8ee" stroke="#3a3ab8" stroke-width="0.7"/><rect x="373.18" y="463.83" width="1.8" height="2.4" fill="#a8a898"/><path d="M361.01 474.25 H366.41" stroke="#22252e" stroke-width="0.9" opacity="0.8"/><path d="M372.18 471.97 L374.78 471.97 L376.18 473.47 L376.18 477.57 L372.18 477.57 Z" fill="#e8e8ee" stroke="#3a3ab8" stroke-width="0.7"/><rect x="373.18" y="474.37" width="1.8" height="2.4" fill="#a8a898"/><path d="M361.01 484.79 H366.41" stroke="#22252e" stroke-width="0.9" opacity="0.8"/><path d="M372.18 482.52 L374.78 482.52 L376.18 484.02 L376.18 488.12 L372.18 488.12 Z" fill="#e8e8ee" stroke="#3a3ab8" stroke-width="0.7"/><rect x="373.18" y="484.92" width="1.8" height="2.4" fill="#a8a898"/><path d="M361.01 495.34 H366.41" stroke="#22252e" stroke-width="0.9" opacity="0.8"/><path d="M372.18 493.07 L374.78 493.07 L376.18 494.57 L376.18 498.67 L372.18 498.67 Z" fill="#e8e8ee" stroke="#3a3ab8" stroke-width="0.7"/><rect x="373.18" y="495.47" width="1.8" height="2.4" fill="#a8a898"/><path d="M361.01 505.89 H366.41" stroke="#22252e" stroke-width="0.9" opacity="0.8"/><path d="M372.18 503.62 L374.78 503.62 L376.18 505.12 L376.18 509.22 L372.18 509.22 Z" fill="#e8e8ee" stroke="#3a3ab8" stroke-width="0.7"/><rect x="373.18" y="506.01" width="1.8" height="2.4" fill="#a8a898"/><path d="M361.01 516.44 H366.41" stroke="#22252e" stroke-width="0.9" opacity="0.8"/><path d="M372.18 514.16 L374.78 514.16 L376.18 515.66 L376.18 519.76 L372.18 519.76 Z" fill="#e8e8ee" stroke="#3a3ab8" stroke-width="0.7"/><rect x="373.18" y="516.56" width="1.8" height="2.4" fill="#a8a898"/><path d="M361.01 526.98 H366.41" stroke="#22252e" stroke-width="0.9" opacity="0.8"/><path d="M372.18 524.71 L374.78 524.71 L376.18 526.21 L376.18 530.31 L372.18 530.31 Z" fill="#e8e8ee" stroke="#3a3ab8" stroke-width="0.7"/><rect x="373.18" y="527.11" width="1.8" height="2.4" fill="#a8a898"/><path d="M361.01 537.53 H366.41" stroke="#22252e" stroke-width="0.9" opacity="0.8"/><path d="M372.18 535.26 L374.78 535.26 L376.18 536.76 L376.18 540.86 L372.18 540.86 Z" fill="#e8e8ee" stroke="#3a3ab8" stroke-width="0.7"/><rect x="373.18" y="537.66" width="1.8" height="2.4" fill="#a8a898"/><path d="M361.01 548.08 H366.41" stroke="#22252e" stroke-width="0.9" opacity="0.8"/><path d="M372.18 545.80 L374.78 545.80 L376.18 547.30 L376.18 551.40 L372.18 551.40 Z" fill="#e8e8ee" stroke="#3a3ab8" stroke-width="0.7"/><rect x="373.18" y="548.20" width="1.8" height="2.4" fill="#a8a898"/><path d="M361.01 558.62 H366.41" stroke="#22252e" stroke-width="0.9" opacity="0.8"/><path d="M372.18 556.35 L374.78 556.35 L376.18 557.85 L376.18 561.95 L372.18 561.95 Z" fill="#e8e8ee" stroke="#3a3ab8" stroke-width="0.7"/><rect x="373.18" y="558.75" width="1.8" height="2.4" fill="#a8a898"/><path d="M361.01 569.17 H366.41" stroke="#22252e" stroke-width="0.9" opacity="0.8"/><path d="M372.18 566.90 L374.78 566.90 L376.18 568.40 L376.18 572.50 L372.18 572.50 Z" fill="#e8e8ee" stroke="#3a3ab8" stroke-width="0.7"/><rect x="373.18" y="569.30" width="1.8" height="2.4" fill="#a8a898"/><path d="M361.01 579.72 H366.41" stroke="#22252e" stroke-width="0.9" opacity="0.8"/><path d="M372.18 577.44 L374.78 577.44 L376.18 578.94 L376.18 583.04 L372.18 583.04 Z" fill="#e8e8ee" stroke="#3a3ab8" stroke-width="0.7"/><rect x="373.18" y="579.84" width="1.8" height="2.4" fill="#a8a898"/><path d="M361.01 590.26 H366.41" stroke="#22252e" stroke-width="0.9" opacity="0.8"/><path d="M372.18 587.99 L374.78 587.99 L376.18 589.49 L376.18 593.59 L372.18 593.59 Z" fill="#e8e8ee" stroke="#3a3ab8" stroke-width="0.7"/><rect x="373.18" y="590.39" width="1.8" height="2.4" fill="#a8a898"/><path d="M361.01 600.81 H366.41" stroke="#22252e" stroke-width="0.9" opacity="0.8"/><path d="M372.18 598.54 L374.78 598.54 L376.18 600.04 L376.18 604.14 L372.18 604.14 Z" fill="#e8e8ee" stroke="#3a3ab8" stroke-width="0.7"/><rect x="373.18" y="600.94" width="1.8" height="2.4" fill="#a8a898"/><path d="M354.59 611.36 H359.99" stroke="#22252e" stroke-width="0.9" opacity="0.8"/><rect x="364.56" y="607.69" width="4.9" height="7.4" fill="url(#dg)" stroke="#505466" stroke-width="0.6"/><path d="M367.56 612.09 L368.96 611.29 L368.96 614.59 L367.16 614.59 Z" fill="#e81818"/><path d="M364.46 615.29 H369.56" stroke="#202020" stroke-width="0.6"/><path d="M348.17 621.91 H353.57" stroke="#22252e" stroke-width="0.9" opacity="0.8"/><rect x="351.79" y="620.01" width="3.7" height="3.9" fill="#fcfcf4" stroke="#080808" stroke-width="0.75"/><path d="M352.64 621.96 H354.64" stroke="#111" stroke-width="0.7"/><path d="M357.44 620.73 L364.24 620.73 L364.24 625.93 L357.44 625.93 Z" fill="#f0e28a"/><path d="M357.44 624.33 L364.24 624.33 L364.24 626.03 L357.44 626.03 Z" fill="#a89028"/><circle cx="360.64" cy="620.13" r="2.1" fill="#f4f4f8"/><path d="M358.84 619.73 A2 2 0 0 1 361.44 618.13 L360.64 620.13 Z" fill="#3030c8"/><circle cx="361.84" cy="620.73" r="1.2" fill="#e01818"/><path d="M354.59 632.45 H359.99" stroke="#22252e" stroke-width="0.9" opacity="0.8"/><rect x="364.56" y="628.78" width="4.9" height="7.4" fill="url(#dg)" stroke="#505466" stroke-width="0.6"/><path d="M367.56 633.18 L368.96 632.38 L368.96 635.68 L367.16 635.68 Z" fill="#e81818"/><path d="M364.46 636.38 H369.56" stroke="#202020" stroke-width="0.6"/><path d="M354.59 643.00 H359.99" stroke="#22252e" stroke-width="0.9" opacity="0.8"/><rect x="364.56" y="639.33" width="4.9" height="7.4" fill="url(#dg)" stroke="#505466" stroke-width="0.6"/><path d="M367.56 643.73 L368.96 642.93 L368.96 646.23 L367.16 646.23 Z" fill="#e81818"/><path d="M364.46 646.93 H369.56" stroke="#202020" stroke-width="0.6"/><path d="M354.59 653.55 H359.99" stroke="#22252e" stroke-width="0.9" opacity="0.8"/><rect x="364.56" y="649.87" width="4.9" height="7.4" fill="url(#dg)" stroke="#505466" stroke-width="0.6"/><path d="M367.56 654.27 L368.96 653.47 L368.96 656.77 L367.16 656.77 Z" fill="#e81818"/><path d="M364.46 657.47 H369.56" stroke="#202020" stroke-width="0.6"/><path d="M354.59 664.09 H359.99" stroke="#22252e" stroke-width="0.9" opacity="0.8"/><rect x="364.56" y="660.42" width="4.9" height="7.4" fill="url(#dg)" stroke="#505466" stroke-width="0.6"/><path d="M367.56 664.82 L368.96 664.02 L368.96 667.32 L367.16 667.32 Z" fill="#e81818"/><path d="M364.46 668.02 H369.56" stroke="#202020" stroke-width="0.6"/><path d="M354.59 674.64 H359.99" stroke="#22252e" stroke-width="0.9" opacity="0.8"/><rect x="364.56" y="670.97" width="4.9" height="7.4" fill="url(#dg)" stroke="#505466" stroke-width="0.6"/><path d="M367.56 675.37 L368.96 674.57 L368.96 677.87 L367.16 677.87 Z" fill="#e81818"/><path d="M364.46 678.57 H369.56" stroke="#202020" stroke-width="0.6"/><path d="M354.59 685.19 H359.99" stroke="#22252e" stroke-width="0.9" opacity="0.8"/><rect x="364.56" y="681.51" width="4.9" height="7.4" fill="url(#dg)" stroke="#505466" stroke-width="0.6"/><path d="M367.56 685.91 L368.96 685.11 L368.96 688.41 L367.16 688.41 Z" fill="#e81818"/><path d="M364.46 689.11 H369.56" stroke="#202020" stroke-width="0.6"/><path d="M354.59 695.73 H359.99" stroke="#22252e" stroke-width="0.9" opacity="0.8"/><rect x="364.56" y="692.06" width="4.9" height="7.4" fill="url(#dg)" stroke="#505466" stroke-width="0.6"/><path d="M367.56 696.46 L368.96 695.66 L368.96 698.96 L367.16 698.96 Z" fill="#e81818"/><path d="M364.46 699.66 H369.56" stroke="#202020" stroke-width="0.6"/><path d="M354.59 706.28 H359.99" stroke="#22252e" stroke-width="0.9" opacity="0.8"/><rect x="364.56" y="702.61" width="4.9" height="7.4" fill="url(#dg)" stroke="#505466" stroke-width="0.6"/><path d="M367.56 707.01 L368.96 706.21 L368.96 709.51 L367.16 709.51 Z" fill="#e81818"/><path d="M364.46 710.21 H369.56" stroke="#202020" stroke-width="0.6"/><path d="M354.59 716.83 H359.99" stroke="#22252e" stroke-width="0.9" opacity="0.8"/><rect x="364.56" y="713.16" width="4.9" height="7.4" fill="url(#dg)" stroke="#505466" stroke-width="0.6"/><path d="M367.56 717.56 L368.96 716.76 L368.96 720.06 L367.16 720.06 Z" fill="#e81818"/><path d="M364.46 720.76 H369.56" stroke="#202020" stroke-width="0.6"/><path d="M348.17 727.38 H353.57" stroke="#22252e" stroke-width="0.9" opacity="0.8"/><rect x="351.79" y="725.48" width="3.7" height="3.9" fill="#fcfcf4" stroke="#080808" stroke-width="0.75"/><path d="M352.64 727.43 H354.64" stroke="#111" stroke-width="0.7"/><path d="M357.44 726.20 L364.24 726.20 L364.24 731.40 L357.44 731.40 Z" fill="#f0e28a"/><path d="M357.44 729.80 L364.24 729.80 L364.24 731.50 L357.44 731.50 Z" fill="#a89028"/><circle cx="360.64" cy="725.60" r="2.1" fill="#f4f4f8"/><path d="M358.84 725.20 A2 2 0 0 1 361.44 723.60 L360.64 725.60 Z" fill="#3030c8"/><circle cx="361.84" cy="726.20" r="1.2" fill="#e01818"/><path d="M25.6 177.70 Q26 176.90 28 177.00 L31.6 177.20 Q32.6 177.70 32.4 179.70 L31.6 181.90 L26.8 182.00 Q25.4 181.10 25.6 177.70 Z" fill="#10a818"/><circle cx="28.4" cy="179.70" r="1.7" fill="#d8fcff"/><path d="M31.2 178.90 L31.8 180.70" stroke="#1a2a1a" stroke-width="0.9"/><path d="M30.4 181.30 L32 184.40" stroke="#1a78f0" stroke-width="1.2"/><path d="M26.6 181.70 L28.8 183.70" stroke="#7070c8" stroke-width="0.7"/><path d="M25.6 187.17 Q26 186.37 28 186.47 L31.6 186.67 Q32.6 187.17 32.4 189.17 L31.6 191.37 L26.8 191.47 Q25.4 190.57 25.6 187.17 Z" fill="#10a818"/><circle cx="28.4" cy="189.17" r="1.7" fill="#d8fcff"/><path d="M31.2 188.37 L31.8 190.17" stroke="#1a2a1a" stroke-width="0.9"/><path d="M30.4 190.77 L32 193.87" stroke="#1a78f0" stroke-width="1.2"/><path d="M26.6 191.17 L28.8 193.17" stroke="#7070c8" stroke-width="0.7"/><path d="M25.6 196.64 Q26 195.84 28 195.94 L31.6 196.14 Q32.6 196.64 32.4 198.64 L31.6 200.84 L26.8 200.94 Q25.4 200.04 25.6 196.64 Z" fill="#10a818"/><circle cx="28.4" cy="198.64" r="1.7" fill="#d8fcff"/><path d="M31.2 197.84 L31.8 199.64" stroke="#1a2a1a" stroke-width="0.9"/><path d="M30.4 200.24 L32 203.34" stroke="#1a78f0" stroke-width="1.2"/><path d="M26.6 200.64 L28.8 202.64" stroke="#7070c8" stroke-width="0.7"/><path d="M25.6 206.11 Q26 205.31 28 205.41 L31.6 205.61 Q32.6 206.11 32.4 208.11 L31.6 210.31 L26.8 210.41 Q25.4 209.51 25.6 206.11 Z" fill="#10a818"/><circle cx="28.4" cy="208.11" r="1.7" fill="#d8fcff"/><path d="M31.2 207.31 L31.8 209.11" stroke="#1a2a1a" stroke-width="0.9"/><path d="M30.4 209.71 L32 212.81" stroke="#1a78f0" stroke-width="1.2"/><path d="M26.6 210.11 L28.8 212.11" stroke="#7070c8" stroke-width="0.7"/><path d="M25.6 215.58 Q26 214.78 28 214.88 L31.6 215.08 Q32.6 215.58 32.4 217.58 L31.6 219.78 L26.8 219.88 Q25.4 218.98 25.6 215.58 Z" fill="#10a818"/><circle cx="28.4" cy="217.58" r="1.7" fill="#d8fcff"/><path d="M31.2 216.78 L31.8 218.58" stroke="#1a2a1a" stroke-width="0.9"/><path d="M30.4 219.18 L32 222.28" stroke="#1a78f0" stroke-width="1.2"/><path d="M26.6 219.58 L28.8 221.58" stroke="#7070c8" stroke-width="0.7"/><path d="M25.6 225.05 Q26 224.25 28 224.35 L31.6 224.55 Q32.6 225.05 32.4 227.05 L31.6 229.25 L26.8 229.35 Q25.4 228.45 25.6 225.05 Z" fill="#10a818"/><circle cx="28.4" cy="227.05" r="1.7" fill="#d8fcff"/><path d="M31.2 226.25 L31.8 228.05" stroke="#1a2a1a" stroke-width="0.9"/><path d="M30.4 228.65 L32 231.75" stroke="#1a78f0" stroke-width="1.2"/><path d="M26.6 229.05 L28.8 231.05" stroke="#7070c8" stroke-width="0.7"/><path d="M25.6 234.52 Q26 233.72 28 233.82 L31.6 234.02 Q32.6 234.52 32.4 236.52 L31.6 238.72 L26.8 238.82 Q25.4 237.92 25.6 234.52 Z" fill="#10a818"/><circle cx="28.4" cy="236.52" r="1.7" fill="#d8fcff"/><path d="M31.2 235.72 L31.8 237.52" stroke="#1a2a1a" stroke-width="0.9"/><path d="M30.4 238.12 L32 241.22" stroke="#1a78f0" stroke-width="1.2"/><path d="M26.6 238.52 L28.8 240.52" stroke="#7070c8" stroke-width="0.7"/><circle cx="4.3" cy="22.3" r="3.3" fill="#18a030"/><path d="M1.2 20.5 Q3 18.6 6 19.2 L7.6 21 L6.8 24 L4 25 Z" fill="#10b028"/><circle cx="4" cy="22.6" r="1.6" fill="#c8fcff"/><path d="M6.6 20.2 L7.4 23.6" stroke="#111" stroke-width="1.1"/><path d="M5.6 24.6 L7.4 27" stroke="#1e5ee8" stroke-width="1.3"/><path d="M3.5 25.5 L5 26.5" stroke="#555" stroke-width="0.8"/><circle cx="13.3" cy="23.6" r="0.7" fill="#111"/><path d="M17.2 21.5 L20.5 21.5 L20.5 23 L24.2 23 L23 26.6 L17.5 26.6 Z" fill="#b8a818" stroke="#333" stroke-width="0.5"/><path d="M17.4 22 L20.4 22 L18.6 25 L17.4 25 Z" fill="#f4f0b0"/><path d="M20.2 25 L24 19.2" stroke="#111" stroke-width="1.1"/><rect x="27.6" y="19.2" width="6" height="5.4" fill="#1028c8" stroke="#111" stroke-width="0.4"/><rect x="29" y="20" width="3.4" height="2.4" fill="#7090f0"/><path d="M27 23.5 L33.6 23.5 L33 26.8 L27.3 26.8 Z" fill="#c0b020" stroke="#222" stroke-width="0.5"/><rect x="39.6" y="19.6" width="3.6" height="4.6" fill="#c6c8cc" stroke="#a8aaae" stroke-width="0.4"/><rect x="42" y="22" width="4" height="4.6" fill="#d4d6da" stroke="#a8aaae" stroke-width="0.4"/><rect x="49.6" y="20" width="6.2" height="6.6" fill="#c2c4c8" stroke="#a0a2a6" stroke-width="0.4"/><rect x="51.4" y="19.2" width="2.6" height="1.6" fill="#b0b2b6"/><path d="M52.5 23 L55 26" stroke="#9a9ca0" stroke-width="0.8"/><path d="M60.6 19.8 L66 26 M66 19.8 L60.6 26" stroke="#c41414" stroke-width="1.1"/><circle cx="73.8" cy="24.6" r="2.1" fill="#111"/><circle cx="77.3" cy="24.6" r="2.1" fill="#111"/><rect x="72.6" y="20" width="1.8" height="4" fill="#111"/><rect x="76.6" y="20" width="1.8" height="4" fill="#111"/><path d="M82 21 L86 21 L84.6 23 L84.6 25.5 L83.6 26 L83.6 23 Z" fill="#666" stroke="#888" stroke-width="0.3"/><path d="M85.4 22.6 L89 22.6 M85.4 24.6 L89 24.6" stroke="#555" stroke-width="0.7"/><rect x="91.8" y="19.4" width="3" height="3.4" fill="#f0e000"/><rect x="91.6" y="19.4" width="1" height="3.4" fill="#c02070"/><rect x="92.6" y="21.6" width="2.2" height="1.2" fill="#4040d0"/><rect x="91.8" y="23.6" width="3" height="3.4" fill="#f0e000"/><rect x="91.6" y="23.6" width="1" height="3.4" fill="#c02070"/><rect x="92.6" y="25.8" width="2.2" height="1.2" fill="#4040d0"/><path d="M95.5 20.8 L97 20.8 M95.5 25 L97 25" stroke="#666" stroke-width="0.5"/><path d="M103.3 19.3 L107.4 19.3 L108.6 20.5 L108.6 27 L103.3 27 Z" fill="#f8f8f4" stroke="#aaa" stroke-width="0.4"/><path d="M106.6 20.6 L105.2 23 L106.4 23.4 L105 25.8" stroke="#30a040" stroke-width="0.9" fill="none"/><path d="M115.2 22.4 L119.8 22.4 L119.8 26.6 L115.2 26.6 Z" fill="#f4f4f4" stroke="#444" stroke-width="0.5"/><path d="M115 22.4 L118.4 19.6 L121 20.6 L119.8 22.4" fill="#888" stroke="#444" stroke-width="0.4"/><path d="M120.6 19.4 L121.8 21" stroke="#4050d0" stroke-width="0.8"/><rect x="9.8" y="35.9" width="2.9" height="5.8" fill="#1a2a9a"/><rect x="9.9" y="37.2" width="2.6" height="3" fill="#e81030"/><rect x="12.8" y="35.9" width="3.3" height="3.3" fill="#f8f000"/><rect x="12.8" y="39.3" width="3.3" height="2.4" fill="#10a8e8"/><rect x="13.6" y="40.2" width="2.4" height="1.5" fill="#2040f0"/><path d="M39 42.4 L39 37.6 L43.6 35.4 L43.6 41.6" fill="none" stroke="#111" stroke-width="1.1"/><path d="M40.6 38.6 L43 37.4 L43 41.6 L40.6 42.2 Z" fill="#e0d030"/><rect x="41" y="38" width="1.6" height="1.6" fill="#3050c0"/><rect x="62.4" y="35.3" width="6.6" height="7.2" fill="#f0f0f0" stroke="#111" stroke-width="0.9"/><rect x="64" y="37" width="3.2" height="1.8" fill="#60d070"/><rect x="64" y="39" width="3.2" height="2" fill="#e080d0"/><path d="M65.6 35.3 L65.6 42.5" stroke="#444" stroke-width="0.4"/><path d="M81.5 36 L84.5 37.2 L84.5 42.4 L81.5 41.2 Z" fill="#8080e0" stroke="#404080" stroke-width="0.5"/><path d="M84.5 37.2 L87.6 36 L87.6 41.2 L84.5 42.4 Z" fill="#6060c8" stroke="#404080" stroke-width="0.5"/><ellipse cx="104.2" cy="37.8" rx="3.6" ry="2.5" fill="#20b020"/><circle cx="103" cy="37.6" r="0.6" fill="#111"/><circle cx="105.6" cy="38.4" r="0.8" fill="#222"/><path d="M103.4 40.2 L102 42" stroke="#555" stroke-width="0.7"/><rect x="127.6" y="35.1" width="5.4" height="7.4" fill="#1a2a30"/><rect x="127.6" y="35.1" width="5.4" height="1.6" fill="#2090d0"/><rect x="129.6" y="37" width="1.4" height="5" fill="#90c0d0"/><ellipse cx="158.2" cy="37.8" rx="3.5" ry="2.6" fill="#18a828"/><circle cx="158.8" cy="38" r="1.5" fill="#c8fcff"/><path d="M160 39.6 L161.6 41.6" stroke="#2060e0" stroke-width="1.1"/><path d="M157.8 40 L156.6 42" stroke="#555" stroke-width="0.7"/><path d="M177 39 L179.8 36 L182.4 38.6 L182.4 42 L177 42 Z" fill="#f0f0f0" stroke="#111" stroke-width="0.7"/><path d="M178.4 37.8 L179.8 35.6 L181.6 37.2 L180.4 38.8 Z" fill="#d01818"/><rect x="180.2" y="39.6" width="2.8" height="3" fill="#e8e040"/><rect x="195.4" y="35.4" width="6" height="6.8" fill="#f4f4f4" stroke="#111" stroke-width="0.8"/><rect x="196.6" y="37" width="1.4" height="1.4" fill="#e03030"/><rect x="197.8" y="38.4" width="1.8" height="1.4" fill="#30c030"/><rect x="198.4" y="39.6" width="2" height="1.4" fill="#8040e0"/><path d="M201.4 36 L201.8 42.6 L196 42.6" stroke="#333" stroke-width="0.6" fill="none"/><rect x="221.8" y="35.6" width="6.8" height="7" fill="#c8bcb0" stroke="#807468" stroke-width="0.4"/><rect x="222.4" y="36.2" width="1.8" height="6" fill="#f8f8f4"/><rect x="225" y="37.4" width="3" height="1.2" fill="#f0f0ec"/><rect x="225" y="39.6" width="3" height="1.2" fill="#f0f0ec"/><circle cx="222.6" cy="35.8" r="0.5" fill="#30a0a0"/><rect x="3.2" y="721.2" width="1.6" height="6.4" fill="#1a2a9a"/><rect x="3.3" y="722.6" width="1.4" height="3.4" fill="#e81030"/><rect x="5" y="721.4" width="3.2" height="3.6" fill="#f8f000"/><rect x="5" y="725.2" width="2.4" height="2.4" fill="#2060f0"/><rect x="68.4" y="720.8" width="4.6" height="7.2" fill="#f4f4f4" stroke="#111" stroke-width="0.8"/><rect x="71.6" y="721" width="1.6" height="7" fill="#111"/><rect x="69" y="722.6" width="1.6" height="1.2" fill="#40c040"/><rect x="69" y="724.6" width="1.6" height="1.2" fill="#d060c0"/><path d="M134.6 727.8 L136.6 720.6 L138.8 727.8 M135.2 725.6 L138.2 725.6" stroke="#f0a018" stroke-width="1" fill="none"/><rect x="198.6" y="720.8" width="5.4" height="7.2" fill="#28a838"/><path d="M199.6 722 L199.6 727 M199.6 724.4 L201 724.4 M201.8 722.6 L201.8 727 M203 723 L203 727" stroke="#e8ffe8" stroke-width="0.5"/><circle cx="266" cy="723.4" r="2.4" fill="#303030"/><rect x="263.8" y="724" width="4.6" height="4" fill="#202020"/><rect x="264.8" y="722.4" width="2.4" height="2" fill="#f0e8e0"/><rect x="265.2" y="725.4" width="1.6" height="2" fill="#c03030"/></svg></body></html>
